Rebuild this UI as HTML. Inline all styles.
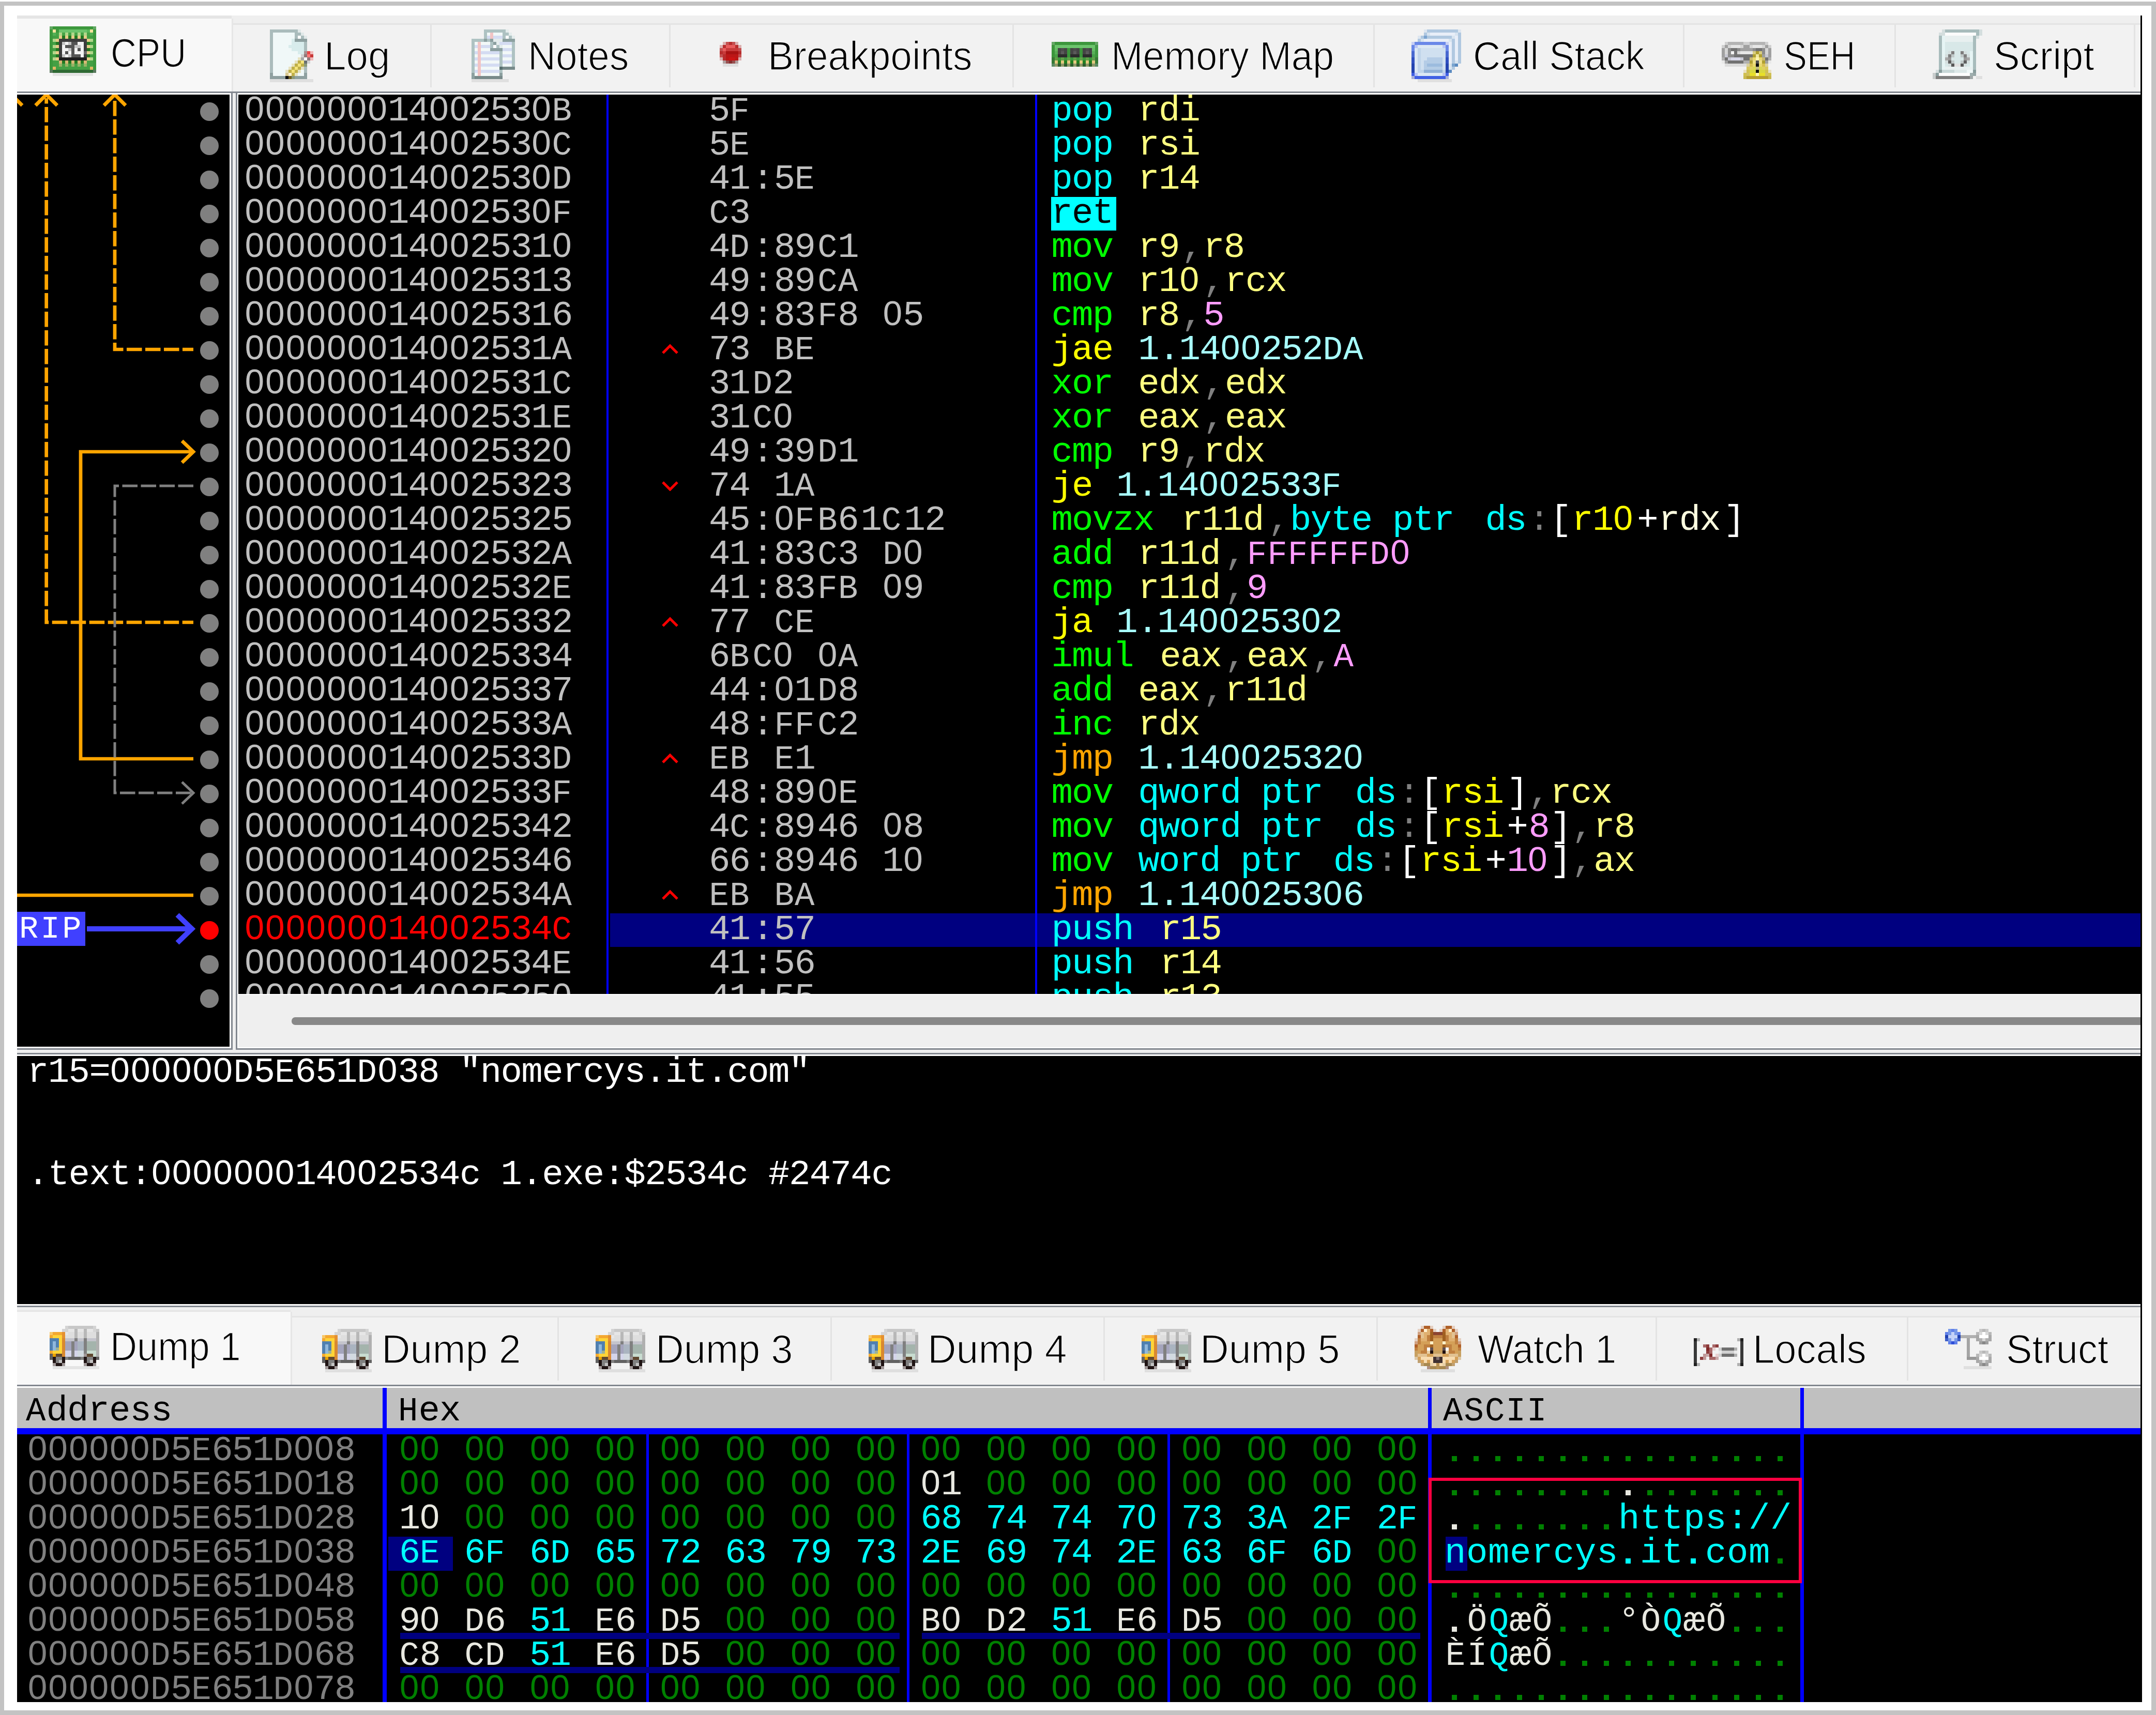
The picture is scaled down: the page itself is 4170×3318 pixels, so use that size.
<!DOCTYPE html><html><head><meta charset="utf-8"><style>
*{margin:0;padding:0;box-sizing:border-box}
html,body{width:4170px;height:3318px;overflow:hidden;background:#fff}
body{position:relative;font-family:"Liberation Sans",sans-serif}
.a{position:absolute}
.m{font-family:"Liberation Mono",monospace;white-space:pre;position:absolute;font-size:69px;line-height:66px;height:66px;-webkit-text-stroke:0px #000}
.t{position:absolute;font-family:"Liberation Sans",sans-serif;font-size:78px;line-height:78px;white-space:pre;color:#000;transform-origin:0 0;-webkit-text-stroke:1.6px #f4f4f4}
.z,.u{font-style:normal;display:inline-block;width:var(--w);text-align:center;letter-spacing:0;line-height:0}
.z{font-family:"Liberation Sans",sans-serif;font-size:67px}
.u{font-size:64px}
</style></head><body>

<div class="a" style="left:0;top:3px;width:4170px;height:8px;background:#c3c3c3"></div>
<div class="a" style="left:0;top:3px;width:8px;height:3315px;background:#c3c3c3"></div>
<div class="a" style="left:4161px;top:3px;width:9px;height:3315px;background:#c3c3c3"></div>
<div class="a" style="left:0;top:3309px;width:4170px;height:9px;background:#c3c3c3"></div>
<div class="a" style="left:4140px;top:30px;width:3px;height:3263px;background:#000"></div>
<div class="a" style="left:33px;top:30px;width:4107px;height:147px;background:#efefef"></div>
<div class="a" style="left:33px;top:45px;width:4107px;height:3px;background:#e4e4e4"></div>
<div class="a" style="left:33px;top:48px;width:4107px;height:129px;background:#f2f2f2"></div>
<div class="a" style="left:33px;top:30px;width:415px;height:6px;background:#e5e5e5"></div>
<div class="a" style="left:33px;top:36px;width:415px;height:141px;background:#f8f8f8"></div>
<div class="a" style="left:448px;top:36px;width:3px;height:141px;background:#e6e6e6"></div>
<div class="a" style="left:832px;top:48px;width:3px;height:121px;background:#e3e3e3"></div>
<div class="a" style="left:1294px;top:48px;width:3px;height:121px;background:#e3e3e3"></div>
<div class="a" style="left:1958px;top:48px;width:3px;height:121px;background:#e3e3e3"></div>
<div class="a" style="left:2656px;top:48px;width:3px;height:121px;background:#e3e3e3"></div>
<div class="a" style="left:3255px;top:48px;width:3px;height:121px;background:#e3e3e3"></div>
<div class="a" style="left:3664px;top:48px;width:3px;height:121px;background:#e3e3e3"></div>
<div class="a" style="left:4127px;top:48px;width:3px;height:121px;background:#e3e3e3"></div>
<div class="a" style="left:33px;top:177px;width:4107px;height:3px;background:#82878f"></div>
<div class="a" style="left:33px;top:180px;width:4107px;height:3px;background:#fff"></div>
<div class="t" style="left:214.35965572275418px;top:63px;transform:scaleX(0.8879542863657099)">CPU</div>
<div class="t" style="left:626.9925302077654px;top:68.5px;transform:scaleX(0.9794772870851173)">Log</div>
<div class="t" style="left:1020.6945507405288px;top:69px;transform:scaleX(0.9584282874396253)">Notes</div>
<div class="t" style="left:1484.8650752645844px;top:69px;transform:scaleX(0.9601157210925156)">Breakpoints</div>
<div class="t" style="left:2148.865728126276px;top:69px;transform:scaleX(0.9471024609299021)">Memory Map</div>
<div class="t" style="left:2848.5310433775085px;top:69px;transform:scaleX(0.9444462781635823)">Call Stack</div>
<div class="t" style="left:3449.9977764741743px;top:69px;transform:scaleX(0.8630100339483612)">SEH</div>
<div class="t" style="left:3855.891891891892px;top:69px;transform:scaleX(0.9756756756756757)">Script</div>
<svg class="a" style="left:96px;top:51px" width="90" height="96" viewBox="0 0 90 96" shape-rendering="crispEdges"><rect x="6" y="90" width="78" height="6" fill="#000" opacity="0.08"/><rect x="0" y="0" width="6" height="6" fill="#62a862"/><rect x="6" y="0" width="78" height="6" fill="#3c983c"/><rect x="84" y="0" width="6" height="6" fill="#62a862"/><rect x="0" y="6" width="6" height="6" fill="#3c983c"/><rect x="6" y="6" width="6" height="6" fill="#fae49c"/><rect x="12" y="6" width="6" height="6" fill="#3c983c"/><rect x="18" y="6" width="54" height="6" fill="#6cc46c"/><rect x="72" y="6" width="6" height="6" fill="#58b858"/><rect x="78" y="6" width="6" height="6" fill="#fae49c"/><rect x="84" y="6" width="6" height="6" fill="#3c983c"/><rect x="0" y="12" width="6" height="6" fill="#3c983c"/><rect x="6" y="12" width="6" height="6" fill="#55b055"/><rect x="12" y="12" width="6" height="6" fill="#46a446"/><rect x="18" y="12" width="6" height="6" fill="#b2d68a"/><rect x="24" y="12" width="6" height="6" fill="#46a446"/><rect x="30" y="12" width="6" height="6" fill="#b2d68a"/><rect x="36" y="12" width="6" height="6" fill="#46a446"/><rect x="42" y="12" width="6" height="6" fill="#b2d68a"/><rect x="48" y="12" width="6" height="6" fill="#46a446"/><rect x="54" y="12" width="6" height="6" fill="#b2d68a"/><rect x="60" y="12" width="6" height="6" fill="#46a446"/><rect x="66" y="12" width="6" height="6" fill="#b2d68a"/><rect x="72" y="12" width="6" height="6" fill="#46a446"/><rect x="78" y="12" width="6" height="6" fill="#55b055"/><rect x="84" y="12" width="6" height="6" fill="#3c983c"/><rect x="0" y="18" width="6" height="6" fill="#3c983c"/><rect x="6" y="18" width="12" height="6" fill="#44a044"/><rect x="18" y="18" width="6" height="6" fill="#e6cc88"/><rect x="24" y="18" width="6" height="6" fill="#227822"/><rect x="30" y="18" width="6" height="6" fill="#e6cc88"/><rect x="36" y="18" width="6" height="6" fill="#227822"/><rect x="42" y="18" width="6" height="6" fill="#e6cc88"/><rect x="48" y="18" width="6" height="6" fill="#227822"/><rect x="54" y="18" width="6" height="6" fill="#e6cc88"/><rect x="60" y="18" width="6" height="6" fill="#227822"/><rect x="66" y="18" width="6" height="6" fill="#e6cc88"/><rect x="72" y="18" width="12" height="6" fill="#44a044"/><rect x="84" y="18" width="6" height="6" fill="#3c983c"/><rect x="0" y="24" width="6" height="6" fill="#3c983c"/><rect x="6" y="24" width="6" height="6" fill="#b2d68a"/><rect x="12" y="24" width="6" height="6" fill="#e6cc88"/><rect x="18" y="24" width="54" height="6" fill="#3c3c3c"/><rect x="72" y="24" width="6" height="6" fill="#e6cc88"/><rect x="78" y="24" width="6" height="6" fill="#b2d68a"/><rect x="84" y="24" width="6" height="6" fill="#3c983c"/><rect x="0" y="30" width="6" height="6" fill="#3c983c"/><rect x="6" y="30" width="6" height="6" fill="#44a044"/><rect x="12" y="30" width="6" height="6" fill="#227822"/><rect x="18" y="30" width="6" height="6" fill="#3c3c3c"/><rect x="24" y="30" width="6" height="6" fill="#c4c4c4"/><rect x="30" y="30" width="6" height="6" fill="#f2f2f2"/><rect x="36" y="30" width="6" height="6" fill="#c4c4c4"/><rect x="42" y="30" width="12" height="6" fill="#545454"/><rect x="54" y="30" width="12" height="6" fill="#f2f2f2"/><rect x="66" y="30" width="6" height="6" fill="#3c3c3c"/><rect x="72" y="30" width="6" height="6" fill="#227822"/><rect x="78" y="30" width="6" height="6" fill="#44a044"/><rect x="84" y="30" width="6" height="6" fill="#3c983c"/><rect x="0" y="36" width="6" height="6" fill="#3c983c"/><rect x="6" y="36" width="6" height="6" fill="#b2d68a"/><rect x="12" y="36" width="6" height="6" fill="#e6cc88"/><rect x="18" y="36" width="6" height="6" fill="#3c3c3c"/><rect x="24" y="36" width="6" height="6" fill="#f2f2f2"/><rect x="30" y="36" width="18" height="6" fill="#545454"/><rect x="48" y="36" width="12" height="6" fill="#c4c4c4"/><rect x="60" y="36" width="6" height="6" fill="#f2f2f2"/><rect x="66" y="36" width="6" height="6" fill="#3c3c3c"/><rect x="72" y="36" width="6" height="6" fill="#e6cc88"/><rect x="78" y="36" width="6" height="6" fill="#b2d68a"/><rect x="84" y="36" width="6" height="6" fill="#3c983c"/><rect x="0" y="42" width="6" height="6" fill="#3c983c"/><rect x="6" y="42" width="6" height="6" fill="#44a044"/><rect x="12" y="42" width="6" height="6" fill="#227822"/><rect x="18" y="42" width="6" height="6" fill="#3c3c3c"/><rect x="24" y="42" width="12" height="6" fill="#f2f2f2"/><rect x="36" y="42" width="6" height="6" fill="#c4c4c4"/><rect x="42" y="42" width="6" height="6" fill="#545454"/><rect x="48" y="42" width="6" height="6" fill="#f2f2f2"/><rect x="54" y="42" width="6" height="6" fill="#545454"/><rect x="60" y="42" width="6" height="6" fill="#f2f2f2"/><rect x="66" y="42" width="6" height="6" fill="#3c3c3c"/><rect x="72" y="42" width="6" height="6" fill="#227822"/><rect x="78" y="42" width="6" height="6" fill="#44a044"/><rect x="84" y="42" width="6" height="6" fill="#3c983c"/><rect x="0" y="48" width="6" height="6" fill="#3c983c"/><rect x="6" y="48" width="6" height="6" fill="#b2d68a"/><rect x="12" y="48" width="6" height="6" fill="#e6cc88"/><rect x="18" y="48" width="6" height="6" fill="#3c3c3c"/><rect x="24" y="48" width="6" height="6" fill="#f2f2f2"/><rect x="30" y="48" width="6" height="6" fill="#545454"/><rect x="36" y="48" width="6" height="6" fill="#f2f2f2"/><rect x="42" y="48" width="6" height="6" fill="#545454"/><rect x="48" y="48" width="18" height="6" fill="#f2f2f2"/><rect x="66" y="48" width="6" height="6" fill="#6a6a6a"/><rect x="72" y="48" width="6" height="6" fill="#e6cc88"/><rect x="78" y="48" width="6" height="6" fill="#b2d68a"/><rect x="84" y="48" width="6" height="6" fill="#3c983c"/><rect x="0" y="54" width="6" height="6" fill="#3c983c"/><rect x="6" y="54" width="6" height="6" fill="#44a044"/><rect x="12" y="54" width="6" height="6" fill="#227822"/><rect x="18" y="54" width="6" height="6" fill="#3c3c3c"/><rect x="24" y="54" width="6" height="6" fill="#c4c4c4"/><rect x="30" y="54" width="6" height="6" fill="#f2f2f2"/><rect x="36" y="54" width="6" height="6" fill="#c4c4c4"/><rect x="42" y="54" width="18" height="6" fill="#545454"/><rect x="60" y="54" width="6" height="6" fill="#f2f2f2"/><rect x="66" y="54" width="6" height="6" fill="#3c3c3c"/><rect x="72" y="54" width="6" height="6" fill="#227822"/><rect x="78" y="54" width="6" height="6" fill="#44a044"/><rect x="84" y="54" width="6" height="6" fill="#3c983c"/><rect x="0" y="60" width="6" height="6" fill="#3c983c"/><rect x="6" y="60" width="6" height="6" fill="#b2d68a"/><rect x="12" y="60" width="6" height="6" fill="#e6cc88"/><rect x="18" y="60" width="54" height="6" fill="#1e1e1e"/><rect x="72" y="60" width="6" height="6" fill="#e6cc88"/><rect x="78" y="60" width="6" height="6" fill="#b2d68a"/><rect x="84" y="60" width="6" height="6" fill="#3c983c"/><rect x="0" y="66" width="6" height="6" fill="#3c983c"/><rect x="6" y="66" width="12" height="6" fill="#44a044"/><rect x="18" y="66" width="6" height="6" fill="#d6b874"/><rect x="24" y="66" width="6" height="6" fill="#227822"/><rect x="30" y="66" width="6" height="6" fill="#d6b874"/><rect x="36" y="66" width="6" height="6" fill="#227822"/><rect x="42" y="66" width="6" height="6" fill="#d6b874"/><rect x="48" y="66" width="6" height="6" fill="#227822"/><rect x="54" y="66" width="6" height="6" fill="#d6b874"/><rect x="60" y="66" width="6" height="6" fill="#227822"/><rect x="66" y="66" width="6" height="6" fill="#d6b874"/><rect x="72" y="66" width="12" height="6" fill="#44a044"/><rect x="84" y="66" width="6" height="6" fill="#3c983c"/><rect x="0" y="72" width="6" height="6" fill="#3c983c"/><rect x="6" y="72" width="12" height="6" fill="#44a044"/><rect x="18" y="72" width="6" height="6" fill="#98b266"/><rect x="24" y="72" width="6" height="6" fill="#44a044"/><rect x="30" y="72" width="6" height="6" fill="#98b266"/><rect x="36" y="72" width="6" height="6" fill="#44a044"/><rect x="42" y="72" width="6" height="6" fill="#98b266"/><rect x="48" y="72" width="6" height="6" fill="#44a044"/><rect x="54" y="72" width="6" height="6" fill="#98b266"/><rect x="60" y="72" width="6" height="6" fill="#44a044"/><rect x="66" y="72" width="6" height="6" fill="#98b266"/><rect x="72" y="72" width="12" height="6" fill="#44a044"/><rect x="84" y="72" width="6" height="6" fill="#3c983c"/><rect x="0" y="78" width="6" height="6" fill="#3c983c"/><rect x="6" y="78" width="6" height="6" fill="#e0b864"/><rect x="12" y="78" width="66" height="6" fill="#44a044"/><rect x="78" y="78" width="6" height="6" fill="#e0b864"/><rect x="84" y="78" width="6" height="6" fill="#3c983c"/><rect x="0" y="84" width="6" height="6" fill="#5a7a5e"/><rect x="6" y="84" width="78" height="6" fill="#2f6a34"/><rect x="84" y="84" width="6" height="6" fill="#5a7a5e"/></svg>
<svg class="a" style="left:522px;top:57px" width="84" height="102" viewBox="0 0 84 102" shape-rendering="crispEdges"><rect x="-12" y="96" width="108" height="6" fill="#000" opacity="0.08"/><rect x="0" y="0" width="54" height="6" fill="#aabcbc"/><rect x="54" y="0" width="6" height="6" fill="#e0e8e8"/><rect x="0" y="6" width="6" height="6" fill="#aabcbc"/><rect x="6" y="6" width="42" height="6" fill="#f0f8f8"/><rect x="48" y="6" width="12" height="6" fill="#aabcbc"/><rect x="60" y="6" width="6" height="6" fill="#e0e8e8"/><rect x="0" y="12" width="6" height="6" fill="#aabcbc"/><rect x="6" y="12" width="42" height="6" fill="#f0f8f8"/><rect x="48" y="12" width="6" height="6" fill="#aabcbc"/><rect x="54" y="12" width="6" height="6" fill="#ffffff"/><rect x="60" y="12" width="6" height="6" fill="#aabcbc"/><rect x="66" y="12" width="6" height="6" fill="#e0e8e8"/><rect x="0" y="18" width="6" height="6" fill="#aabcbc"/><rect x="6" y="18" width="36" height="6" fill="#f0f8f8"/><rect x="42" y="18" width="6" height="6" fill="#d8ecec"/><rect x="48" y="18" width="24" height="6" fill="#8ea0a0"/><rect x="0" y="24" width="6" height="6" fill="#aabcbc"/><rect x="6" y="24" width="36" height="6" fill="#f0f8f8"/><rect x="42" y="24" width="24" height="6" fill="#d8ecec"/><rect x="66" y="24" width="6" height="6" fill="#aabcbc"/><rect x="0" y="30" width="6" height="6" fill="#aabcbc"/><rect x="6" y="30" width="30" height="6" fill="#f0f8f8"/><rect x="36" y="30" width="30" height="6" fill="#d8ecec"/><rect x="66" y="30" width="6" height="6" fill="#aabcbc"/><rect x="0" y="36" width="6" height="6" fill="#aabcbc"/><rect x="6" y="36" width="36" height="6" fill="#f0f8f8"/><rect x="42" y="36" width="24" height="6" fill="#d8ecec"/><rect x="66" y="36" width="6" height="6" fill="#aabcbc"/><rect x="0" y="42" width="6" height="6" fill="#aabcbc"/><rect x="6" y="42" width="48" height="6" fill="#f0f8f8"/><rect x="54" y="42" width="12" height="6" fill="#d8ecec"/><rect x="66" y="42" width="6" height="6" fill="#a89090"/><rect x="72" y="42" width="6" height="6" fill="#e84848"/><rect x="78" y="42" width="6" height="6" fill="#f0b8b8"/><rect x="0" y="48" width="6" height="6" fill="#aabcbc"/><rect x="6" y="48" width="54" height="6" fill="#f0f8f8"/><rect x="60" y="48" width="6" height="6" fill="#d0d0d0"/><rect x="66" y="48" width="6" height="6" fill="#907878"/><rect x="72" y="48" width="6" height="6" fill="#ff7878"/><rect x="78" y="48" width="6" height="6" fill="#c83838"/><rect x="0" y="54" width="6" height="6" fill="#aabcbc"/><rect x="6" y="54" width="48" height="6" fill="#f0f8f8"/><rect x="54" y="54" width="6" height="6" fill="#e6e2c0"/><rect x="60" y="54" width="6" height="6" fill="#a8a8a8"/><rect x="66" y="54" width="6" height="6" fill="#ffffff"/><rect x="72" y="54" width="6" height="6" fill="#907878"/><rect x="78" y="54" width="6" height="6" fill="#f0b8b8"/><rect x="0" y="60" width="6" height="6" fill="#aabcbc"/><rect x="6" y="60" width="42" height="6" fill="#f0f8f8"/><rect x="48" y="60" width="6" height="6" fill="#e6e2c0"/><rect x="54" y="60" width="6" height="6" fill="#c0b048"/><rect x="60" y="60" width="6" height="6" fill="#f4e47a"/><rect x="66" y="60" width="6" height="6" fill="#687070"/><rect x="72" y="60" width="6" height="6" fill="#d0d0d0"/><rect x="0" y="66" width="6" height="6" fill="#aabcbc"/><rect x="6" y="66" width="36" height="6" fill="#f0f8f8"/><rect x="42" y="66" width="6" height="6" fill="#e6e2c0"/><rect x="48" y="66" width="6" height="6" fill="#c0b048"/><rect x="54" y="66" width="6" height="6" fill="#f4e47a"/><rect x="60" y="66" width="6" height="6" fill="#c0b048"/><rect x="66" y="66" width="6" height="6" fill="#8a9878"/><rect x="0" y="72" width="6" height="6" fill="#aabcbc"/><rect x="6" y="72" width="30" height="6" fill="#f0f8f8"/><rect x="36" y="72" width="6" height="6" fill="#e6e2c0"/><rect x="42" y="72" width="6" height="6" fill="#c0b048"/><rect x="48" y="72" width="6" height="6" fill="#f4e47a"/><rect x="54" y="72" width="6" height="6" fill="#c0b048"/><rect x="60" y="72" width="6" height="6" fill="#e6e2c0"/><rect x="66" y="72" width="6" height="6" fill="#aabcbc"/><rect x="0" y="78" width="6" height="6" fill="#aabcbc"/><rect x="6" y="78" width="24" height="6" fill="#f0f8f8"/><rect x="30" y="78" width="6" height="6" fill="#e6e2c0"/><rect x="36" y="78" width="6" height="6" fill="#c0b048"/><rect x="42" y="78" width="6" height="6" fill="#f4e47a"/><rect x="48" y="78" width="6" height="6" fill="#c0b048"/><rect x="54" y="78" width="6" height="6" fill="#e6e2c0"/><rect x="60" y="78" width="6" height="6" fill="#f0f8f8"/><rect x="66" y="78" width="6" height="6" fill="#aabcbc"/><rect x="0" y="84" width="6" height="6" fill="#8ea0a0"/><rect x="6" y="84" width="24" height="6" fill="#f0f8f8"/><rect x="30" y="84" width="6" height="6" fill="#d8c890"/><rect x="36" y="84" width="6" height="6" fill="#fff2d0"/><rect x="42" y="84" width="6" height="6" fill="#c0b048"/><rect x="48" y="84" width="6" height="6" fill="#e6e2c0"/><rect x="54" y="84" width="12" height="6" fill="#f0f8f8"/><rect x="66" y="84" width="6" height="6" fill="#8ea0a0"/><rect x="0" y="90" width="30" height="6" fill="#8ea0a0"/><rect x="30" y="90" width="6" height="6" fill="#101010"/><rect x="36" y="90" width="6" height="6" fill="#706020"/><rect x="42" y="90" width="6" height="6" fill="#8a9878"/><rect x="48" y="90" width="24" height="6" fill="#8ea0a0"/></svg>
<svg class="a" style="left:912px;top:57px" width="84" height="102" viewBox="0 0 84 102" shape-rendering="crispEdges"><rect x="-6" y="96" width="78" height="6" fill="#000" opacity="0.08"/><rect x="24" y="0" width="42" height="6" fill="#aec2c2"/><rect x="66" y="0" width="6" height="6" fill="#e4ecec"/><rect x="24" y="6" width="6" height="6" fill="#aec2c2"/><rect x="30" y="6" width="6" height="6" fill="#f2f8f8"/><rect x="36" y="6" width="6" height="6" fill="#f2c4c4"/><rect x="42" y="6" width="18" height="6" fill="#f2f8f8"/><rect x="60" y="6" width="12" height="6" fill="#aec2c2"/><rect x="72" y="6" width="6" height="6" fill="#e4ecec"/><rect x="24" y="12" width="6" height="6" fill="#aec2c2"/><rect x="30" y="12" width="6" height="6" fill="#d4dcf2"/><rect x="36" y="12" width="6" height="6" fill="#f2c4c4"/><rect x="42" y="12" width="18" height="6" fill="#d4dcf2"/><rect x="60" y="12" width="6" height="6" fill="#aec2c2"/><rect x="66" y="12" width="6" height="6" fill="#ffffff"/><rect x="72" y="12" width="6" height="6" fill="#aec2c2"/><rect x="78" y="12" width="6" height="6" fill="#e4ecec"/><rect x="0" y="18" width="24" height="6" fill="#aec2c2"/><rect x="24" y="18" width="6" height="6" fill="#8ca0a0"/><rect x="30" y="18" width="6" height="6" fill="#aec2c2"/><rect x="36" y="18" width="6" height="6" fill="#8ca0a0"/><rect x="42" y="18" width="18" height="6" fill="#e4ecec"/><rect x="60" y="18" width="24" height="6" fill="#8ca0a0"/><rect x="0" y="24" width="6" height="6" fill="#aec2c2"/><rect x="6" y="24" width="6" height="6" fill="#f2f8f8"/><rect x="12" y="24" width="6" height="6" fill="#f2c4c4"/><rect x="18" y="24" width="18" height="6" fill="#f2f8f8"/><rect x="36" y="24" width="6" height="6" fill="#aec2c2"/><rect x="42" y="24" width="6" height="6" fill="#8ca0a0"/><rect x="48" y="24" width="6" height="6" fill="#e4ecec"/><rect x="54" y="24" width="24" height="6" fill="#d4dcf2"/><rect x="78" y="24" width="6" height="6" fill="#aec2c2"/><rect x="0" y="30" width="6" height="6" fill="#aec2c2"/><rect x="6" y="30" width="6" height="6" fill="#d4dcf2"/><rect x="12" y="30" width="6" height="6" fill="#f2c4c4"/><rect x="18" y="30" width="18" height="6" fill="#d4dcf2"/><rect x="36" y="30" width="6" height="6" fill="#aec2c2"/><rect x="42" y="30" width="6" height="6" fill="#ffffff"/><rect x="48" y="30" width="6" height="6" fill="#aec2c2"/><rect x="54" y="30" width="6" height="6" fill="#e4ecec"/><rect x="60" y="30" width="18" height="6" fill="#f2f8f8"/><rect x="78" y="30" width="6" height="6" fill="#aec2c2"/><rect x="0" y="36" width="6" height="6" fill="#aec2c2"/><rect x="6" y="36" width="6" height="6" fill="#f2f8f8"/><rect x="12" y="36" width="6" height="6" fill="#f2c4c4"/><rect x="18" y="36" width="18" height="6" fill="#f2f8f8"/><rect x="36" y="36" width="24" height="6" fill="#8ca0a0"/><rect x="60" y="36" width="18" height="6" fill="#d4dcf2"/><rect x="78" y="36" width="6" height="6" fill="#aec2c2"/><rect x="0" y="42" width="6" height="6" fill="#aec2c2"/><rect x="6" y="42" width="6" height="6" fill="#d4dcf2"/><rect x="12" y="42" width="6" height="6" fill="#f2c4c4"/><rect x="18" y="42" width="36" height="6" fill="#d4dcf2"/><rect x="54" y="42" width="6" height="6" fill="#aec2c2"/><rect x="60" y="42" width="18" height="6" fill="#f2f8f8"/><rect x="78" y="42" width="6" height="6" fill="#aec2c2"/><rect x="0" y="48" width="6" height="6" fill="#aec2c2"/><rect x="6" y="48" width="6" height="6" fill="#f2f8f8"/><rect x="12" y="48" width="6" height="6" fill="#f2c4c4"/><rect x="18" y="48" width="36" height="6" fill="#f2f8f8"/><rect x="54" y="48" width="6" height="6" fill="#aec2c2"/><rect x="60" y="48" width="18" height="6" fill="#d4dcf2"/><rect x="78" y="48" width="6" height="6" fill="#aec2c2"/><rect x="0" y="54" width="6" height="6" fill="#aec2c2"/><rect x="6" y="54" width="6" height="6" fill="#d4dcf2"/><rect x="12" y="54" width="6" height="6" fill="#f2c4c4"/><rect x="18" y="54" width="36" height="6" fill="#d4dcf2"/><rect x="54" y="54" width="6" height="6" fill="#aec2c2"/><rect x="60" y="54" width="18" height="6" fill="#f2f8f8"/><rect x="78" y="54" width="6" height="6" fill="#aec2c2"/><rect x="0" y="60" width="6" height="6" fill="#aec2c2"/><rect x="6" y="60" width="6" height="6" fill="#f2f8f8"/><rect x="12" y="60" width="6" height="6" fill="#f2c4c4"/><rect x="18" y="60" width="36" height="6" fill="#f2f8f8"/><rect x="54" y="60" width="6" height="6" fill="#aec2c2"/><rect x="60" y="60" width="18" height="6" fill="#d4dcf2"/><rect x="78" y="60" width="6" height="6" fill="#aec2c2"/><rect x="0" y="66" width="6" height="6" fill="#aec2c2"/><rect x="6" y="66" width="6" height="6" fill="#d4dcf2"/><rect x="12" y="66" width="6" height="6" fill="#f2c4c4"/><rect x="18" y="66" width="36" height="6" fill="#d4dcf2"/><rect x="54" y="66" width="6" height="6" fill="#aec2c2"/><rect x="60" y="66" width="18" height="6" fill="#f2f8f8"/><rect x="78" y="66" width="6" height="6" fill="#aec2c2"/><rect x="0" y="72" width="6" height="6" fill="#aec2c2"/><rect x="6" y="72" width="6" height="6" fill="#f2f8f8"/><rect x="12" y="72" width="6" height="6" fill="#f2c4c4"/><rect x="18" y="72" width="36" height="6" fill="#f2f8f8"/><rect x="54" y="72" width="6" height="6" fill="#587070"/><rect x="60" y="72" width="24" height="6" fill="#788a8a"/><rect x="0" y="78" width="6" height="6" fill="#aec2c2"/><rect x="6" y="78" width="6" height="6" fill="#d4dcf2"/><rect x="12" y="78" width="6" height="6" fill="#f2c4c4"/><rect x="18" y="78" width="36" height="6" fill="#d4dcf2"/><rect x="54" y="78" width="6" height="6" fill="#aec2c2"/><rect x="0" y="84" width="6" height="6" fill="#8ca0a0"/><rect x="6" y="84" width="6" height="6" fill="#f2f8f8"/><rect x="12" y="84" width="6" height="6" fill="#f2c4c4"/><rect x="18" y="84" width="36" height="6" fill="#f2f8f8"/><rect x="54" y="84" width="6" height="6" fill="#8ca0a0"/><rect x="0" y="90" width="6" height="6" fill="#8ca0a0"/><rect x="6" y="90" width="54" height="6" fill="#788a8a"/></svg>
<svg class="a" style="left:1392px;top:81px" width="42" height="48" viewBox="0 0 42 48" shape-rendering="crispEdges"><rect x="6" y="42" width="30" height="6" fill="#000" opacity="0.08"/><rect x="6" y="0" width="6" height="6" fill="#dcb0b0"/><rect x="12" y="0" width="6" height="6" fill="#c45050"/><rect x="18" y="0" width="6" height="6" fill="#b82c2c"/><rect x="24" y="0" width="6" height="6" fill="#c45050"/><rect x="30" y="0" width="6" height="6" fill="#dcb0b0"/><rect x="0" y="6" width="6" height="6" fill="#dcb0b0"/><rect x="6" y="6" width="6" height="6" fill="#b82c2c"/><rect x="12" y="6" width="18" height="6" fill="#e85c5c"/><rect x="30" y="6" width="6" height="6" fill="#b82c2c"/><rect x="36" y="6" width="6" height="6" fill="#dcb0b0"/><rect x="0" y="12" width="6" height="6" fill="#c45050"/><rect x="6" y="12" width="6" height="6" fill="#e85c5c"/><rect x="12" y="12" width="24" height="6" fill="#c83a3a"/><rect x="36" y="12" width="6" height="6" fill="#c45050"/><rect x="0" y="18" width="6" height="6" fill="#b82c2c"/><rect x="6" y="18" width="6" height="6" fill="#c83a3a"/><rect x="12" y="18" width="24" height="6" fill="#a81212"/><rect x="36" y="18" width="6" height="6" fill="#b82c2c"/><rect x="0" y="24" width="6" height="6" fill="#c45050"/><rect x="6" y="24" width="6" height="6" fill="#b82c2c"/><rect x="12" y="24" width="24" height="6" fill="#bc1616"/><rect x="36" y="24" width="6" height="6" fill="#c45050"/><rect x="0" y="30" width="6" height="6" fill="#dcb0b0"/><rect x="6" y="30" width="6" height="6" fill="#b82c2c"/><rect x="12" y="30" width="6" height="6" fill="#bc1616"/><rect x="18" y="30" width="12" height="6" fill="#cc1414"/><rect x="30" y="30" width="6" height="6" fill="#bc1616"/><rect x="36" y="30" width="6" height="6" fill="#dcb0b0"/><rect x="6" y="36" width="6" height="6" fill="#b0a0a0"/><rect x="12" y="36" width="6" height="6" fill="#985050"/><rect x="18" y="36" width="6" height="6" fill="#883030"/><rect x="24" y="36" width="6" height="6" fill="#985050"/><rect x="30" y="36" width="6" height="6" fill="#b0a0a0"/></svg>
<svg class="a" style="left:2034px;top:81px" width="90" height="54" viewBox="0 0 90 54" shape-rendering="crispEdges"><rect x="0" y="0" width="6" height="6" fill="#66a866"/><rect x="6" y="0" width="78" height="6" fill="#3c963c"/><rect x="84" y="0" width="6" height="6" fill="#66a866"/><rect x="0" y="6" width="6" height="6" fill="#3c963c"/><rect x="6" y="6" width="78" height="6" fill="#6cc46c"/><rect x="84" y="6" width="6" height="6" fill="#3c963c"/><rect x="0" y="12" width="6" height="6" fill="#3c963c"/><rect x="6" y="12" width="6" height="6" fill="#64bc64"/><rect x="12" y="12" width="6" height="6" fill="#444444"/><rect x="18" y="12" width="6" height="6" fill="#4c4c4c"/><rect x="24" y="12" width="6" height="6" fill="#444444"/><rect x="30" y="12" width="6" height="6" fill="#3a963a"/><rect x="36" y="12" width="6" height="6" fill="#444444"/><rect x="42" y="12" width="6" height="6" fill="#4c4c4c"/><rect x="48" y="12" width="6" height="6" fill="#444444"/><rect x="54" y="12" width="6" height="6" fill="#3a963a"/><rect x="60" y="12" width="6" height="6" fill="#444444"/><rect x="66" y="12" width="6" height="6" fill="#4c4c4c"/><rect x="72" y="12" width="6" height="6" fill="#444444"/><rect x="78" y="12" width="6" height="6" fill="#64bc64"/><rect x="84" y="12" width="6" height="6" fill="#3c963c"/><rect x="0" y="18" width="6" height="6" fill="#3c963c"/><rect x="6" y="18" width="6" height="6" fill="#58b058"/><rect x="12" y="18" width="6" height="6" fill="#444444"/><rect x="18" y="18" width="6" height="6" fill="#5a5a5a"/><rect x="24" y="18" width="6" height="6" fill="#444444"/><rect x="30" y="18" width="6" height="6" fill="#3a963a"/><rect x="36" y="18" width="6" height="6" fill="#444444"/><rect x="42" y="18" width="6" height="6" fill="#5a5a5a"/><rect x="48" y="18" width="6" height="6" fill="#444444"/><rect x="54" y="18" width="6" height="6" fill="#3a963a"/><rect x="60" y="18" width="6" height="6" fill="#444444"/><rect x="66" y="18" width="6" height="6" fill="#5a5a5a"/><rect x="72" y="18" width="6" height="6" fill="#444444"/><rect x="78" y="18" width="6" height="6" fill="#58b058"/><rect x="84" y="18" width="6" height="6" fill="#3c963c"/><rect x="0" y="24" width="6" height="6" fill="#3c963c"/><rect x="6" y="24" width="6" height="6" fill="#48a248"/><rect x="12" y="24" width="18" height="6" fill="#2c2c2c"/><rect x="30" y="24" width="6" height="6" fill="#3a963a"/><rect x="36" y="24" width="18" height="6" fill="#2c2c2c"/><rect x="54" y="24" width="6" height="6" fill="#3a963a"/><rect x="60" y="24" width="18" height="6" fill="#2c2c2c"/><rect x="78" y="24" width="6" height="6" fill="#48a248"/><rect x="84" y="24" width="6" height="6" fill="#3c963c"/><rect x="0" y="30" width="6" height="6" fill="#367a36"/><rect x="6" y="30" width="6" height="6" fill="#62a04a"/><rect x="12" y="30" width="6" height="6" fill="#3c963c"/><rect x="18" y="30" width="6" height="6" fill="#62a04a"/><rect x="24" y="30" width="6" height="6" fill="#3c963c"/><rect x="30" y="30" width="6" height="6" fill="#62a04a"/><rect x="36" y="30" width="6" height="6" fill="#3c963c"/><rect x="42" y="30" width="6" height="6" fill="#62a04a"/><rect x="48" y="30" width="6" height="6" fill="#3c963c"/><rect x="54" y="30" width="6" height="6" fill="#62a04a"/><rect x="60" y="30" width="6" height="6" fill="#3c963c"/><rect x="66" y="30" width="6" height="6" fill="#62a04a"/><rect x="72" y="30" width="6" height="6" fill="#3c963c"/><rect x="78" y="30" width="6" height="6" fill="#62a04a"/><rect x="84" y="30" width="6" height="6" fill="#367a36"/><rect x="0" y="36" width="6" height="6" fill="#367a36"/><rect x="6" y="36" width="6" height="6" fill="#e4c880"/><rect x="12" y="36" width="6" height="6" fill="#228022"/><rect x="18" y="36" width="6" height="6" fill="#e4c880"/><rect x="24" y="36" width="6" height="6" fill="#228022"/><rect x="30" y="36" width="6" height="6" fill="#e4c880"/><rect x="36" y="36" width="6" height="6" fill="#228022"/><rect x="42" y="36" width="6" height="6" fill="#e4c880"/><rect x="48" y="36" width="6" height="6" fill="#228022"/><rect x="54" y="36" width="6" height="6" fill="#e4c880"/><rect x="60" y="36" width="6" height="6" fill="#228022"/><rect x="66" y="36" width="6" height="6" fill="#e4c880"/><rect x="72" y="36" width="6" height="6" fill="#228022"/><rect x="78" y="36" width="6" height="6" fill="#e4c880"/><rect x="84" y="36" width="6" height="6" fill="#367a36"/><rect x="0" y="42" width="6" height="6" fill="#5a8a62"/><rect x="6" y="42" width="6" height="6" fill="#909868"/><rect x="12" y="42" width="6" height="6" fill="#2e5e2e"/><rect x="18" y="42" width="6" height="6" fill="#909868"/><rect x="24" y="42" width="6" height="6" fill="#2e5e2e"/><rect x="30" y="42" width="6" height="6" fill="#909868"/><rect x="36" y="42" width="6" height="6" fill="#2e5e2e"/><rect x="42" y="42" width="6" height="6" fill="#909868"/><rect x="48" y="42" width="6" height="6" fill="#2e5e2e"/><rect x="54" y="42" width="6" height="6" fill="#909868"/><rect x="60" y="42" width="6" height="6" fill="#2e5e2e"/><rect x="66" y="42" width="6" height="6" fill="#909868"/><rect x="72" y="42" width="6" height="6" fill="#2e5e2e"/><rect x="78" y="42" width="6" height="6" fill="#909868"/><rect x="84" y="42" width="6" height="6" fill="#5a8a62"/></svg>
<svg class="a" style="left:2730px;top:57px" width="96" height="102" viewBox="0 0 96 102" shape-rendering="crispEdges"><rect x="12" y="96" width="66" height="6" fill="#000" opacity="0.08"/><rect x="24" y="0" width="6" height="6" fill="#dde6f0"/><rect x="30" y="0" width="60" height="6" fill="#b0c8e0"/><rect x="90" y="0" width="6" height="6" fill="#dde6f0"/><rect x="24" y="6" width="6" height="6" fill="#b0c8e0"/><rect x="30" y="6" width="6" height="6" fill="#d8e4f0"/><rect x="36" y="6" width="48" height="6" fill="#e8eef8"/><rect x="84" y="6" width="6" height="6" fill="#d8e4f0"/><rect x="90" y="6" width="6" height="6" fill="#b0c8e0"/><rect x="12" y="12" width="6" height="6" fill="#dde6f0"/><rect x="18" y="12" width="6" height="6" fill="#b0c8e0"/><rect x="24" y="12" width="6" height="6" fill="#7aa4d0"/><rect x="30" y="12" width="48" height="6" fill="#b0c8e0"/><rect x="78" y="12" width="6" height="6" fill="#d8e4f0"/><rect x="84" y="12" width="6" height="6" fill="#e8eef8"/><rect x="90" y="12" width="6" height="6" fill="#b0c8e0"/><rect x="12" y="18" width="6" height="6" fill="#b0c8e0"/><rect x="18" y="18" width="6" height="6" fill="#d8e4f0"/><rect x="24" y="18" width="48" height="6" fill="#e8eef8"/><rect x="72" y="18" width="6" height="6" fill="#d8e4f0"/><rect x="78" y="18" width="6" height="6" fill="#b0c8e0"/><rect x="84" y="18" width="6" height="6" fill="#e8eef8"/><rect x="90" y="18" width="6" height="6" fill="#b0c8e0"/><rect x="0" y="24" width="6" height="6" fill="#c8d0f4"/><rect x="6" y="24" width="60" height="6" fill="#6a88e8"/><rect x="66" y="24" width="6" height="6" fill="#c8d0f4"/><rect x="72" y="24" width="6" height="6" fill="#e8eef8"/><rect x="78" y="24" width="6" height="6" fill="#b0c8e0"/><rect x="84" y="24" width="6" height="6" fill="#e8eef8"/><rect x="90" y="24" width="6" height="6" fill="#b0c8e0"/><rect x="0" y="30" width="6" height="6" fill="#6a88e8"/><rect x="6" y="30" width="6" height="6" fill="#b8c4f4"/><rect x="12" y="30" width="48" height="6" fill="#dce8f4"/><rect x="60" y="30" width="6" height="6" fill="#b8c4f4"/><rect x="66" y="30" width="6" height="6" fill="#6a88e8"/><rect x="72" y="30" width="6" height="6" fill="#e8eef8"/><rect x="78" y="30" width="6" height="6" fill="#b0c8e0"/><rect x="84" y="30" width="6" height="6" fill="#e8eef8"/><rect x="90" y="30" width="6" height="6" fill="#b0c8e0"/><rect x="0" y="36" width="6" height="6" fill="#6a88e8"/><rect x="6" y="36" width="6" height="6" fill="#dce8f4"/><rect x="12" y="36" width="6" height="6" fill="#c0d4ea"/><rect x="18" y="36" width="48" height="6" fill="#d0e0f0"/><rect x="66" y="36" width="6" height="6" fill="#6a88e8"/><rect x="72" y="36" width="6" height="6" fill="#e8eef8"/><rect x="78" y="36" width="6" height="6" fill="#b0c8e0"/><rect x="84" y="36" width="6" height="6" fill="#e8eef8"/><rect x="90" y="36" width="6" height="6" fill="#b0c8e0"/><rect x="0" y="42" width="6" height="6" fill="#4868d0"/><rect x="6" y="42" width="6" height="6" fill="#dce8f4"/><rect x="12" y="42" width="6" height="6" fill="#c0d4ea"/><rect x="18" y="42" width="48" height="6" fill="#d0e0f0"/><rect x="66" y="42" width="6" height="6" fill="#4868d0"/><rect x="72" y="42" width="6" height="6" fill="#e8eef8"/><rect x="78" y="42" width="6" height="6" fill="#b0c8e0"/><rect x="84" y="42" width="6" height="6" fill="#e8eef8"/><rect x="90" y="42" width="6" height="6" fill="#b0c8e0"/><rect x="0" y="48" width="6" height="6" fill="#4868d0"/><rect x="6" y="48" width="6" height="6" fill="#dce8f4"/><rect x="12" y="48" width="6" height="6" fill="#c0d4ea"/><rect x="18" y="48" width="48" height="6" fill="#d0e0f0"/><rect x="66" y="48" width="6" height="6" fill="#4868d0"/><rect x="72" y="48" width="6" height="6" fill="#e8eef8"/><rect x="78" y="48" width="6" height="6" fill="#b0c8e0"/><rect x="84" y="48" width="6" height="6" fill="#e8eef8"/><rect x="90" y="48" width="6" height="6" fill="#b0c8e0"/><rect x="0" y="54" width="6" height="6" fill="#3050c0"/><rect x="6" y="54" width="6" height="6" fill="#dce8f4"/><rect x="12" y="54" width="6" height="6" fill="#c0d4ea"/><rect x="18" y="54" width="12" height="6" fill="#d0e0f0"/><rect x="30" y="54" width="30" height="6" fill="#b4cce6"/><rect x="60" y="54" width="6" height="6" fill="#d0e0f0"/><rect x="66" y="54" width="6" height="6" fill="#3050c0"/><rect x="72" y="54" width="6" height="6" fill="#e8eef8"/><rect x="78" y="54" width="6" height="6" fill="#b0c8e0"/><rect x="84" y="54" width="6" height="6" fill="#e8eef8"/><rect x="90" y="54" width="6" height="6" fill="#b0c8e0"/><rect x="0" y="60" width="6" height="6" fill="#3050c0"/><rect x="6" y="60" width="6" height="6" fill="#dce8f4"/><rect x="12" y="60" width="6" height="6" fill="#c0d4ea"/><rect x="18" y="60" width="6" height="6" fill="#d0e0f0"/><rect x="24" y="60" width="36" height="6" fill="#b4cce6"/><rect x="60" y="60" width="6" height="6" fill="#d0e0f0"/><rect x="66" y="60" width="6" height="6" fill="#3050c0"/><rect x="72" y="60" width="6" height="6" fill="#e8eef8"/><rect x="78" y="60" width="6" height="6" fill="#b0c8e0"/><rect x="84" y="60" width="6" height="6" fill="#d8e4f0"/><rect x="90" y="60" width="6" height="6" fill="#b0c8e0"/><rect x="0" y="66" width="6" height="6" fill="#2444b0"/><rect x="6" y="66" width="6" height="6" fill="#dce8f4"/><rect x="12" y="66" width="6" height="6" fill="#c0d4ea"/><rect x="18" y="66" width="6" height="6" fill="#d0e0f0"/><rect x="24" y="66" width="6" height="6" fill="#b4cce6"/><rect x="30" y="66" width="30" height="6" fill="#9cbcde"/><rect x="60" y="66" width="6" height="6" fill="#d0e0f0"/><rect x="66" y="66" width="6" height="6" fill="#2444b0"/><rect x="72" y="66" width="6" height="6" fill="#d8e4f0"/><rect x="78" y="66" width="6" height="6" fill="#7aa4d0"/><rect x="84" y="66" width="6" height="6" fill="#5a8ac0"/><rect x="0" y="72" width="6" height="6" fill="#2444b0"/><rect x="6" y="72" width="6" height="6" fill="#dce8f4"/><rect x="12" y="72" width="6" height="6" fill="#c0d4ea"/><rect x="18" y="72" width="6" height="6" fill="#d0e0f0"/><rect x="24" y="72" width="36" height="6" fill="#b4cce6"/><rect x="60" y="72" width="6" height="6" fill="#d0e0f0"/><rect x="66" y="72" width="6" height="6" fill="#2444b0"/><rect x="72" y="72" width="6" height="6" fill="#d8e4f0"/><rect x="78" y="72" width="6" height="6" fill="#b0c8e0"/><rect x="0" y="78" width="6" height="6" fill="#2444b0"/><rect x="6" y="78" width="6" height="6" fill="#dce8f4"/><rect x="12" y="78" width="12" height="6" fill="#c0d4ea"/><rect x="24" y="78" width="36" height="6" fill="#90b0d6"/><rect x="60" y="78" width="6" height="6" fill="#c0d4ea"/><rect x="66" y="78" width="6" height="6" fill="#2444b0"/><rect x="72" y="78" width="6" height="6" fill="#5a8ac0"/><rect x="0" y="84" width="6" height="6" fill="#4060e4"/><rect x="6" y="84" width="6" height="6" fill="#b8c4f4"/><rect x="12" y="84" width="48" height="6" fill="#dce8f4"/><rect x="60" y="84" width="6" height="6" fill="#b8c4f4"/><rect x="66" y="84" width="6" height="6" fill="#4060e4"/><rect x="0" y="90" width="6" height="6" fill="#a8b0d8"/><rect x="6" y="90" width="60" height="6" fill="#4060e4"/><rect x="66" y="90" width="6" height="6" fill="#a8b0d8"/></svg>
<svg class="a" style="left:3330px;top:81px" width="96" height="78" viewBox="0 0 96 78" shape-rendering="crispEdges"><rect x="6" y="0" width="6" height="6" fill="#d0d0d0"/><rect x="12" y="0" width="30" height="6" fill="#b4b4b4"/><rect x="42" y="0" width="12" height="6" fill="#d0d0d0"/><rect x="54" y="0" width="30" height="6" fill="#b4b4b4"/><rect x="84" y="0" width="6" height="6" fill="#d0d0d0"/><rect x="0" y="6" width="6" height="6" fill="#d0d0d0"/><rect x="6" y="6" width="6" height="6" fill="#a0a0a0"/><rect x="12" y="6" width="6" height="6" fill="#d6d6d6"/><rect x="18" y="6" width="18" height="6" fill="#e6e6e6"/><rect x="36" y="6" width="6" height="6" fill="#d6d6d6"/><rect x="42" y="6" width="12" height="6" fill="#a0a0a0"/><rect x="54" y="6" width="6" height="6" fill="#d6d6d6"/><rect x="60" y="6" width="18" height="6" fill="#e6e6e6"/><rect x="78" y="6" width="6" height="6" fill="#d6d6d6"/><rect x="84" y="6" width="6" height="6" fill="#a0a0a0"/><rect x="90" y="6" width="6" height="6" fill="#d0d0d0"/><rect x="0" y="12" width="6" height="6" fill="#a0a0a0"/><rect x="6" y="12" width="6" height="6" fill="#d6d6d6"/><rect x="12" y="12" width="6" height="6" fill="#8c8c8c"/><rect x="18" y="12" width="12" height="6" fill="#727272"/><rect x="30" y="12" width="6" height="6" fill="#8c8c8c"/><rect x="36" y="12" width="24" height="6" fill="#a0a0a0"/><rect x="60" y="12" width="6" height="6" fill="#8c8c8c"/><rect x="66" y="12" width="12" height="6" fill="#727272"/><rect x="78" y="12" width="6" height="6" fill="#8c8c8c"/><rect x="84" y="12" width="6" height="6" fill="#d6d6d6"/><rect x="90" y="12" width="6" height="6" fill="#a0a0a0"/><rect x="0" y="18" width="6" height="6" fill="#a0a0a0"/><rect x="6" y="18" width="6" height="6" fill="#d6d6d6"/><rect x="12" y="18" width="6" height="6" fill="#8c8c8c"/><rect x="18" y="18" width="6" height="6" fill="#f4f4f4"/><rect x="24" y="18" width="6" height="6" fill="#727272"/><rect x="30" y="18" width="6" height="6" fill="#d6d6d6"/><rect x="36" y="18" width="24" height="6" fill="#e6e6e6"/><rect x="60" y="18" width="6" height="6" fill="#d8cc80"/><rect x="66" y="18" width="6" height="6" fill="#b0a030"/><rect x="72" y="18" width="6" height="6" fill="#d8cc80"/><rect x="78" y="18" width="6" height="6" fill="#8c8c8c"/><rect x="84" y="18" width="6" height="6" fill="#d6d6d6"/><rect x="90" y="18" width="6" height="6" fill="#a0a0a0"/><rect x="0" y="24" width="6" height="6" fill="#a0a0a0"/><rect x="6" y="24" width="6" height="6" fill="#c8c8d2"/><rect x="12" y="24" width="12" height="6" fill="#8c8c8c"/><rect x="24" y="24" width="36" height="6" fill="#727272"/><rect x="60" y="24" width="6" height="6" fill="#b0a030"/><rect x="66" y="24" width="6" height="6" fill="#f0e8a0"/><rect x="72" y="24" width="6" height="6" fill="#b0a030"/><rect x="78" y="24" width="6" height="6" fill="#a0a0a0"/><rect x="84" y="24" width="6" height="6" fill="#c8c8d2"/><rect x="90" y="24" width="6" height="6" fill="#a0a0a0"/><rect x="0" y="30" width="6" height="6" fill="#b0b0b0"/><rect x="6" y="30" width="6" height="6" fill="#727272"/><rect x="12" y="30" width="6" height="6" fill="#c8c8d2"/><rect x="18" y="30" width="18" height="6" fill="#d8d8e8"/><rect x="36" y="30" width="6" height="6" fill="#c8c8d2"/><rect x="42" y="30" width="12" height="6" fill="#727272"/><rect x="54" y="30" width="6" height="6" fill="#c8b870"/><rect x="60" y="30" width="6" height="6" fill="#e8d870"/><rect x="66" y="30" width="6" height="6" fill="#fff4b0"/><rect x="72" y="30" width="6" height="6" fill="#e8d870"/><rect x="78" y="30" width="6" height="6" fill="#c8b870"/><rect x="84" y="30" width="6" height="6" fill="#727272"/><rect x="90" y="30" width="6" height="6" fill="#b0b0b0"/><rect x="0" y="36" width="6" height="6" fill="#e8e8e8"/><rect x="6" y="36" width="6" height="6" fill="#a0a0a0"/><rect x="12" y="36" width="30" height="6" fill="#727272"/><rect x="42" y="36" width="12" height="6" fill="#b0b0b0"/><rect x="54" y="36" width="6" height="6" fill="#b0a030"/><rect x="60" y="36" width="6" height="6" fill="#f0e088"/><rect x="66" y="36" width="6" height="6" fill="#505050"/><rect x="72" y="36" width="6" height="6" fill="#f0e088"/><rect x="78" y="36" width="6" height="6" fill="#b0a030"/><rect x="84" y="36" width="6" height="6" fill="#a0a0a0"/><rect x="90" y="36" width="6" height="6" fill="#e8e8e8"/><rect x="6" y="42" width="42" height="6" fill="#dcdcdc"/><rect x="48" y="42" width="6" height="6" fill="#d8d0a0"/><rect x="54" y="42" width="6" height="6" fill="#d8c050"/><rect x="60" y="42" width="6" height="6" fill="#e8d870"/><rect x="66" y="42" width="6" height="6" fill="#101010"/><rect x="72" y="42" width="6" height="6" fill="#e8d870"/><rect x="78" y="42" width="6" height="6" fill="#d8c050"/><rect x="84" y="42" width="6" height="6" fill="#d8d0a0"/><rect x="48" y="48" width="6" height="6" fill="#d8c860"/><rect x="54" y="48" width="6" height="6" fill="#e0d060"/><rect x="60" y="48" width="6" height="6" fill="#d8d850"/><rect x="66" y="48" width="6" height="6" fill="#c0b880"/><rect x="72" y="48" width="6" height="6" fill="#d8d850"/><rect x="78" y="48" width="6" height="6" fill="#e0d060"/><rect x="84" y="48" width="6" height="6" fill="#d8c860"/><rect x="42" y="54" width="6" height="6" fill="#e8e0c0"/><rect x="48" y="54" width="6" height="6" fill="#d0c050"/><rect x="54" y="54" width="12" height="6" fill="#d8d840"/><rect x="66" y="54" width="6" height="6" fill="#101010"/><rect x="72" y="54" width="12" height="6" fill="#d8d840"/><rect x="84" y="54" width="6" height="6" fill="#d0c050"/><rect x="90" y="54" width="6" height="6" fill="#e8e0c0"/><rect x="42" y="60" width="6" height="6" fill="#d0c050"/><rect x="48" y="60" width="6" height="6" fill="#d0c060"/><rect x="54" y="60" width="12" height="6" fill="#e8e028"/><rect x="66" y="60" width="6" height="6" fill="#fff4b0"/><rect x="72" y="60" width="12" height="6" fill="#e8e028"/><rect x="84" y="60" width="6" height="6" fill="#d0c060"/><rect x="90" y="60" width="6" height="6" fill="#d0c050"/><rect x="42" y="66" width="6" height="6" fill="#c8b850"/><rect x="48" y="66" width="42" height="6" fill="#b8a030"/><rect x="90" y="66" width="6" height="6" fill="#c8b850"/></svg>
<svg class="a" style="left:3738px;top:57px" width="96" height="102" viewBox="0 0 96 102" shape-rendering="crispEdges"><rect x="84" y="90" width="18" height="6" fill="#000" opacity="0.08"/><rect x="18" y="0" width="6" height="6" fill="#d4dede"/><rect x="24" y="0" width="66" height="6" fill="#a8bcbc"/><rect x="90" y="0" width="6" height="6" fill="#d4dede"/><rect x="12" y="6" width="12" height="6" fill="#d4dede"/><rect x="24" y="6" width="60" height="6" fill="#fcfcfc"/><rect x="84" y="6" width="6" height="6" fill="#a8bcbc"/><rect x="90" y="6" width="6" height="6" fill="#d4dede"/><rect x="12" y="12" width="6" height="6" fill="#a8bcbc"/><rect x="18" y="12" width="6" height="6" fill="#e6f4f4"/><rect x="24" y="12" width="54" height="6" fill="#e8f0f0"/><rect x="78" y="12" width="6" height="6" fill="#a8bcbc"/><rect x="84" y="12" width="6" height="6" fill="#d4dede"/><rect x="12" y="18" width="6" height="6" fill="#a8bcbc"/><rect x="18" y="18" width="6" height="6" fill="#e6f4f4"/><rect x="24" y="18" width="54" height="6" fill="#e8f0f0"/><rect x="78" y="18" width="6" height="6" fill="#a8bcbc"/><rect x="12" y="24" width="6" height="6" fill="#a8bcbc"/><rect x="18" y="24" width="6" height="6" fill="#e6f4f4"/><rect x="24" y="24" width="54" height="6" fill="#d8e8e8"/><rect x="78" y="24" width="6" height="6" fill="#a8bcbc"/><rect x="12" y="30" width="6" height="6" fill="#a8bcbc"/><rect x="18" y="30" width="6" height="6" fill="#e6f4f4"/><rect x="24" y="30" width="54" height="6" fill="#d8e8e8"/><rect x="78" y="30" width="6" height="6" fill="#a8bcbc"/><rect x="12" y="36" width="6" height="6" fill="#a8bcbc"/><rect x="18" y="36" width="6" height="6" fill="#e6f4f4"/><rect x="24" y="36" width="54" height="6" fill="#d8e8e8"/><rect x="78" y="36" width="6" height="6" fill="#a8bcbc"/><rect x="12" y="42" width="6" height="6" fill="#a8bcbc"/><rect x="18" y="42" width="6" height="6" fill="#e6f4f4"/><rect x="24" y="42" width="6" height="6" fill="#d8e8e8"/><rect x="30" y="42" width="6" height="6" fill="#d4dede"/><rect x="36" y="42" width="6" height="6" fill="#7e7e7e"/><rect x="42" y="42" width="12" height="6" fill="#d8e8e8"/><rect x="54" y="42" width="6" height="6" fill="#7e7e7e"/><rect x="60" y="42" width="6" height="6" fill="#d4dede"/><rect x="66" y="42" width="6" height="6" fill="#d8e8e8"/><rect x="72" y="42" width="6" height="6" fill="#e6f4f4"/><rect x="78" y="42" width="6" height="6" fill="#a8bcbc"/><rect x="12" y="48" width="6" height="6" fill="#a8bcbc"/><rect x="18" y="48" width="6" height="6" fill="#e6f4f4"/><rect x="24" y="48" width="6" height="6" fill="#d4dede"/><rect x="30" y="48" width="6" height="6" fill="#7e7e7e"/><rect x="36" y="48" width="6" height="6" fill="#c0c8c8"/><rect x="42" y="48" width="12" height="6" fill="#d8e8e8"/><rect x="54" y="48" width="6" height="6" fill="#c0c8c8"/><rect x="60" y="48" width="6" height="6" fill="#7e7e7e"/><rect x="66" y="48" width="6" height="6" fill="#d4dede"/><rect x="72" y="48" width="6" height="6" fill="#e6f4f4"/><rect x="78" y="48" width="6" height="6" fill="#a8bcbc"/><rect x="12" y="54" width="6" height="6" fill="#a8bcbc"/><rect x="18" y="54" width="6" height="6" fill="#e6f4f4"/><rect x="24" y="54" width="6" height="6" fill="#a8a8a8"/><rect x="30" y="54" width="6" height="6" fill="#989898"/><rect x="36" y="54" width="24" height="6" fill="#d8e8e8"/><rect x="60" y="54" width="6" height="6" fill="#989898"/><rect x="66" y="54" width="6" height="6" fill="#a8a8a8"/><rect x="72" y="54" width="6" height="6" fill="#e6f4f4"/><rect x="78" y="54" width="6" height="6" fill="#a8bcbc"/><rect x="12" y="60" width="6" height="6" fill="#a8bcbc"/><rect x="18" y="60" width="6" height="6" fill="#e6f4f4"/><rect x="24" y="60" width="6" height="6" fill="#d4dede"/><rect x="30" y="60" width="6" height="6" fill="#606060"/><rect x="36" y="60" width="6" height="6" fill="#c0c8c8"/><rect x="42" y="60" width="12" height="6" fill="#d8e8e8"/><rect x="54" y="60" width="6" height="6" fill="#c0c8c8"/><rect x="60" y="60" width="6" height="6" fill="#606060"/><rect x="66" y="60" width="6" height="6" fill="#d4dede"/><rect x="72" y="60" width="6" height="6" fill="#e6f4f4"/><rect x="78" y="60" width="6" height="6" fill="#a8bcbc"/><rect x="12" y="66" width="6" height="6" fill="#a8bcbc"/><rect x="18" y="66" width="6" height="6" fill="#e6f4f4"/><rect x="24" y="66" width="6" height="6" fill="#d8e8e8"/><rect x="30" y="66" width="6" height="6" fill="#d4dede"/><rect x="36" y="66" width="6" height="6" fill="#585858"/><rect x="42" y="66" width="12" height="6" fill="#e0e0e0"/><rect x="54" y="66" width="6" height="6" fill="#585858"/><rect x="60" y="66" width="6" height="6" fill="#d4dede"/><rect x="66" y="66" width="6" height="6" fill="#d8e8e8"/><rect x="72" y="66" width="6" height="6" fill="#e6f4f4"/><rect x="78" y="66" width="6" height="6" fill="#a8bcbc"/><rect x="12" y="72" width="6" height="6" fill="#a8bcbc"/><rect x="18" y="72" width="6" height="6" fill="#e6f4f4"/><rect x="24" y="72" width="54" height="6" fill="#e8f0f0"/><rect x="78" y="72" width="6" height="6" fill="#a8bcbc"/><rect x="6" y="78" width="6" height="6" fill="#d4dede"/><rect x="12" y="78" width="6" height="6" fill="#889c9c"/><rect x="18" y="78" width="24" height="6" fill="#c8d8d8"/><rect x="42" y="78" width="24" height="6" fill="#dde8e8"/><rect x="66" y="78" width="12" height="6" fill="#f0f8f8"/><rect x="78" y="78" width="6" height="6" fill="#889c9c"/><rect x="0" y="84" width="6" height="6" fill="#c8cccc"/><rect x="6" y="84" width="6" height="6" fill="#889c9c"/><rect x="12" y="84" width="60" height="6" fill="#fcfcfc"/><rect x="72" y="84" width="6" height="6" fill="#a0b0b0"/><rect x="78" y="84" width="6" height="6" fill="#98a8a8"/><rect x="0" y="90" width="6" height="6" fill="#c8cccc"/><rect x="6" y="90" width="66" height="6" fill="#7e7e7e"/><rect x="72" y="90" width="6" height="6" fill="#a0a8a8"/></svg>
<div class="a" style="left:33px;top:177px;width:417px;height:1854px;background:#82878f"></div>
<div class="a" style="left:33px;top:180px;width:414px;height:1848px;background:#fff"></div>
<div class="a" style="left:33px;top:183px;width:411px;height:1842px;background:#000"></div>
<div class="a" style="left:450px;top:180px;width:6px;height:1851px;background:#efefef"></div>
<div class="a" style="left:456px;top:177px;width:3684px;height:1854px;background:#82878f"></div>
<div class="a" style="left:459px;top:180px;width:3681px;height:1848px;background:#fff"></div>
<div class="a" style="left:461px;top:183px;width:3679px;height:1740px;background:#000"></div>
<div class="a" style="left:461px;top:1925px;width:3679px;height:101px;background:#efefef"></div>
<div class="a" style="left:564px;top:1968px;width:3576px;height:15px;background:#888;border-radius:7px 0 0 7px"></div>
<div class="a" style="left:33px;top:2031px;width:4107px;height:6px;background:#efefef"></div>
<div class="a" style="left:461px;top:183px;width:3679px;height:1740px;overflow:hidden">
<div class="a" style="left:719px;top:1584px;width:2960px;height:65px;background:#000080"></div>
<div class="a" style="left:712px;top:0;width:4px;height:1740px;background:#0000ff"></div>
<div class="a" style="left:1541px;top:0;width:4px;height:1740px;background:#0000ff"></div>
<div class="m" style="left:11.5px;top:-1px;letter-spacing:-1.766px;--w:39.63px;color:#c0c0c0"><i class="z">0</i><i class="z">0</i><i class="z">0</i><i class="z">0</i><i class="z">0</i><i class="z">0</i><i class="z">0</i>14<i class="z">0</i><i class="z">0</i>253<i class="z">0</i><i class="u">B</i></div>
<div class="m" style="left:910.0px;top:-1px;letter-spacing:-1.796px;--w:39.6px;color:#c0c0c0">5<i class="u">F</i></div>
<div class="m" style="left:1572.5px;top:-1px;letter-spacing:-1.796px;--w:39.6px;color:#00ffff">pop</div><div class="m" style="left:1740.3px;top:-1px;letter-spacing:-1.796px;--w:39.6px;color:#ffff80">rdi</div>
<div class="m" style="left:11.5px;top:65px;letter-spacing:-1.766px;--w:39.63px;color:#c0c0c0"><i class="z">0</i><i class="z">0</i><i class="z">0</i><i class="z">0</i><i class="z">0</i><i class="z">0</i><i class="z">0</i>14<i class="z">0</i><i class="z">0</i>253<i class="z">0</i><i class="u">C</i></div>
<div class="m" style="left:910.0px;top:65px;letter-spacing:-1.796px;--w:39.6px;color:#c0c0c0">5<i class="u">E</i></div>
<div class="m" style="left:1572.5px;top:65px;letter-spacing:-1.796px;--w:39.6px;color:#00ffff">pop</div><div class="m" style="left:1740.3px;top:65px;letter-spacing:-1.796px;--w:39.6px;color:#ffff80">rsi</div>
<div class="m" style="left:11.5px;top:131px;letter-spacing:-1.766px;--w:39.63px;color:#c0c0c0"><i class="z">0</i><i class="z">0</i><i class="z">0</i><i class="z">0</i><i class="z">0</i><i class="z">0</i><i class="z">0</i>14<i class="z">0</i><i class="z">0</i>253<i class="z">0</i><i class="u">D</i></div>
<div class="m" style="left:910.0px;top:131px;letter-spacing:-1.796px;--w:39.6px;color:#c0c0c0">41</div><div class="m" style="left:993.9px;top:131px;letter-spacing:-1.796px;--w:39.6px;color:#c0c0c0">:</div><div class="m" style="left:1035.85px;top:131px;letter-spacing:-1.796px;--w:39.6px;color:#c0c0c0">5<i class="u">E</i></div>
<div class="m" style="left:1572.5px;top:131px;letter-spacing:-1.796px;--w:39.6px;color:#00ffff">pop</div><div class="m" style="left:1740.3px;top:131px;letter-spacing:-1.796px;--w:39.6px;color:#ffff80">r14</div>
<div class="m" style="left:11.5px;top:197px;letter-spacing:-1.766px;--w:39.63px;color:#c0c0c0"><i class="z">0</i><i class="z">0</i><i class="z">0</i><i class="z">0</i><i class="z">0</i><i class="z">0</i><i class="z">0</i>14<i class="z">0</i><i class="z">0</i>253<i class="z">0</i><i class="u">F</i></div>
<div class="m" style="left:910.0px;top:197px;letter-spacing:-1.796px;--w:39.6px;color:#c0c0c0"><i class="u">C</i>3</div>
<div class="a" style="left:1572.0px;top:198px;width:126px;height:65px;background:#00ffff"></div>
<div class="m" style="left:1572.5px;top:197px;letter-spacing:-1.796px;--w:39.6px;color:#000;-webkit-text-stroke-color:#00ffff">ret</div>
<div class="m" style="left:11.5px;top:263px;letter-spacing:-1.766px;--w:39.63px;color:#c0c0c0"><i class="z">0</i><i class="z">0</i><i class="z">0</i><i class="z">0</i><i class="z">0</i><i class="z">0</i><i class="z">0</i>14<i class="z">0</i><i class="z">0</i>2531<i class="z">0</i></div>
<div class="m" style="left:910.0px;top:263px;letter-spacing:-1.796px;--w:39.6px;color:#c0c0c0">4<i class="u">D</i></div><div class="m" style="left:993.9px;top:263px;letter-spacing:-1.796px;--w:39.6px;color:#c0c0c0">:</div><div class="m" style="left:1035.85px;top:263px;letter-spacing:-1.796px;--w:39.6px;color:#c0c0c0">89</div><div class="m" style="left:1119.75px;top:263px;letter-spacing:-1.796px;--w:39.6px;color:#c0c0c0"><i class="u">C</i>1</div>
<div class="m" style="left:1572.5px;top:263px;letter-spacing:-1.796px;--w:39.6px;color:#00ff00">mov</div><div class="m" style="left:1740.3px;top:263px;letter-spacing:-1.796px;--w:39.6px;color:#ffff80">r9</div><div class="m" style="left:1824.2px;top:263px;letter-spacing:-1.796px;--w:39.6px;color:#808080">,</div><div class="m" style="left:1866.15px;top:263px;letter-spacing:-1.796px;--w:39.6px;color:#ffff80">r8</div>
<div class="m" style="left:11.5px;top:329px;letter-spacing:-1.766px;--w:39.63px;color:#c0c0c0"><i class="z">0</i><i class="z">0</i><i class="z">0</i><i class="z">0</i><i class="z">0</i><i class="z">0</i><i class="z">0</i>14<i class="z">0</i><i class="z">0</i>25313</div>
<div class="m" style="left:910.0px;top:329px;letter-spacing:-1.796px;--w:39.6px;color:#c0c0c0">49</div><div class="m" style="left:993.9px;top:329px;letter-spacing:-1.796px;--w:39.6px;color:#c0c0c0">:</div><div class="m" style="left:1035.85px;top:329px;letter-spacing:-1.796px;--w:39.6px;color:#c0c0c0">89</div><div class="m" style="left:1119.75px;top:329px;letter-spacing:-1.796px;--w:39.6px;color:#c0c0c0"><i class="u">C</i><i class="u">A</i></div>
<div class="m" style="left:1572.5px;top:329px;letter-spacing:-1.796px;--w:39.6px;color:#00ff00">mov</div><div class="m" style="left:1740.3px;top:329px;letter-spacing:-1.796px;--w:39.6px;color:#ffff80">r1<i class="z">0</i></div><div class="m" style="left:1866.15px;top:329px;letter-spacing:-1.796px;--w:39.6px;color:#808080">,</div><div class="m" style="left:1908.1px;top:329px;letter-spacing:-1.796px;--w:39.6px;color:#ffff80">rcx</div>
<div class="m" style="left:11.5px;top:395px;letter-spacing:-1.766px;--w:39.63px;color:#c0c0c0"><i class="z">0</i><i class="z">0</i><i class="z">0</i><i class="z">0</i><i class="z">0</i><i class="z">0</i><i class="z">0</i>14<i class="z">0</i><i class="z">0</i>25316</div>
<div class="m" style="left:910.0px;top:395px;letter-spacing:-1.796px;--w:39.6px;color:#c0c0c0">49</div><div class="m" style="left:993.9px;top:395px;letter-spacing:-1.796px;--w:39.6px;color:#c0c0c0">:</div><div class="m" style="left:1035.85px;top:395px;letter-spacing:-1.796px;--w:39.6px;color:#c0c0c0">83</div><div class="m" style="left:1119.75px;top:395px;letter-spacing:-1.796px;--w:39.6px;color:#c0c0c0"><i class="u">F</i>8</div><div class="m" style="left:1245.6px;top:395px;letter-spacing:-1.796px;--w:39.6px;color:#c0c0c0"><i class="z">0</i>5</div>
<div class="m" style="left:1572.5px;top:395px;letter-spacing:-1.796px;--w:39.6px;color:#00ff00">cmp</div><div class="m" style="left:1740.3px;top:395px;letter-spacing:-1.796px;--w:39.6px;color:#ffff80">r8</div><div class="m" style="left:1824.2px;top:395px;letter-spacing:-1.796px;--w:39.6px;color:#808080">,</div><div class="m" style="left:1866.15px;top:395px;letter-spacing:-1.796px;--w:39.6px;color:#ff9cff">5</div>
<div class="m" style="left:11.5px;top:461px;letter-spacing:-1.766px;--w:39.63px;color:#c0c0c0"><i class="z">0</i><i class="z">0</i><i class="z">0</i><i class="z">0</i><i class="z">0</i><i class="z">0</i><i class="z">0</i>14<i class="z">0</i><i class="z">0</i>2531<i class="u">A</i></div>
<div class="m" style="left:910.0px;top:461px;letter-spacing:-1.796px;--w:39.6px;color:#c0c0c0">73</div><div class="m" style="left:1035.85px;top:461px;letter-spacing:-1.796px;--w:39.6px;color:#c0c0c0"><i class="u">B</i><i class="u">E</i></div>
<div class="m" style="left:1572.5px;top:461px;letter-spacing:-1.796px;--w:39.6px;color:#ffff00">jae</div><div class="m" style="left:1740.3px;top:461px;letter-spacing:-1.796px;--w:39.6px;color:#a8ffff">1.14<i class="z">0</i><i class="z">0</i>252<i class="u">D</i><i class="u">A</i></div>
<svg class="a" style="left:819px;top:481px" width="32" height="22" viewBox="0 0 32 22"><path d="M2 19 L16 5 L30 19" stroke="#ff0000" stroke-width="5" fill="none"/></svg>
<div class="m" style="left:11.5px;top:527px;letter-spacing:-1.766px;--w:39.63px;color:#c0c0c0"><i class="z">0</i><i class="z">0</i><i class="z">0</i><i class="z">0</i><i class="z">0</i><i class="z">0</i><i class="z">0</i>14<i class="z">0</i><i class="z">0</i>2531<i class="u">C</i></div>
<div class="m" style="left:910.0px;top:527px;letter-spacing:-1.796px;--w:39.6px;color:#c0c0c0">31</div><div class="m" style="left:993.9px;top:527px;letter-spacing:-1.796px;--w:39.6px;color:#c0c0c0"><i class="u">D</i>2</div>
<div class="m" style="left:1572.5px;top:527px;letter-spacing:-1.796px;--w:39.6px;color:#00ff00">xor</div><div class="m" style="left:1740.3px;top:527px;letter-spacing:-1.796px;--w:39.6px;color:#ffff80">edx</div><div class="m" style="left:1866.15px;top:527px;letter-spacing:-1.796px;--w:39.6px;color:#808080">,</div><div class="m" style="left:1908.1px;top:527px;letter-spacing:-1.796px;--w:39.6px;color:#ffff80">edx</div>
<div class="m" style="left:11.5px;top:593px;letter-spacing:-1.766px;--w:39.63px;color:#c0c0c0"><i class="z">0</i><i class="z">0</i><i class="z">0</i><i class="z">0</i><i class="z">0</i><i class="z">0</i><i class="z">0</i>14<i class="z">0</i><i class="z">0</i>2531<i class="u">E</i></div>
<div class="m" style="left:910.0px;top:593px;letter-spacing:-1.796px;--w:39.6px;color:#c0c0c0">31</div><div class="m" style="left:993.9px;top:593px;letter-spacing:-1.796px;--w:39.6px;color:#c0c0c0"><i class="u">C</i><i class="z">0</i></div>
<div class="m" style="left:1572.5px;top:593px;letter-spacing:-1.796px;--w:39.6px;color:#00ff00">xor</div><div class="m" style="left:1740.3px;top:593px;letter-spacing:-1.796px;--w:39.6px;color:#ffff80">eax</div><div class="m" style="left:1866.15px;top:593px;letter-spacing:-1.796px;--w:39.6px;color:#808080">,</div><div class="m" style="left:1908.1px;top:593px;letter-spacing:-1.796px;--w:39.6px;color:#ffff80">eax</div>
<div class="m" style="left:11.5px;top:659px;letter-spacing:-1.766px;--w:39.63px;color:#c0c0c0"><i class="z">0</i><i class="z">0</i><i class="z">0</i><i class="z">0</i><i class="z">0</i><i class="z">0</i><i class="z">0</i>14<i class="z">0</i><i class="z">0</i>2532<i class="z">0</i></div>
<div class="m" style="left:910.0px;top:659px;letter-spacing:-1.796px;--w:39.6px;color:#c0c0c0">49</div><div class="m" style="left:993.9px;top:659px;letter-spacing:-1.796px;--w:39.6px;color:#c0c0c0">:</div><div class="m" style="left:1035.85px;top:659px;letter-spacing:-1.796px;--w:39.6px;color:#c0c0c0">39</div><div class="m" style="left:1119.75px;top:659px;letter-spacing:-1.796px;--w:39.6px;color:#c0c0c0"><i class="u">D</i>1</div>
<div class="m" style="left:1572.5px;top:659px;letter-spacing:-1.796px;--w:39.6px;color:#00ff00">cmp</div><div class="m" style="left:1740.3px;top:659px;letter-spacing:-1.796px;--w:39.6px;color:#ffff80">r9</div><div class="m" style="left:1824.2px;top:659px;letter-spacing:-1.796px;--w:39.6px;color:#808080">,</div><div class="m" style="left:1866.15px;top:659px;letter-spacing:-1.796px;--w:39.6px;color:#ffff80">rdx</div>
<div class="m" style="left:11.5px;top:725px;letter-spacing:-1.766px;--w:39.63px;color:#c0c0c0"><i class="z">0</i><i class="z">0</i><i class="z">0</i><i class="z">0</i><i class="z">0</i><i class="z">0</i><i class="z">0</i>14<i class="z">0</i><i class="z">0</i>25323</div>
<div class="m" style="left:910.0px;top:725px;letter-spacing:-1.796px;--w:39.6px;color:#c0c0c0">74</div><div class="m" style="left:1035.85px;top:725px;letter-spacing:-1.796px;--w:39.6px;color:#c0c0c0">1<i class="u">A</i></div>
<div class="m" style="left:1572.5px;top:725px;letter-spacing:-1.796px;--w:39.6px;color:#ffff00">je</div><div class="m" style="left:1698.35px;top:725px;letter-spacing:-1.796px;--w:39.6px;color:#a8ffff">1.14<i class="z">0</i><i class="z">0</i>2533<i class="u">F</i></div>
<svg class="a" style="left:819px;top:745px" width="32" height="22" viewBox="0 0 32 22"><path d="M2 5 L16 19 L30 5" stroke="#ff0000" stroke-width="5" fill="none"/></svg>
<div class="m" style="left:11.5px;top:791px;letter-spacing:-1.766px;--w:39.63px;color:#c0c0c0"><i class="z">0</i><i class="z">0</i><i class="z">0</i><i class="z">0</i><i class="z">0</i><i class="z">0</i><i class="z">0</i>14<i class="z">0</i><i class="z">0</i>25325</div>
<div class="m" style="left:910.0px;top:791px;letter-spacing:-1.796px;--w:39.6px;color:#c0c0c0">45</div><div class="m" style="left:993.9px;top:791px;letter-spacing:-1.796px;--w:39.6px;color:#c0c0c0">:</div><div class="m" style="left:1035.85px;top:791px;letter-spacing:-1.796px;--w:39.6px;color:#c0c0c0"><i class="z">0</i><i class="u">F</i></div><div class="m" style="left:1119.75px;top:791px;letter-spacing:-1.796px;--w:39.6px;color:#c0c0c0"><i class="u">B</i>6</div><div class="m" style="left:1203.65px;top:791px;letter-spacing:-1.796px;--w:39.6px;color:#c0c0c0">1<i class="u">C</i></div><div class="m" style="left:1287.55px;top:791px;letter-spacing:-1.796px;--w:39.6px;color:#c0c0c0">12</div>
<div class="m" style="left:1572.5px;top:791px;letter-spacing:-1.796px;--w:39.6px;color:#00ff00">movzx</div><div class="m" style="left:1824.2px;top:791px;letter-spacing:-1.796px;--w:39.6px;color:#ffff80">r11d</div><div class="m" style="left:1992.0px;top:791px;letter-spacing:-1.796px;--w:39.6px;color:#808080">,</div><div class="m" style="left:2033.95px;top:791px;letter-spacing:-1.796px;--w:39.6px;color:#00ffff">byte ptr</div><div class="m" style="left:2411.5px;top:791px;letter-spacing:-1.796px;--w:39.6px;color:#00ffff">ds</div><div class="m" style="left:2495.4px;top:791px;letter-spacing:-1.796px;--w:39.6px;color:#808080">:</div><div class="m" style="left:2537.35px;top:791px;letter-spacing:-1.796px;--w:39.6px;color:#ffffff">[</div><div class="m" style="left:2579.3px;top:791px;letter-spacing:-1.796px;--w:39.6px;color:#ffff00">r1<i class="z">0</i></div><div class="m" style="left:2705.15px;top:791px;letter-spacing:-1.796px;--w:39.6px;color:#ffffff">+</div><div class="m" style="left:2747.1px;top:791px;letter-spacing:-1.796px;--w:39.6px;color:#ffffe0">rdx</div><div class="m" style="left:2872.95px;top:791px;letter-spacing:-1.796px;--w:39.6px;color:#ffffff">]</div>
<div class="m" style="left:11.5px;top:857px;letter-spacing:-1.766px;--w:39.63px;color:#c0c0c0"><i class="z">0</i><i class="z">0</i><i class="z">0</i><i class="z">0</i><i class="z">0</i><i class="z">0</i><i class="z">0</i>14<i class="z">0</i><i class="z">0</i>2532<i class="u">A</i></div>
<div class="m" style="left:910.0px;top:857px;letter-spacing:-1.796px;--w:39.6px;color:#c0c0c0">41</div><div class="m" style="left:993.9px;top:857px;letter-spacing:-1.796px;--w:39.6px;color:#c0c0c0">:</div><div class="m" style="left:1035.85px;top:857px;letter-spacing:-1.796px;--w:39.6px;color:#c0c0c0">83</div><div class="m" style="left:1119.75px;top:857px;letter-spacing:-1.796px;--w:39.6px;color:#c0c0c0"><i class="u">C</i>3</div><div class="m" style="left:1245.6px;top:857px;letter-spacing:-1.796px;--w:39.6px;color:#c0c0c0"><i class="u">D</i><i class="z">0</i></div>
<div class="m" style="left:1572.5px;top:857px;letter-spacing:-1.796px;--w:39.6px;color:#00ff00">add</div><div class="m" style="left:1740.3px;top:857px;letter-spacing:-1.796px;--w:39.6px;color:#ffff80">r11d</div><div class="m" style="left:1908.1px;top:857px;letter-spacing:-1.796px;--w:39.6px;color:#808080">,</div><div class="m" style="left:1950.05px;top:857px;letter-spacing:-1.796px;--w:39.6px;color:#ff9cff"><i class="u">F</i><i class="u">F</i><i class="u">F</i><i class="u">F</i><i class="u">F</i><i class="u">F</i><i class="u">D</i><i class="z">0</i></div>
<div class="m" style="left:11.5px;top:923px;letter-spacing:-1.766px;--w:39.63px;color:#c0c0c0"><i class="z">0</i><i class="z">0</i><i class="z">0</i><i class="z">0</i><i class="z">0</i><i class="z">0</i><i class="z">0</i>14<i class="z">0</i><i class="z">0</i>2532<i class="u">E</i></div>
<div class="m" style="left:910.0px;top:923px;letter-spacing:-1.796px;--w:39.6px;color:#c0c0c0">41</div><div class="m" style="left:993.9px;top:923px;letter-spacing:-1.796px;--w:39.6px;color:#c0c0c0">:</div><div class="m" style="left:1035.85px;top:923px;letter-spacing:-1.796px;--w:39.6px;color:#c0c0c0">83</div><div class="m" style="left:1119.75px;top:923px;letter-spacing:-1.796px;--w:39.6px;color:#c0c0c0"><i class="u">F</i><i class="u">B</i></div><div class="m" style="left:1245.6px;top:923px;letter-spacing:-1.796px;--w:39.6px;color:#c0c0c0"><i class="z">0</i>9</div>
<div class="m" style="left:1572.5px;top:923px;letter-spacing:-1.796px;--w:39.6px;color:#00ff00">cmp</div><div class="m" style="left:1740.3px;top:923px;letter-spacing:-1.796px;--w:39.6px;color:#ffff80">r11d</div><div class="m" style="left:1908.1px;top:923px;letter-spacing:-1.796px;--w:39.6px;color:#808080">,</div><div class="m" style="left:1950.05px;top:923px;letter-spacing:-1.796px;--w:39.6px;color:#ff9cff">9</div>
<div class="m" style="left:11.5px;top:989px;letter-spacing:-1.766px;--w:39.63px;color:#c0c0c0"><i class="z">0</i><i class="z">0</i><i class="z">0</i><i class="z">0</i><i class="z">0</i><i class="z">0</i><i class="z">0</i>14<i class="z">0</i><i class="z">0</i>25332</div>
<div class="m" style="left:910.0px;top:989px;letter-spacing:-1.796px;--w:39.6px;color:#c0c0c0">77</div><div class="m" style="left:1035.85px;top:989px;letter-spacing:-1.796px;--w:39.6px;color:#c0c0c0"><i class="u">C</i><i class="u">E</i></div>
<div class="m" style="left:1572.5px;top:989px;letter-spacing:-1.796px;--w:39.6px;color:#ffff00">ja</div><div class="m" style="left:1698.35px;top:989px;letter-spacing:-1.796px;--w:39.6px;color:#a8ffff">1.14<i class="z">0</i><i class="z">0</i>253<i class="z">0</i>2</div>
<svg class="a" style="left:819px;top:1009px" width="32" height="22" viewBox="0 0 32 22"><path d="M2 19 L16 5 L30 19" stroke="#ff0000" stroke-width="5" fill="none"/></svg>
<div class="m" style="left:11.5px;top:1055px;letter-spacing:-1.766px;--w:39.63px;color:#c0c0c0"><i class="z">0</i><i class="z">0</i><i class="z">0</i><i class="z">0</i><i class="z">0</i><i class="z">0</i><i class="z">0</i>14<i class="z">0</i><i class="z">0</i>25334</div>
<div class="m" style="left:910.0px;top:1055px;letter-spacing:-1.796px;--w:39.6px;color:#c0c0c0">6<i class="u">B</i></div><div class="m" style="left:993.9px;top:1055px;letter-spacing:-1.796px;--w:39.6px;color:#c0c0c0"><i class="u">C</i><i class="z">0</i></div><div class="m" style="left:1119.75px;top:1055px;letter-spacing:-1.796px;--w:39.6px;color:#c0c0c0"><i class="z">0</i><i class="u">A</i></div>
<div class="m" style="left:1572.5px;top:1055px;letter-spacing:-1.796px;--w:39.6px;color:#00ff00">imul</div><div class="m" style="left:1782.25px;top:1055px;letter-spacing:-1.796px;--w:39.6px;color:#ffff80">eax</div><div class="m" style="left:1908.1px;top:1055px;letter-spacing:-1.796px;--w:39.6px;color:#808080">,</div><div class="m" style="left:1950.05px;top:1055px;letter-spacing:-1.796px;--w:39.6px;color:#ffff80">eax</div><div class="m" style="left:2075.9px;top:1055px;letter-spacing:-1.796px;--w:39.6px;color:#808080">,</div><div class="m" style="left:2117.85px;top:1055px;letter-spacing:-1.796px;--w:39.6px;color:#ff9cff"><i class="u">A</i></div>
<div class="m" style="left:11.5px;top:1121px;letter-spacing:-1.766px;--w:39.63px;color:#c0c0c0"><i class="z">0</i><i class="z">0</i><i class="z">0</i><i class="z">0</i><i class="z">0</i><i class="z">0</i><i class="z">0</i>14<i class="z">0</i><i class="z">0</i>25337</div>
<div class="m" style="left:910.0px;top:1121px;letter-spacing:-1.796px;--w:39.6px;color:#c0c0c0">44</div><div class="m" style="left:993.9px;top:1121px;letter-spacing:-1.796px;--w:39.6px;color:#c0c0c0">:</div><div class="m" style="left:1035.85px;top:1121px;letter-spacing:-1.796px;--w:39.6px;color:#c0c0c0"><i class="z">0</i>1</div><div class="m" style="left:1119.75px;top:1121px;letter-spacing:-1.796px;--w:39.6px;color:#c0c0c0"><i class="u">D</i>8</div>
<div class="m" style="left:1572.5px;top:1121px;letter-spacing:-1.796px;--w:39.6px;color:#00ff00">add</div><div class="m" style="left:1740.3px;top:1121px;letter-spacing:-1.796px;--w:39.6px;color:#ffff80">eax</div><div class="m" style="left:1866.15px;top:1121px;letter-spacing:-1.796px;--w:39.6px;color:#808080">,</div><div class="m" style="left:1908.1px;top:1121px;letter-spacing:-1.796px;--w:39.6px;color:#ffff80">r11d</div>
<div class="m" style="left:11.5px;top:1187px;letter-spacing:-1.766px;--w:39.63px;color:#c0c0c0"><i class="z">0</i><i class="z">0</i><i class="z">0</i><i class="z">0</i><i class="z">0</i><i class="z">0</i><i class="z">0</i>14<i class="z">0</i><i class="z">0</i>2533<i class="u">A</i></div>
<div class="m" style="left:910.0px;top:1187px;letter-spacing:-1.796px;--w:39.6px;color:#c0c0c0">48</div><div class="m" style="left:993.9px;top:1187px;letter-spacing:-1.796px;--w:39.6px;color:#c0c0c0">:</div><div class="m" style="left:1035.85px;top:1187px;letter-spacing:-1.796px;--w:39.6px;color:#c0c0c0"><i class="u">F</i><i class="u">F</i></div><div class="m" style="left:1119.75px;top:1187px;letter-spacing:-1.796px;--w:39.6px;color:#c0c0c0"><i class="u">C</i>2</div>
<div class="m" style="left:1572.5px;top:1187px;letter-spacing:-1.796px;--w:39.6px;color:#00ff00">inc</div><div class="m" style="left:1740.3px;top:1187px;letter-spacing:-1.796px;--w:39.6px;color:#ffff80">rdx</div>
<div class="m" style="left:11.5px;top:1253px;letter-spacing:-1.766px;--w:39.63px;color:#c0c0c0"><i class="z">0</i><i class="z">0</i><i class="z">0</i><i class="z">0</i><i class="z">0</i><i class="z">0</i><i class="z">0</i>14<i class="z">0</i><i class="z">0</i>2533<i class="u">D</i></div>
<div class="m" style="left:910.0px;top:1253px;letter-spacing:-1.796px;--w:39.6px;color:#c0c0c0"><i class="u">E</i><i class="u">B</i></div><div class="m" style="left:1035.85px;top:1253px;letter-spacing:-1.796px;--w:39.6px;color:#c0c0c0"><i class="u">E</i>1</div>
<div class="m" style="left:1572.5px;top:1253px;letter-spacing:-1.796px;--w:39.6px;color:#ffa500">jmp</div><div class="m" style="left:1740.3px;top:1253px;letter-spacing:-1.796px;--w:39.6px;color:#a8ffff">1.14<i class="z">0</i><i class="z">0</i>2532<i class="z">0</i></div>
<svg class="a" style="left:819px;top:1273px" width="32" height="22" viewBox="0 0 32 22"><path d="M2 19 L16 5 L30 19" stroke="#ff0000" stroke-width="5" fill="none"/></svg>
<div class="m" style="left:11.5px;top:1319px;letter-spacing:-1.766px;--w:39.63px;color:#c0c0c0"><i class="z">0</i><i class="z">0</i><i class="z">0</i><i class="z">0</i><i class="z">0</i><i class="z">0</i><i class="z">0</i>14<i class="z">0</i><i class="z">0</i>2533<i class="u">F</i></div>
<div class="m" style="left:910.0px;top:1319px;letter-spacing:-1.796px;--w:39.6px;color:#c0c0c0">48</div><div class="m" style="left:993.9px;top:1319px;letter-spacing:-1.796px;--w:39.6px;color:#c0c0c0">:</div><div class="m" style="left:1035.85px;top:1319px;letter-spacing:-1.796px;--w:39.6px;color:#c0c0c0">89</div><div class="m" style="left:1119.75px;top:1319px;letter-spacing:-1.796px;--w:39.6px;color:#c0c0c0"><i class="z">0</i><i class="u">E</i></div>
<div class="m" style="left:1572.5px;top:1319px;letter-spacing:-1.796px;--w:39.6px;color:#00ff00">mov</div><div class="m" style="left:1740.3px;top:1319px;letter-spacing:-1.796px;--w:39.6px;color:#00ffff">qword ptr</div><div class="m" style="left:2159.8px;top:1319px;letter-spacing:-1.796px;--w:39.6px;color:#00ffff">ds</div><div class="m" style="left:2243.7px;top:1319px;letter-spacing:-1.796px;--w:39.6px;color:#808080">:</div><div class="m" style="left:2285.65px;top:1319px;letter-spacing:-1.796px;--w:39.6px;color:#ffffff">[</div><div class="m" style="left:2327.6px;top:1319px;letter-spacing:-1.796px;--w:39.6px;color:#ffff00">rsi</div><div class="m" style="left:2453.45px;top:1319px;letter-spacing:-1.796px;--w:39.6px;color:#ffffff">]</div><div class="m" style="left:2495.4px;top:1319px;letter-spacing:-1.796px;--w:39.6px;color:#808080">,</div><div class="m" style="left:2537.35px;top:1319px;letter-spacing:-1.796px;--w:39.6px;color:#ffff80">rcx</div>
<div class="m" style="left:11.5px;top:1385px;letter-spacing:-1.766px;--w:39.63px;color:#c0c0c0"><i class="z">0</i><i class="z">0</i><i class="z">0</i><i class="z">0</i><i class="z">0</i><i class="z">0</i><i class="z">0</i>14<i class="z">0</i><i class="z">0</i>25342</div>
<div class="m" style="left:910.0px;top:1385px;letter-spacing:-1.796px;--w:39.6px;color:#c0c0c0">4<i class="u">C</i></div><div class="m" style="left:993.9px;top:1385px;letter-spacing:-1.796px;--w:39.6px;color:#c0c0c0">:</div><div class="m" style="left:1035.85px;top:1385px;letter-spacing:-1.796px;--w:39.6px;color:#c0c0c0">89</div><div class="m" style="left:1119.75px;top:1385px;letter-spacing:-1.796px;--w:39.6px;color:#c0c0c0">46</div><div class="m" style="left:1245.6px;top:1385px;letter-spacing:-1.796px;--w:39.6px;color:#c0c0c0"><i class="z">0</i>8</div>
<div class="m" style="left:1572.5px;top:1385px;letter-spacing:-1.796px;--w:39.6px;color:#00ff00">mov</div><div class="m" style="left:1740.3px;top:1385px;letter-spacing:-1.796px;--w:39.6px;color:#00ffff">qword ptr</div><div class="m" style="left:2159.8px;top:1385px;letter-spacing:-1.796px;--w:39.6px;color:#00ffff">ds</div><div class="m" style="left:2243.7px;top:1385px;letter-spacing:-1.796px;--w:39.6px;color:#808080">:</div><div class="m" style="left:2285.65px;top:1385px;letter-spacing:-1.796px;--w:39.6px;color:#ffffff">[</div><div class="m" style="left:2327.6px;top:1385px;letter-spacing:-1.796px;--w:39.6px;color:#ffff00">rsi</div><div class="m" style="left:2453.45px;top:1385px;letter-spacing:-1.796px;--w:39.6px;color:#ffffff">+</div><div class="m" style="left:2495.4px;top:1385px;letter-spacing:-1.796px;--w:39.6px;color:#ff9cff">8</div><div class="m" style="left:2537.35px;top:1385px;letter-spacing:-1.796px;--w:39.6px;color:#ffffff">]</div><div class="m" style="left:2579.3px;top:1385px;letter-spacing:-1.796px;--w:39.6px;color:#808080">,</div><div class="m" style="left:2621.25px;top:1385px;letter-spacing:-1.796px;--w:39.6px;color:#ffff80">r8</div>
<div class="m" style="left:11.5px;top:1451px;letter-spacing:-1.766px;--w:39.63px;color:#c0c0c0"><i class="z">0</i><i class="z">0</i><i class="z">0</i><i class="z">0</i><i class="z">0</i><i class="z">0</i><i class="z">0</i>14<i class="z">0</i><i class="z">0</i>25346</div>
<div class="m" style="left:910.0px;top:1451px;letter-spacing:-1.796px;--w:39.6px;color:#c0c0c0">66</div><div class="m" style="left:993.9px;top:1451px;letter-spacing:-1.796px;--w:39.6px;color:#c0c0c0">:</div><div class="m" style="left:1035.85px;top:1451px;letter-spacing:-1.796px;--w:39.6px;color:#c0c0c0">89</div><div class="m" style="left:1119.75px;top:1451px;letter-spacing:-1.796px;--w:39.6px;color:#c0c0c0">46</div><div class="m" style="left:1245.6px;top:1451px;letter-spacing:-1.796px;--w:39.6px;color:#c0c0c0">1<i class="z">0</i></div>
<div class="m" style="left:1572.5px;top:1451px;letter-spacing:-1.796px;--w:39.6px;color:#00ff00">mov</div><div class="m" style="left:1740.3px;top:1451px;letter-spacing:-1.796px;--w:39.6px;color:#00ffff">word ptr</div><div class="m" style="left:2117.85px;top:1451px;letter-spacing:-1.796px;--w:39.6px;color:#00ffff">ds</div><div class="m" style="left:2201.75px;top:1451px;letter-spacing:-1.796px;--w:39.6px;color:#808080">:</div><div class="m" style="left:2243.7px;top:1451px;letter-spacing:-1.796px;--w:39.6px;color:#ffffff">[</div><div class="m" style="left:2285.65px;top:1451px;letter-spacing:-1.796px;--w:39.6px;color:#ffff00">rsi</div><div class="m" style="left:2411.5px;top:1451px;letter-spacing:-1.796px;--w:39.6px;color:#ffffff">+</div><div class="m" style="left:2453.45px;top:1451px;letter-spacing:-1.796px;--w:39.6px;color:#ff9cff">1<i class="z">0</i></div><div class="m" style="left:2537.35px;top:1451px;letter-spacing:-1.796px;--w:39.6px;color:#ffffff">]</div><div class="m" style="left:2579.3px;top:1451px;letter-spacing:-1.796px;--w:39.6px;color:#808080">,</div><div class="m" style="left:2621.25px;top:1451px;letter-spacing:-1.796px;--w:39.6px;color:#ffff80">ax</div>
<div class="m" style="left:11.5px;top:1517px;letter-spacing:-1.766px;--w:39.63px;color:#c0c0c0"><i class="z">0</i><i class="z">0</i><i class="z">0</i><i class="z">0</i><i class="z">0</i><i class="z">0</i><i class="z">0</i>14<i class="z">0</i><i class="z">0</i>2534<i class="u">A</i></div>
<div class="m" style="left:910.0px;top:1517px;letter-spacing:-1.796px;--w:39.6px;color:#c0c0c0"><i class="u">E</i><i class="u">B</i></div><div class="m" style="left:1035.85px;top:1517px;letter-spacing:-1.796px;--w:39.6px;color:#c0c0c0"><i class="u">B</i><i class="u">A</i></div>
<div class="m" style="left:1572.5px;top:1517px;letter-spacing:-1.796px;--w:39.6px;color:#ffa500">jmp</div><div class="m" style="left:1740.3px;top:1517px;letter-spacing:-1.796px;--w:39.6px;color:#a8ffff">1.14<i class="z">0</i><i class="z">0</i>253<i class="z">0</i>6</div>
<svg class="a" style="left:819px;top:1537px" width="32" height="22" viewBox="0 0 32 22"><path d="M2 19 L16 5 L30 19" stroke="#ff0000" stroke-width="5" fill="none"/></svg>
<div class="m" style="left:11.5px;top:1583px;letter-spacing:-1.766px;--w:39.63px;color:#ff0000"><i class="z">0</i><i class="z">0</i><i class="z">0</i><i class="z">0</i><i class="z">0</i><i class="z">0</i><i class="z">0</i>14<i class="z">0</i><i class="z">0</i>2534<i class="u">C</i></div>
<div class="m" style="left:910.0px;top:1583px;letter-spacing:-1.796px;--w:39.6px;color:#c0c0c0;-webkit-text-stroke-color:#000080">41</div><div class="m" style="left:993.9px;top:1583px;letter-spacing:-1.796px;--w:39.6px;color:#c0c0c0;-webkit-text-stroke-color:#000080">:</div><div class="m" style="left:1035.85px;top:1583px;letter-spacing:-1.796px;--w:39.6px;color:#c0c0c0;-webkit-text-stroke-color:#000080">57</div>
<div class="m" style="left:1572.5px;top:1583px;letter-spacing:-1.796px;--w:39.6px;color:#00ffff;-webkit-text-stroke-color:#000080">push</div><div class="m" style="left:1782.25px;top:1583px;letter-spacing:-1.796px;--w:39.6px;color:#ffff80;-webkit-text-stroke-color:#000080">r15</div>
<div class="m" style="left:11.5px;top:1649px;letter-spacing:-1.766px;--w:39.63px;color:#c0c0c0"><i class="z">0</i><i class="z">0</i><i class="z">0</i><i class="z">0</i><i class="z">0</i><i class="z">0</i><i class="z">0</i>14<i class="z">0</i><i class="z">0</i>2534<i class="u">E</i></div>
<div class="m" style="left:910.0px;top:1649px;letter-spacing:-1.796px;--w:39.6px;color:#c0c0c0">41</div><div class="m" style="left:993.9px;top:1649px;letter-spacing:-1.796px;--w:39.6px;color:#c0c0c0">:</div><div class="m" style="left:1035.85px;top:1649px;letter-spacing:-1.796px;--w:39.6px;color:#c0c0c0">56</div>
<div class="m" style="left:1572.5px;top:1649px;letter-spacing:-1.796px;--w:39.6px;color:#00ffff">push</div><div class="m" style="left:1782.25px;top:1649px;letter-spacing:-1.796px;--w:39.6px;color:#ffff80">r14</div>
<div class="m" style="left:11.5px;top:1715px;letter-spacing:-1.766px;--w:39.63px;color:#c0c0c0"><i class="z">0</i><i class="z">0</i><i class="z">0</i><i class="z">0</i><i class="z">0</i><i class="z">0</i><i class="z">0</i>14<i class="z">0</i><i class="z">0</i>2535<i class="z">0</i></div>
<div class="m" style="left:910.0px;top:1715px;letter-spacing:-1.796px;--w:39.6px;color:#c0c0c0">41</div><div class="m" style="left:993.9px;top:1715px;letter-spacing:-1.796px;--w:39.6px;color:#c0c0c0">:</div><div class="m" style="left:1035.85px;top:1715px;letter-spacing:-1.796px;--w:39.6px;color:#c0c0c0">55</div>
<div class="m" style="left:1572.5px;top:1715px;letter-spacing:-1.796px;--w:39.6px;color:#00ffff">push</div><div class="m" style="left:1782.25px;top:1715px;letter-spacing:-1.796px;--w:39.6px;color:#ffff80">r13</div>
</div>
<div class="a" style="left:33px;top:183px;width:411px;height:1842px;overflow:hidden">
<svg class="a" style="left:-33px;top:-183px" width="444" height="2025" viewBox="0 0 444 2025"><path d="M1 204 L22 183 L43 204" stroke="#ffa500" stroke-width="7" fill="none"/><path d="M68.7 204 L89.7 183 L110.7 204" stroke="#ffa500" stroke-width="7" fill="none"/><path d="M89.7 190 V1204 H374" stroke="#ffa500" stroke-width="6.7" fill="none" stroke-dasharray="29.5 6.5" stroke-dashoffset="-17"/><path d="M201 204 L222 183 L243 204" stroke="#ffa500" stroke-width="7" fill="none"/><path d="M222 190 V676 H374" stroke="#ffa500" stroke-width="6.7" fill="none" stroke-dasharray="29.5 6.5" stroke-dashoffset="-5"/><path d="M374 874 H156 V1468 H374" stroke="#ffa500" stroke-width="6.7" fill="none"/><path d="M352 853 L374 874 L352 895" stroke="#ffa500" stroke-width="6.7" fill="none"/><path d="M374 940 H222 V1534 H374" stroke="#808080" stroke-width="5" fill="none" stroke-dasharray="29.5 6.5"/><path d="M352 1513 L374 1534 L352 1555" stroke="#808080" stroke-width="5" fill="none"/><path d="M0 1732 H374" stroke="#ffa500" stroke-width="6.7" fill="none"/><circle cx="405" cy="216" r="18" fill="#808080"/><circle cx="405" cy="282" r="18" fill="#808080"/><circle cx="405" cy="348" r="18" fill="#808080"/><circle cx="405" cy="414" r="18" fill="#808080"/><circle cx="405" cy="480" r="18" fill="#808080"/><circle cx="405" cy="546" r="18" fill="#808080"/><circle cx="405" cy="612" r="18" fill="#808080"/><circle cx="405" cy="678" r="18" fill="#808080"/><circle cx="405" cy="744" r="18" fill="#808080"/><circle cx="405" cy="810" r="18" fill="#808080"/><circle cx="405" cy="876" r="18" fill="#808080"/><circle cx="405" cy="942" r="18" fill="#808080"/><circle cx="405" cy="1008" r="18" fill="#808080"/><circle cx="405" cy="1074" r="18" fill="#808080"/><circle cx="405" cy="1140" r="18" fill="#808080"/><circle cx="405" cy="1206" r="18" fill="#808080"/><circle cx="405" cy="1272" r="18" fill="#808080"/><circle cx="405" cy="1338" r="18" fill="#808080"/><circle cx="405" cy="1404" r="18" fill="#808080"/><circle cx="405" cy="1470" r="18" fill="#808080"/><circle cx="405" cy="1536" r="18" fill="#808080"/><circle cx="405" cy="1602" r="18" fill="#808080"/><circle cx="405" cy="1668" r="18" fill="#808080"/><circle cx="405" cy="1734" r="18" fill="#808080"/><circle cx="405" cy="1800" r="18" fill="#ff0000"/><circle cx="405" cy="1866" r="18" fill="#808080"/><circle cx="405" cy="1932" r="18" fill="#808080"/><rect x="33" y="1764" width="132" height="66" fill="#4040ff"/><path d="M168 1797 H370" stroke="#4040ff" stroke-width="10"/><path d="M343 1770 L371 1797 L343 1824" stroke="#4040ff" stroke-width="10" fill="none"/></svg>
<div class="m" style="left:4px;top:1582px;color:#fff;font-size:62px;letter-spacing:4.4px;-webkit-text-stroke-color:#4040ff">RIP</div>
</div>
<div class="a" style="left:33px;top:2037px;width:4107px;height:3px;background:#82878f"></div>
<div class="a" style="left:33px;top:2040px;width:4107px;height:3px;background:#fff"></div>
<div class="a" style="left:33px;top:2043px;width:4107px;height:480px;background:#000"></div>
<div class="a" style="left:33px;top:2523px;width:4107px;height:3px;background:#fff"></div>
<div class="a" style="left:33px;top:2526px;width:4107px;height:3px;background:#82878f"></div>
<div class="m" style="left:53px;top:2042px;letter-spacing:-1.596px;--w:39.8px;color:#fff">r15=<i class="z">0</i><i class="z">0</i><i class="z">0</i><i class="z">0</i><i class="z">0</i><i class="z">0</i><i class="u">D</i>5<i class="u">E</i>651<i class="u">D</i><i class="z">0</i>38 "nomercys.it.com"</div>
<div class="m" style="left:53px;top:2240px;letter-spacing:-1.596px;--w:39.8px;color:#fff">.text:<i class="z">0</i><i class="z">0</i><i class="z">0</i><i class="z">0</i><i class="z">0</i><i class="z">0</i><i class="z">0</i>14<i class="z">0</i><i class="z">0</i>2534c 1.exe:$2534c #2474c</div>
<div class="a" style="left:33px;top:2529px;width:4107px;height:150px;background:#efefef"></div>
<div class="a" style="left:33px;top:2546px;width:4107px;height:3px;background:#e4e4e4"></div>
<div class="a" style="left:33px;top:2549px;width:4107px;height:130px;background:#f2f2f2"></div>
<div class="a" style="left:33px;top:2535px;width:529px;height:3px;background:#e5e5e5"></div>
<div class="a" style="left:33px;top:2538px;width:529px;height:141px;background:#f8f8f8"></div>
<div class="a" style="left:562px;top:2538px;width:3px;height:141px;background:#e6e6e6"></div>
<div class="a" style="left:1078px;top:2549px;width:3px;height:122px;background:#e3e3e3"></div>
<div class="a" style="left:1606px;top:2549px;width:3px;height:122px;background:#e3e3e3"></div>
<div class="a" style="left:2134px;top:2549px;width:3px;height:122px;background:#e3e3e3"></div>
<div class="a" style="left:2662px;top:2549px;width:3px;height:122px;background:#e3e3e3"></div>
<div class="a" style="left:3202px;top:2549px;width:3px;height:122px;background:#e3e3e3"></div>
<div class="a" style="left:3688px;top:2549px;width:3px;height:122px;background:#e3e3e3"></div>
<div class="a" style="left:33px;top:2679px;width:4107px;height:3px;background:#82878f"></div>
<div class="a" style="left:33px;top:2682px;width:4107px;height:3px;background:#fff"></div>
<div class="t" style="left:212.76918870015197px;top:2565.5px;transform:scaleX(0.9252754780274283)">Dump 1</div>
<div class="t" style="left:737.7548841214066px;top:2571px;transform:scaleX(0.9871453295205849)">Dump 2</div>
<div class="t" style="left:1268.1959154941885px;top:2571px;transform:scaleX(0.9721840528874005)">Dump 3</div>
<div class="t" style="left:1793.822798536514px;top:2571px;transform:scaleX(0.98732270058049)">Dump 4</div>
<div class="t" style="left:2320.776842457659px;top:2571px;transform:scaleX(0.9903279881066248)">Dump 5</div>
<div class="t" style="left:2857.578461538461px;top:2571px;transform:scaleX(0.9473538461538462)">Watch 1</div>
<div class="t" style="left:3389.7504823799914px;top:2571px;transform:scaleX(0.9749247487213161)">Locals</div>
<div class="t" style="left:3879.890224967748px;top:2571px;transform:scaleX(0.9716082128092192)">Struct</div>
<svg class="a" style="left:96px;top:2565px" width="96" height="84" viewBox="0 0 96 84" shape-rendering="crispEdges"><rect x="6" y="78" width="90" height="6" fill="#000" opacity="0.08"/><rect x="30" y="0" width="6" height="6" fill="#d4d4d4"/><rect x="36" y="0" width="48" height="6" fill="#c8c8c8"/><rect x="84" y="0" width="6" height="6" fill="#d4d4d4"/><rect x="24" y="6" width="12" height="6" fill="#d4d4d4"/><rect x="36" y="6" width="12" height="6" fill="#e6e6e6"/><rect x="48" y="6" width="6" height="6" fill="#b8b8b8"/><rect x="54" y="6" width="12" height="6" fill="#e6e6e6"/><rect x="66" y="6" width="6" height="6" fill="#b8b8b8"/><rect x="72" y="6" width="12" height="6" fill="#e6e6e6"/><rect x="84" y="6" width="6" height="6" fill="#d4d4d4"/><rect x="90" y="6" width="6" height="6" fill="#c8c8c8"/><rect x="0" y="12" width="6" height="6" fill="#f8c868"/><rect x="6" y="12" width="18" height="6" fill="#f4a830"/><rect x="24" y="12" width="6" height="6" fill="#e49030"/><rect x="30" y="12" width="6" height="6" fill="#e6e6e6"/><rect x="36" y="12" width="12" height="6" fill="#dedede"/><rect x="48" y="12" width="6" height="6" fill="#b8b8b8"/><rect x="54" y="12" width="12" height="6" fill="#dedede"/><rect x="66" y="12" width="6" height="6" fill="#b8b8b8"/><rect x="72" y="12" width="18" height="6" fill="#dedede"/><rect x="90" y="12" width="6" height="6" fill="#b0b0b0"/><rect x="0" y="18" width="6" height="6" fill="#f4a830"/><rect x="6" y="18" width="18" height="6" fill="#ffd438"/><rect x="24" y="18" width="6" height="6" fill="#e49030"/><rect x="30" y="18" width="18" height="6" fill="#dedede"/><rect x="48" y="18" width="6" height="6" fill="#b8b8b8"/><rect x="54" y="18" width="12" height="6" fill="#dedede"/><rect x="66" y="18" width="6" height="6" fill="#b8b8b8"/><rect x="72" y="18" width="18" height="6" fill="#dedede"/><rect x="90" y="18" width="6" height="6" fill="#b0b0b0"/><rect x="0" y="24" width="18" height="6" fill="#5080b0"/><rect x="18" y="24" width="6" height="6" fill="#ffd438"/><rect x="24" y="24" width="6" height="6" fill="#d88830"/><rect x="30" y="24" width="18" height="6" fill="#c4c4cc"/><rect x="48" y="24" width="6" height="6" fill="#808080"/><rect x="54" y="24" width="12" height="6" fill="#c4c4cc"/><rect x="66" y="24" width="6" height="6" fill="#808080"/><rect x="72" y="24" width="18" height="6" fill="#c4c4cc"/><rect x="90" y="24" width="6" height="6" fill="#b0b0b0"/><rect x="0" y="30" width="6" height="6" fill="#5080b0"/><rect x="6" y="30" width="6" height="6" fill="#90b8dc"/><rect x="12" y="30" width="6" height="6" fill="#5080b0"/><rect x="18" y="30" width="6" height="6" fill="#ffd438"/><rect x="24" y="30" width="6" height="6" fill="#d88830"/><rect x="30" y="30" width="12" height="6" fill="#a4a4bc"/><rect x="42" y="30" width="6" height="6" fill="#808080"/><rect x="48" y="30" width="6" height="6" fill="#a4a4bc"/><rect x="54" y="30" width="12" height="6" fill="#aab4c0"/><rect x="66" y="30" width="6" height="6" fill="#808080"/><rect x="72" y="30" width="18" height="6" fill="#a4b4ac"/><rect x="90" y="30" width="6" height="6" fill="#b0b0b0"/><rect x="0" y="36" width="6" height="6" fill="#5080b0"/><rect x="6" y="36" width="6" height="6" fill="#90b8dc"/><rect x="12" y="36" width="6" height="6" fill="#5080b0"/><rect x="18" y="36" width="6" height="6" fill="#ffd438"/><rect x="24" y="36" width="6" height="6" fill="#d88830"/><rect x="30" y="36" width="12" height="6" fill="#a4a4bc"/><rect x="42" y="36" width="6" height="6" fill="#808080"/><rect x="48" y="36" width="6" height="6" fill="#a4a4bc"/><rect x="54" y="36" width="12" height="6" fill="#aab4c0"/><rect x="66" y="36" width="6" height="6" fill="#808080"/><rect x="72" y="36" width="18" height="6" fill="#a4b4ac"/><rect x="90" y="36" width="6" height="6" fill="#b0b0b0"/><rect x="0" y="42" width="6" height="6" fill="#5080b0"/><rect x="6" y="42" width="6" height="6" fill="#90b8dc"/><rect x="12" y="42" width="6" height="6" fill="#a0b090"/><rect x="18" y="42" width="6" height="6" fill="#ffd438"/><rect x="24" y="42" width="6" height="6" fill="#d88830"/><rect x="30" y="42" width="12" height="6" fill="#a4a4bc"/><rect x="42" y="42" width="6" height="6" fill="#808080"/><rect x="48" y="42" width="6" height="6" fill="#a4a4bc"/><rect x="54" y="42" width="12" height="6" fill="#aab4c0"/><rect x="66" y="42" width="6" height="6" fill="#808080"/><rect x="72" y="42" width="18" height="6" fill="#a4b4ac"/><rect x="90" y="42" width="6" height="6" fill="#b0b0b0"/><rect x="0" y="48" width="6" height="6" fill="#f4a830"/><rect x="6" y="48" width="18" height="6" fill="#ffd438"/><rect x="24" y="48" width="6" height="6" fill="#d88830"/><rect x="30" y="48" width="12" height="6" fill="#d4d4ea"/><rect x="42" y="48" width="6" height="6" fill="#808080"/><rect x="48" y="48" width="6" height="6" fill="#d4d4ea"/><rect x="54" y="48" width="12" height="6" fill="#d2dae0"/><rect x="66" y="48" width="6" height="6" fill="#808080"/><rect x="72" y="48" width="18" height="6" fill="#c8dcd0"/><rect x="90" y="48" width="6" height="6" fill="#b0b0b0"/><rect x="0" y="54" width="6" height="6" fill="#606060"/><rect x="6" y="54" width="6" height="6" fill="#e8a000"/><rect x="12" y="54" width="12" height="6" fill="#604830"/><rect x="24" y="54" width="6" height="6" fill="#d88830"/><rect x="30" y="54" width="12" height="6" fill="#d4d4ea"/><rect x="42" y="54" width="6" height="6" fill="#808080"/><rect x="48" y="54" width="6" height="6" fill="#d4d4ea"/><rect x="54" y="54" width="12" height="6" fill="#d2dae0"/><rect x="66" y="54" width="6" height="6" fill="#a09898"/><rect x="72" y="54" width="12" height="6" fill="#604830"/><rect x="84" y="54" width="6" height="6" fill="#c8dcd0"/><rect x="90" y="54" width="6" height="6" fill="#b0b0b0"/><rect x="0" y="60" width="6" height="6" fill="#606060"/><rect x="6" y="60" width="6" height="6" fill="#201414"/><rect x="12" y="60" width="12" height="6" fill="#808080"/><rect x="24" y="60" width="6" height="6" fill="#201414"/><rect x="30" y="60" width="6" height="6" fill="#808080"/><rect x="36" y="60" width="24" height="6" fill="#626262"/><rect x="60" y="60" width="6" height="6" fill="#808080"/><rect x="66" y="60" width="6" height="6" fill="#201414"/><rect x="72" y="60" width="12" height="6" fill="#808080"/><rect x="84" y="60" width="6" height="6" fill="#201414"/><rect x="90" y="60" width="6" height="6" fill="#626262"/><rect x="6" y="66" width="6" height="6" fill="#201414"/><rect x="12" y="66" width="6" height="6" fill="#808080"/><rect x="18" y="66" width="6" height="6" fill="#c4c4c4"/><rect x="24" y="66" width="6" height="6" fill="#201414"/><rect x="66" y="66" width="6" height="6" fill="#201414"/><rect x="72" y="66" width="6" height="6" fill="#808080"/><rect x="78" y="66" width="6" height="6" fill="#c4c4c4"/><rect x="84" y="66" width="6" height="6" fill="#201414"/><rect x="6" y="72" width="6" height="6" fill="#a09898"/><rect x="12" y="72" width="12" height="6" fill="#201414"/><rect x="24" y="72" width="6" height="6" fill="#a09898"/><rect x="66" y="72" width="6" height="6" fill="#a09898"/><rect x="72" y="72" width="12" height="6" fill="#201414"/><rect x="84" y="72" width="6" height="6" fill="#a09898"/></svg>
<svg class="a" style="left:623px;top:2571px" width="96" height="84" viewBox="0 0 96 84" shape-rendering="crispEdges"><rect x="6" y="78" width="90" height="6" fill="#000" opacity="0.08"/><rect x="30" y="0" width="6" height="6" fill="#d4d4d4"/><rect x="36" y="0" width="48" height="6" fill="#c8c8c8"/><rect x="84" y="0" width="6" height="6" fill="#d4d4d4"/><rect x="24" y="6" width="12" height="6" fill="#d4d4d4"/><rect x="36" y="6" width="12" height="6" fill="#e6e6e6"/><rect x="48" y="6" width="6" height="6" fill="#b8b8b8"/><rect x="54" y="6" width="12" height="6" fill="#e6e6e6"/><rect x="66" y="6" width="6" height="6" fill="#b8b8b8"/><rect x="72" y="6" width="12" height="6" fill="#e6e6e6"/><rect x="84" y="6" width="6" height="6" fill="#d4d4d4"/><rect x="90" y="6" width="6" height="6" fill="#c8c8c8"/><rect x="0" y="12" width="6" height="6" fill="#f8c868"/><rect x="6" y="12" width="18" height="6" fill="#f4a830"/><rect x="24" y="12" width="6" height="6" fill="#e49030"/><rect x="30" y="12" width="6" height="6" fill="#e6e6e6"/><rect x="36" y="12" width="12" height="6" fill="#dedede"/><rect x="48" y="12" width="6" height="6" fill="#b8b8b8"/><rect x="54" y="12" width="12" height="6" fill="#dedede"/><rect x="66" y="12" width="6" height="6" fill="#b8b8b8"/><rect x="72" y="12" width="18" height="6" fill="#dedede"/><rect x="90" y="12" width="6" height="6" fill="#b0b0b0"/><rect x="0" y="18" width="6" height="6" fill="#f4a830"/><rect x="6" y="18" width="18" height="6" fill="#ffd438"/><rect x="24" y="18" width="6" height="6" fill="#e49030"/><rect x="30" y="18" width="18" height="6" fill="#dedede"/><rect x="48" y="18" width="6" height="6" fill="#b8b8b8"/><rect x="54" y="18" width="12" height="6" fill="#dedede"/><rect x="66" y="18" width="6" height="6" fill="#b8b8b8"/><rect x="72" y="18" width="18" height="6" fill="#dedede"/><rect x="90" y="18" width="6" height="6" fill="#b0b0b0"/><rect x="0" y="24" width="18" height="6" fill="#5080b0"/><rect x="18" y="24" width="6" height="6" fill="#ffd438"/><rect x="24" y="24" width="6" height="6" fill="#d88830"/><rect x="30" y="24" width="18" height="6" fill="#c4c4cc"/><rect x="48" y="24" width="6" height="6" fill="#808080"/><rect x="54" y="24" width="12" height="6" fill="#c4c4cc"/><rect x="66" y="24" width="6" height="6" fill="#808080"/><rect x="72" y="24" width="18" height="6" fill="#c4c4cc"/><rect x="90" y="24" width="6" height="6" fill="#b0b0b0"/><rect x="0" y="30" width="6" height="6" fill="#5080b0"/><rect x="6" y="30" width="6" height="6" fill="#90b8dc"/><rect x="12" y="30" width="6" height="6" fill="#5080b0"/><rect x="18" y="30" width="6" height="6" fill="#ffd438"/><rect x="24" y="30" width="6" height="6" fill="#d88830"/><rect x="30" y="30" width="12" height="6" fill="#a4a4bc"/><rect x="42" y="30" width="6" height="6" fill="#808080"/><rect x="48" y="30" width="6" height="6" fill="#a4a4bc"/><rect x="54" y="30" width="12" height="6" fill="#aab4c0"/><rect x="66" y="30" width="6" height="6" fill="#808080"/><rect x="72" y="30" width="18" height="6" fill="#a4b4ac"/><rect x="90" y="30" width="6" height="6" fill="#b0b0b0"/><rect x="0" y="36" width="6" height="6" fill="#5080b0"/><rect x="6" y="36" width="6" height="6" fill="#90b8dc"/><rect x="12" y="36" width="6" height="6" fill="#5080b0"/><rect x="18" y="36" width="6" height="6" fill="#ffd438"/><rect x="24" y="36" width="6" height="6" fill="#d88830"/><rect x="30" y="36" width="12" height="6" fill="#a4a4bc"/><rect x="42" y="36" width="6" height="6" fill="#808080"/><rect x="48" y="36" width="6" height="6" fill="#a4a4bc"/><rect x="54" y="36" width="12" height="6" fill="#aab4c0"/><rect x="66" y="36" width="6" height="6" fill="#808080"/><rect x="72" y="36" width="18" height="6" fill="#a4b4ac"/><rect x="90" y="36" width="6" height="6" fill="#b0b0b0"/><rect x="0" y="42" width="6" height="6" fill="#5080b0"/><rect x="6" y="42" width="6" height="6" fill="#90b8dc"/><rect x="12" y="42" width="6" height="6" fill="#a0b090"/><rect x="18" y="42" width="6" height="6" fill="#ffd438"/><rect x="24" y="42" width="6" height="6" fill="#d88830"/><rect x="30" y="42" width="12" height="6" fill="#a4a4bc"/><rect x="42" y="42" width="6" height="6" fill="#808080"/><rect x="48" y="42" width="6" height="6" fill="#a4a4bc"/><rect x="54" y="42" width="12" height="6" fill="#aab4c0"/><rect x="66" y="42" width="6" height="6" fill="#808080"/><rect x="72" y="42" width="18" height="6" fill="#a4b4ac"/><rect x="90" y="42" width="6" height="6" fill="#b0b0b0"/><rect x="0" y="48" width="6" height="6" fill="#f4a830"/><rect x="6" y="48" width="18" height="6" fill="#ffd438"/><rect x="24" y="48" width="6" height="6" fill="#d88830"/><rect x="30" y="48" width="12" height="6" fill="#d4d4ea"/><rect x="42" y="48" width="6" height="6" fill="#808080"/><rect x="48" y="48" width="6" height="6" fill="#d4d4ea"/><rect x="54" y="48" width="12" height="6" fill="#d2dae0"/><rect x="66" y="48" width="6" height="6" fill="#808080"/><rect x="72" y="48" width="18" height="6" fill="#c8dcd0"/><rect x="90" y="48" width="6" height="6" fill="#b0b0b0"/><rect x="0" y="54" width="6" height="6" fill="#606060"/><rect x="6" y="54" width="6" height="6" fill="#e8a000"/><rect x="12" y="54" width="12" height="6" fill="#604830"/><rect x="24" y="54" width="6" height="6" fill="#d88830"/><rect x="30" y="54" width="12" height="6" fill="#d4d4ea"/><rect x="42" y="54" width="6" height="6" fill="#808080"/><rect x="48" y="54" width="6" height="6" fill="#d4d4ea"/><rect x="54" y="54" width="12" height="6" fill="#d2dae0"/><rect x="66" y="54" width="6" height="6" fill="#a09898"/><rect x="72" y="54" width="12" height="6" fill="#604830"/><rect x="84" y="54" width="6" height="6" fill="#c8dcd0"/><rect x="90" y="54" width="6" height="6" fill="#b0b0b0"/><rect x="0" y="60" width="6" height="6" fill="#606060"/><rect x="6" y="60" width="6" height="6" fill="#201414"/><rect x="12" y="60" width="12" height="6" fill="#808080"/><rect x="24" y="60" width="6" height="6" fill="#201414"/><rect x="30" y="60" width="6" height="6" fill="#808080"/><rect x="36" y="60" width="24" height="6" fill="#626262"/><rect x="60" y="60" width="6" height="6" fill="#808080"/><rect x="66" y="60" width="6" height="6" fill="#201414"/><rect x="72" y="60" width="12" height="6" fill="#808080"/><rect x="84" y="60" width="6" height="6" fill="#201414"/><rect x="90" y="60" width="6" height="6" fill="#626262"/><rect x="6" y="66" width="6" height="6" fill="#201414"/><rect x="12" y="66" width="6" height="6" fill="#808080"/><rect x="18" y="66" width="6" height="6" fill="#c4c4c4"/><rect x="24" y="66" width="6" height="6" fill="#201414"/><rect x="66" y="66" width="6" height="6" fill="#201414"/><rect x="72" y="66" width="6" height="6" fill="#808080"/><rect x="78" y="66" width="6" height="6" fill="#c4c4c4"/><rect x="84" y="66" width="6" height="6" fill="#201414"/><rect x="6" y="72" width="6" height="6" fill="#a09898"/><rect x="12" y="72" width="12" height="6" fill="#201414"/><rect x="24" y="72" width="6" height="6" fill="#a09898"/><rect x="66" y="72" width="6" height="6" fill="#a09898"/><rect x="72" y="72" width="12" height="6" fill="#201414"/><rect x="84" y="72" width="6" height="6" fill="#a09898"/></svg>
<svg class="a" style="left:1152px;top:2571px" width="96" height="84" viewBox="0 0 96 84" shape-rendering="crispEdges"><rect x="6" y="78" width="90" height="6" fill="#000" opacity="0.08"/><rect x="30" y="0" width="6" height="6" fill="#d4d4d4"/><rect x="36" y="0" width="48" height="6" fill="#c8c8c8"/><rect x="84" y="0" width="6" height="6" fill="#d4d4d4"/><rect x="24" y="6" width="12" height="6" fill="#d4d4d4"/><rect x="36" y="6" width="12" height="6" fill="#e6e6e6"/><rect x="48" y="6" width="6" height="6" fill="#b8b8b8"/><rect x="54" y="6" width="12" height="6" fill="#e6e6e6"/><rect x="66" y="6" width="6" height="6" fill="#b8b8b8"/><rect x="72" y="6" width="12" height="6" fill="#e6e6e6"/><rect x="84" y="6" width="6" height="6" fill="#d4d4d4"/><rect x="90" y="6" width="6" height="6" fill="#c8c8c8"/><rect x="0" y="12" width="6" height="6" fill="#f8c868"/><rect x="6" y="12" width="18" height="6" fill="#f4a830"/><rect x="24" y="12" width="6" height="6" fill="#e49030"/><rect x="30" y="12" width="6" height="6" fill="#e6e6e6"/><rect x="36" y="12" width="12" height="6" fill="#dedede"/><rect x="48" y="12" width="6" height="6" fill="#b8b8b8"/><rect x="54" y="12" width="12" height="6" fill="#dedede"/><rect x="66" y="12" width="6" height="6" fill="#b8b8b8"/><rect x="72" y="12" width="18" height="6" fill="#dedede"/><rect x="90" y="12" width="6" height="6" fill="#b0b0b0"/><rect x="0" y="18" width="6" height="6" fill="#f4a830"/><rect x="6" y="18" width="18" height="6" fill="#ffd438"/><rect x="24" y="18" width="6" height="6" fill="#e49030"/><rect x="30" y="18" width="18" height="6" fill="#dedede"/><rect x="48" y="18" width="6" height="6" fill="#b8b8b8"/><rect x="54" y="18" width="12" height="6" fill="#dedede"/><rect x="66" y="18" width="6" height="6" fill="#b8b8b8"/><rect x="72" y="18" width="18" height="6" fill="#dedede"/><rect x="90" y="18" width="6" height="6" fill="#b0b0b0"/><rect x="0" y="24" width="18" height="6" fill="#5080b0"/><rect x="18" y="24" width="6" height="6" fill="#ffd438"/><rect x="24" y="24" width="6" height="6" fill="#d88830"/><rect x="30" y="24" width="18" height="6" fill="#c4c4cc"/><rect x="48" y="24" width="6" height="6" fill="#808080"/><rect x="54" y="24" width="12" height="6" fill="#c4c4cc"/><rect x="66" y="24" width="6" height="6" fill="#808080"/><rect x="72" y="24" width="18" height="6" fill="#c4c4cc"/><rect x="90" y="24" width="6" height="6" fill="#b0b0b0"/><rect x="0" y="30" width="6" height="6" fill="#5080b0"/><rect x="6" y="30" width="6" height="6" fill="#90b8dc"/><rect x="12" y="30" width="6" height="6" fill="#5080b0"/><rect x="18" y="30" width="6" height="6" fill="#ffd438"/><rect x="24" y="30" width="6" height="6" fill="#d88830"/><rect x="30" y="30" width="12" height="6" fill="#a4a4bc"/><rect x="42" y="30" width="6" height="6" fill="#808080"/><rect x="48" y="30" width="6" height="6" fill="#a4a4bc"/><rect x="54" y="30" width="12" height="6" fill="#aab4c0"/><rect x="66" y="30" width="6" height="6" fill="#808080"/><rect x="72" y="30" width="18" height="6" fill="#a4b4ac"/><rect x="90" y="30" width="6" height="6" fill="#b0b0b0"/><rect x="0" y="36" width="6" height="6" fill="#5080b0"/><rect x="6" y="36" width="6" height="6" fill="#90b8dc"/><rect x="12" y="36" width="6" height="6" fill="#5080b0"/><rect x="18" y="36" width="6" height="6" fill="#ffd438"/><rect x="24" y="36" width="6" height="6" fill="#d88830"/><rect x="30" y="36" width="12" height="6" fill="#a4a4bc"/><rect x="42" y="36" width="6" height="6" fill="#808080"/><rect x="48" y="36" width="6" height="6" fill="#a4a4bc"/><rect x="54" y="36" width="12" height="6" fill="#aab4c0"/><rect x="66" y="36" width="6" height="6" fill="#808080"/><rect x="72" y="36" width="18" height="6" fill="#a4b4ac"/><rect x="90" y="36" width="6" height="6" fill="#b0b0b0"/><rect x="0" y="42" width="6" height="6" fill="#5080b0"/><rect x="6" y="42" width="6" height="6" fill="#90b8dc"/><rect x="12" y="42" width="6" height="6" fill="#a0b090"/><rect x="18" y="42" width="6" height="6" fill="#ffd438"/><rect x="24" y="42" width="6" height="6" fill="#d88830"/><rect x="30" y="42" width="12" height="6" fill="#a4a4bc"/><rect x="42" y="42" width="6" height="6" fill="#808080"/><rect x="48" y="42" width="6" height="6" fill="#a4a4bc"/><rect x="54" y="42" width="12" height="6" fill="#aab4c0"/><rect x="66" y="42" width="6" height="6" fill="#808080"/><rect x="72" y="42" width="18" height="6" fill="#a4b4ac"/><rect x="90" y="42" width="6" height="6" fill="#b0b0b0"/><rect x="0" y="48" width="6" height="6" fill="#f4a830"/><rect x="6" y="48" width="18" height="6" fill="#ffd438"/><rect x="24" y="48" width="6" height="6" fill="#d88830"/><rect x="30" y="48" width="12" height="6" fill="#d4d4ea"/><rect x="42" y="48" width="6" height="6" fill="#808080"/><rect x="48" y="48" width="6" height="6" fill="#d4d4ea"/><rect x="54" y="48" width="12" height="6" fill="#d2dae0"/><rect x="66" y="48" width="6" height="6" fill="#808080"/><rect x="72" y="48" width="18" height="6" fill="#c8dcd0"/><rect x="90" y="48" width="6" height="6" fill="#b0b0b0"/><rect x="0" y="54" width="6" height="6" fill="#606060"/><rect x="6" y="54" width="6" height="6" fill="#e8a000"/><rect x="12" y="54" width="12" height="6" fill="#604830"/><rect x="24" y="54" width="6" height="6" fill="#d88830"/><rect x="30" y="54" width="12" height="6" fill="#d4d4ea"/><rect x="42" y="54" width="6" height="6" fill="#808080"/><rect x="48" y="54" width="6" height="6" fill="#d4d4ea"/><rect x="54" y="54" width="12" height="6" fill="#d2dae0"/><rect x="66" y="54" width="6" height="6" fill="#a09898"/><rect x="72" y="54" width="12" height="6" fill="#604830"/><rect x="84" y="54" width="6" height="6" fill="#c8dcd0"/><rect x="90" y="54" width="6" height="6" fill="#b0b0b0"/><rect x="0" y="60" width="6" height="6" fill="#606060"/><rect x="6" y="60" width="6" height="6" fill="#201414"/><rect x="12" y="60" width="12" height="6" fill="#808080"/><rect x="24" y="60" width="6" height="6" fill="#201414"/><rect x="30" y="60" width="6" height="6" fill="#808080"/><rect x="36" y="60" width="24" height="6" fill="#626262"/><rect x="60" y="60" width="6" height="6" fill="#808080"/><rect x="66" y="60" width="6" height="6" fill="#201414"/><rect x="72" y="60" width="12" height="6" fill="#808080"/><rect x="84" y="60" width="6" height="6" fill="#201414"/><rect x="90" y="60" width="6" height="6" fill="#626262"/><rect x="6" y="66" width="6" height="6" fill="#201414"/><rect x="12" y="66" width="6" height="6" fill="#808080"/><rect x="18" y="66" width="6" height="6" fill="#c4c4c4"/><rect x="24" y="66" width="6" height="6" fill="#201414"/><rect x="66" y="66" width="6" height="6" fill="#201414"/><rect x="72" y="66" width="6" height="6" fill="#808080"/><rect x="78" y="66" width="6" height="6" fill="#c4c4c4"/><rect x="84" y="66" width="6" height="6" fill="#201414"/><rect x="6" y="72" width="6" height="6" fill="#a09898"/><rect x="12" y="72" width="12" height="6" fill="#201414"/><rect x="24" y="72" width="6" height="6" fill="#a09898"/><rect x="66" y="72" width="6" height="6" fill="#a09898"/><rect x="72" y="72" width="12" height="6" fill="#201414"/><rect x="84" y="72" width="6" height="6" fill="#a09898"/></svg>
<svg class="a" style="left:1680px;top:2571px" width="96" height="84" viewBox="0 0 96 84" shape-rendering="crispEdges"><rect x="6" y="78" width="90" height="6" fill="#000" opacity="0.08"/><rect x="30" y="0" width="6" height="6" fill="#d4d4d4"/><rect x="36" y="0" width="48" height="6" fill="#c8c8c8"/><rect x="84" y="0" width="6" height="6" fill="#d4d4d4"/><rect x="24" y="6" width="12" height="6" fill="#d4d4d4"/><rect x="36" y="6" width="12" height="6" fill="#e6e6e6"/><rect x="48" y="6" width="6" height="6" fill="#b8b8b8"/><rect x="54" y="6" width="12" height="6" fill="#e6e6e6"/><rect x="66" y="6" width="6" height="6" fill="#b8b8b8"/><rect x="72" y="6" width="12" height="6" fill="#e6e6e6"/><rect x="84" y="6" width="6" height="6" fill="#d4d4d4"/><rect x="90" y="6" width="6" height="6" fill="#c8c8c8"/><rect x="0" y="12" width="6" height="6" fill="#f8c868"/><rect x="6" y="12" width="18" height="6" fill="#f4a830"/><rect x="24" y="12" width="6" height="6" fill="#e49030"/><rect x="30" y="12" width="6" height="6" fill="#e6e6e6"/><rect x="36" y="12" width="12" height="6" fill="#dedede"/><rect x="48" y="12" width="6" height="6" fill="#b8b8b8"/><rect x="54" y="12" width="12" height="6" fill="#dedede"/><rect x="66" y="12" width="6" height="6" fill="#b8b8b8"/><rect x="72" y="12" width="18" height="6" fill="#dedede"/><rect x="90" y="12" width="6" height="6" fill="#b0b0b0"/><rect x="0" y="18" width="6" height="6" fill="#f4a830"/><rect x="6" y="18" width="18" height="6" fill="#ffd438"/><rect x="24" y="18" width="6" height="6" fill="#e49030"/><rect x="30" y="18" width="18" height="6" fill="#dedede"/><rect x="48" y="18" width="6" height="6" fill="#b8b8b8"/><rect x="54" y="18" width="12" height="6" fill="#dedede"/><rect x="66" y="18" width="6" height="6" fill="#b8b8b8"/><rect x="72" y="18" width="18" height="6" fill="#dedede"/><rect x="90" y="18" width="6" height="6" fill="#b0b0b0"/><rect x="0" y="24" width="18" height="6" fill="#5080b0"/><rect x="18" y="24" width="6" height="6" fill="#ffd438"/><rect x="24" y="24" width="6" height="6" fill="#d88830"/><rect x="30" y="24" width="18" height="6" fill="#c4c4cc"/><rect x="48" y="24" width="6" height="6" fill="#808080"/><rect x="54" y="24" width="12" height="6" fill="#c4c4cc"/><rect x="66" y="24" width="6" height="6" fill="#808080"/><rect x="72" y="24" width="18" height="6" fill="#c4c4cc"/><rect x="90" y="24" width="6" height="6" fill="#b0b0b0"/><rect x="0" y="30" width="6" height="6" fill="#5080b0"/><rect x="6" y="30" width="6" height="6" fill="#90b8dc"/><rect x="12" y="30" width="6" height="6" fill="#5080b0"/><rect x="18" y="30" width="6" height="6" fill="#ffd438"/><rect x="24" y="30" width="6" height="6" fill="#d88830"/><rect x="30" y="30" width="12" height="6" fill="#a4a4bc"/><rect x="42" y="30" width="6" height="6" fill="#808080"/><rect x="48" y="30" width="6" height="6" fill="#a4a4bc"/><rect x="54" y="30" width="12" height="6" fill="#aab4c0"/><rect x="66" y="30" width="6" height="6" fill="#808080"/><rect x="72" y="30" width="18" height="6" fill="#a4b4ac"/><rect x="90" y="30" width="6" height="6" fill="#b0b0b0"/><rect x="0" y="36" width="6" height="6" fill="#5080b0"/><rect x="6" y="36" width="6" height="6" fill="#90b8dc"/><rect x="12" y="36" width="6" height="6" fill="#5080b0"/><rect x="18" y="36" width="6" height="6" fill="#ffd438"/><rect x="24" y="36" width="6" height="6" fill="#d88830"/><rect x="30" y="36" width="12" height="6" fill="#a4a4bc"/><rect x="42" y="36" width="6" height="6" fill="#808080"/><rect x="48" y="36" width="6" height="6" fill="#a4a4bc"/><rect x="54" y="36" width="12" height="6" fill="#aab4c0"/><rect x="66" y="36" width="6" height="6" fill="#808080"/><rect x="72" y="36" width="18" height="6" fill="#a4b4ac"/><rect x="90" y="36" width="6" height="6" fill="#b0b0b0"/><rect x="0" y="42" width="6" height="6" fill="#5080b0"/><rect x="6" y="42" width="6" height="6" fill="#90b8dc"/><rect x="12" y="42" width="6" height="6" fill="#a0b090"/><rect x="18" y="42" width="6" height="6" fill="#ffd438"/><rect x="24" y="42" width="6" height="6" fill="#d88830"/><rect x="30" y="42" width="12" height="6" fill="#a4a4bc"/><rect x="42" y="42" width="6" height="6" fill="#808080"/><rect x="48" y="42" width="6" height="6" fill="#a4a4bc"/><rect x="54" y="42" width="12" height="6" fill="#aab4c0"/><rect x="66" y="42" width="6" height="6" fill="#808080"/><rect x="72" y="42" width="18" height="6" fill="#a4b4ac"/><rect x="90" y="42" width="6" height="6" fill="#b0b0b0"/><rect x="0" y="48" width="6" height="6" fill="#f4a830"/><rect x="6" y="48" width="18" height="6" fill="#ffd438"/><rect x="24" y="48" width="6" height="6" fill="#d88830"/><rect x="30" y="48" width="12" height="6" fill="#d4d4ea"/><rect x="42" y="48" width="6" height="6" fill="#808080"/><rect x="48" y="48" width="6" height="6" fill="#d4d4ea"/><rect x="54" y="48" width="12" height="6" fill="#d2dae0"/><rect x="66" y="48" width="6" height="6" fill="#808080"/><rect x="72" y="48" width="18" height="6" fill="#c8dcd0"/><rect x="90" y="48" width="6" height="6" fill="#b0b0b0"/><rect x="0" y="54" width="6" height="6" fill="#606060"/><rect x="6" y="54" width="6" height="6" fill="#e8a000"/><rect x="12" y="54" width="12" height="6" fill="#604830"/><rect x="24" y="54" width="6" height="6" fill="#d88830"/><rect x="30" y="54" width="12" height="6" fill="#d4d4ea"/><rect x="42" y="54" width="6" height="6" fill="#808080"/><rect x="48" y="54" width="6" height="6" fill="#d4d4ea"/><rect x="54" y="54" width="12" height="6" fill="#d2dae0"/><rect x="66" y="54" width="6" height="6" fill="#a09898"/><rect x="72" y="54" width="12" height="6" fill="#604830"/><rect x="84" y="54" width="6" height="6" fill="#c8dcd0"/><rect x="90" y="54" width="6" height="6" fill="#b0b0b0"/><rect x="0" y="60" width="6" height="6" fill="#606060"/><rect x="6" y="60" width="6" height="6" fill="#201414"/><rect x="12" y="60" width="12" height="6" fill="#808080"/><rect x="24" y="60" width="6" height="6" fill="#201414"/><rect x="30" y="60" width="6" height="6" fill="#808080"/><rect x="36" y="60" width="24" height="6" fill="#626262"/><rect x="60" y="60" width="6" height="6" fill="#808080"/><rect x="66" y="60" width="6" height="6" fill="#201414"/><rect x="72" y="60" width="12" height="6" fill="#808080"/><rect x="84" y="60" width="6" height="6" fill="#201414"/><rect x="90" y="60" width="6" height="6" fill="#626262"/><rect x="6" y="66" width="6" height="6" fill="#201414"/><rect x="12" y="66" width="6" height="6" fill="#808080"/><rect x="18" y="66" width="6" height="6" fill="#c4c4c4"/><rect x="24" y="66" width="6" height="6" fill="#201414"/><rect x="66" y="66" width="6" height="6" fill="#201414"/><rect x="72" y="66" width="6" height="6" fill="#808080"/><rect x="78" y="66" width="6" height="6" fill="#c4c4c4"/><rect x="84" y="66" width="6" height="6" fill="#201414"/><rect x="6" y="72" width="6" height="6" fill="#a09898"/><rect x="12" y="72" width="12" height="6" fill="#201414"/><rect x="24" y="72" width="6" height="6" fill="#a09898"/><rect x="66" y="72" width="6" height="6" fill="#a09898"/><rect x="72" y="72" width="12" height="6" fill="#201414"/><rect x="84" y="72" width="6" height="6" fill="#a09898"/></svg>
<svg class="a" style="left:2208px;top:2571px" width="96" height="84" viewBox="0 0 96 84" shape-rendering="crispEdges"><rect x="6" y="78" width="90" height="6" fill="#000" opacity="0.08"/><rect x="30" y="0" width="6" height="6" fill="#d4d4d4"/><rect x="36" y="0" width="48" height="6" fill="#c8c8c8"/><rect x="84" y="0" width="6" height="6" fill="#d4d4d4"/><rect x="24" y="6" width="12" height="6" fill="#d4d4d4"/><rect x="36" y="6" width="12" height="6" fill="#e6e6e6"/><rect x="48" y="6" width="6" height="6" fill="#b8b8b8"/><rect x="54" y="6" width="12" height="6" fill="#e6e6e6"/><rect x="66" y="6" width="6" height="6" fill="#b8b8b8"/><rect x="72" y="6" width="12" height="6" fill="#e6e6e6"/><rect x="84" y="6" width="6" height="6" fill="#d4d4d4"/><rect x="90" y="6" width="6" height="6" fill="#c8c8c8"/><rect x="0" y="12" width="6" height="6" fill="#f8c868"/><rect x="6" y="12" width="18" height="6" fill="#f4a830"/><rect x="24" y="12" width="6" height="6" fill="#e49030"/><rect x="30" y="12" width="6" height="6" fill="#e6e6e6"/><rect x="36" y="12" width="12" height="6" fill="#dedede"/><rect x="48" y="12" width="6" height="6" fill="#b8b8b8"/><rect x="54" y="12" width="12" height="6" fill="#dedede"/><rect x="66" y="12" width="6" height="6" fill="#b8b8b8"/><rect x="72" y="12" width="18" height="6" fill="#dedede"/><rect x="90" y="12" width="6" height="6" fill="#b0b0b0"/><rect x="0" y="18" width="6" height="6" fill="#f4a830"/><rect x="6" y="18" width="18" height="6" fill="#ffd438"/><rect x="24" y="18" width="6" height="6" fill="#e49030"/><rect x="30" y="18" width="18" height="6" fill="#dedede"/><rect x="48" y="18" width="6" height="6" fill="#b8b8b8"/><rect x="54" y="18" width="12" height="6" fill="#dedede"/><rect x="66" y="18" width="6" height="6" fill="#b8b8b8"/><rect x="72" y="18" width="18" height="6" fill="#dedede"/><rect x="90" y="18" width="6" height="6" fill="#b0b0b0"/><rect x="0" y="24" width="18" height="6" fill="#5080b0"/><rect x="18" y="24" width="6" height="6" fill="#ffd438"/><rect x="24" y="24" width="6" height="6" fill="#d88830"/><rect x="30" y="24" width="18" height="6" fill="#c4c4cc"/><rect x="48" y="24" width="6" height="6" fill="#808080"/><rect x="54" y="24" width="12" height="6" fill="#c4c4cc"/><rect x="66" y="24" width="6" height="6" fill="#808080"/><rect x="72" y="24" width="18" height="6" fill="#c4c4cc"/><rect x="90" y="24" width="6" height="6" fill="#b0b0b0"/><rect x="0" y="30" width="6" height="6" fill="#5080b0"/><rect x="6" y="30" width="6" height="6" fill="#90b8dc"/><rect x="12" y="30" width="6" height="6" fill="#5080b0"/><rect x="18" y="30" width="6" height="6" fill="#ffd438"/><rect x="24" y="30" width="6" height="6" fill="#d88830"/><rect x="30" y="30" width="12" height="6" fill="#a4a4bc"/><rect x="42" y="30" width="6" height="6" fill="#808080"/><rect x="48" y="30" width="6" height="6" fill="#a4a4bc"/><rect x="54" y="30" width="12" height="6" fill="#aab4c0"/><rect x="66" y="30" width="6" height="6" fill="#808080"/><rect x="72" y="30" width="18" height="6" fill="#a4b4ac"/><rect x="90" y="30" width="6" height="6" fill="#b0b0b0"/><rect x="0" y="36" width="6" height="6" fill="#5080b0"/><rect x="6" y="36" width="6" height="6" fill="#90b8dc"/><rect x="12" y="36" width="6" height="6" fill="#5080b0"/><rect x="18" y="36" width="6" height="6" fill="#ffd438"/><rect x="24" y="36" width="6" height="6" fill="#d88830"/><rect x="30" y="36" width="12" height="6" fill="#a4a4bc"/><rect x="42" y="36" width="6" height="6" fill="#808080"/><rect x="48" y="36" width="6" height="6" fill="#a4a4bc"/><rect x="54" y="36" width="12" height="6" fill="#aab4c0"/><rect x="66" y="36" width="6" height="6" fill="#808080"/><rect x="72" y="36" width="18" height="6" fill="#a4b4ac"/><rect x="90" y="36" width="6" height="6" fill="#b0b0b0"/><rect x="0" y="42" width="6" height="6" fill="#5080b0"/><rect x="6" y="42" width="6" height="6" fill="#90b8dc"/><rect x="12" y="42" width="6" height="6" fill="#a0b090"/><rect x="18" y="42" width="6" height="6" fill="#ffd438"/><rect x="24" y="42" width="6" height="6" fill="#d88830"/><rect x="30" y="42" width="12" height="6" fill="#a4a4bc"/><rect x="42" y="42" width="6" height="6" fill="#808080"/><rect x="48" y="42" width="6" height="6" fill="#a4a4bc"/><rect x="54" y="42" width="12" height="6" fill="#aab4c0"/><rect x="66" y="42" width="6" height="6" fill="#808080"/><rect x="72" y="42" width="18" height="6" fill="#a4b4ac"/><rect x="90" y="42" width="6" height="6" fill="#b0b0b0"/><rect x="0" y="48" width="6" height="6" fill="#f4a830"/><rect x="6" y="48" width="18" height="6" fill="#ffd438"/><rect x="24" y="48" width="6" height="6" fill="#d88830"/><rect x="30" y="48" width="12" height="6" fill="#d4d4ea"/><rect x="42" y="48" width="6" height="6" fill="#808080"/><rect x="48" y="48" width="6" height="6" fill="#d4d4ea"/><rect x="54" y="48" width="12" height="6" fill="#d2dae0"/><rect x="66" y="48" width="6" height="6" fill="#808080"/><rect x="72" y="48" width="18" height="6" fill="#c8dcd0"/><rect x="90" y="48" width="6" height="6" fill="#b0b0b0"/><rect x="0" y="54" width="6" height="6" fill="#606060"/><rect x="6" y="54" width="6" height="6" fill="#e8a000"/><rect x="12" y="54" width="12" height="6" fill="#604830"/><rect x="24" y="54" width="6" height="6" fill="#d88830"/><rect x="30" y="54" width="12" height="6" fill="#d4d4ea"/><rect x="42" y="54" width="6" height="6" fill="#808080"/><rect x="48" y="54" width="6" height="6" fill="#d4d4ea"/><rect x="54" y="54" width="12" height="6" fill="#d2dae0"/><rect x="66" y="54" width="6" height="6" fill="#a09898"/><rect x="72" y="54" width="12" height="6" fill="#604830"/><rect x="84" y="54" width="6" height="6" fill="#c8dcd0"/><rect x="90" y="54" width="6" height="6" fill="#b0b0b0"/><rect x="0" y="60" width="6" height="6" fill="#606060"/><rect x="6" y="60" width="6" height="6" fill="#201414"/><rect x="12" y="60" width="12" height="6" fill="#808080"/><rect x="24" y="60" width="6" height="6" fill="#201414"/><rect x="30" y="60" width="6" height="6" fill="#808080"/><rect x="36" y="60" width="24" height="6" fill="#626262"/><rect x="60" y="60" width="6" height="6" fill="#808080"/><rect x="66" y="60" width="6" height="6" fill="#201414"/><rect x="72" y="60" width="12" height="6" fill="#808080"/><rect x="84" y="60" width="6" height="6" fill="#201414"/><rect x="90" y="60" width="6" height="6" fill="#626262"/><rect x="6" y="66" width="6" height="6" fill="#201414"/><rect x="12" y="66" width="6" height="6" fill="#808080"/><rect x="18" y="66" width="6" height="6" fill="#c4c4c4"/><rect x="24" y="66" width="6" height="6" fill="#201414"/><rect x="66" y="66" width="6" height="6" fill="#201414"/><rect x="72" y="66" width="6" height="6" fill="#808080"/><rect x="78" y="66" width="6" height="6" fill="#c4c4c4"/><rect x="84" y="66" width="6" height="6" fill="#201414"/><rect x="6" y="72" width="6" height="6" fill="#a09898"/><rect x="12" y="72" width="12" height="6" fill="#201414"/><rect x="24" y="72" width="6" height="6" fill="#a09898"/><rect x="66" y="72" width="6" height="6" fill="#a09898"/><rect x="72" y="72" width="12" height="6" fill="#201414"/><rect x="84" y="72" width="6" height="6" fill="#a09898"/></svg>
<svg class="a" style="left:2736px;top:2565px" width="90" height="90" viewBox="0 0 90 90" shape-rendering="crispEdges"><rect x="12" y="84" width="66" height="6" fill="#000" opacity="0.08"/><rect x="12" y="0" width="6" height="6" fill="#e4cfc0"/><rect x="18" y="0" width="12" height="6" fill="#b06028"/><rect x="30" y="0" width="6" height="6" fill="#e4cfc0"/><rect x="54" y="0" width="6" height="6" fill="#e4cfc0"/><rect x="60" y="0" width="12" height="6" fill="#b06028"/><rect x="72" y="0" width="6" height="6" fill="#e4cfc0"/><rect x="6" y="6" width="6" height="6" fill="#e4cfc0"/><rect x="12" y="6" width="6" height="6" fill="#b06028"/><rect x="18" y="6" width="6" height="6" fill="#fff0d0"/><rect x="24" y="6" width="6" height="6" fill="#e0b070"/><rect x="30" y="6" width="6" height="6" fill="#b06028"/><rect x="36" y="6" width="6" height="6" fill="#e4cfc0"/><rect x="48" y="6" width="6" height="6" fill="#e4cfc0"/><rect x="54" y="6" width="6" height="6" fill="#b06028"/><rect x="60" y="6" width="6" height="6" fill="#e0b070"/><rect x="66" y="6" width="6" height="6" fill="#fff0d0"/><rect x="72" y="6" width="6" height="6" fill="#b06028"/><rect x="78" y="6" width="6" height="6" fill="#e4cfc0"/><rect x="6" y="12" width="6" height="6" fill="#d0a080"/><rect x="12" y="12" width="6" height="6" fill="#e2c292"/><rect x="18" y="12" width="12" height="6" fill="#e0b070"/><rect x="30" y="12" width="6" height="6" fill="#a06020"/><rect x="36" y="12" width="18" height="6" fill="#8c4430"/><rect x="54" y="12" width="6" height="6" fill="#a06020"/><rect x="60" y="12" width="12" height="6" fill="#e0b070"/><rect x="72" y="12" width="6" height="6" fill="#e2c292"/><rect x="78" y="12" width="6" height="6" fill="#d0a080"/><rect x="6" y="18" width="6" height="6" fill="#b06028"/><rect x="12" y="18" width="6" height="6" fill="#e2c292"/><rect x="18" y="18" width="6" height="6" fill="#e0b070"/><rect x="24" y="18" width="6" height="6" fill="#c08040"/><rect x="30" y="18" width="6" height="6" fill="#a06020"/><rect x="36" y="18" width="18" height="6" fill="#c08040"/><rect x="54" y="18" width="6" height="6" fill="#a06020"/><rect x="60" y="18" width="6" height="6" fill="#c08040"/><rect x="66" y="18" width="6" height="6" fill="#e0b070"/><rect x="72" y="18" width="6" height="6" fill="#e2c292"/><rect x="78" y="18" width="6" height="6" fill="#b06028"/><rect x="0" y="24" width="6" height="6" fill="#e4cfc0"/><rect x="6" y="24" width="6" height="6" fill="#c08040"/><rect x="12" y="24" width="12" height="6" fill="#e0b070"/><rect x="24" y="24" width="6" height="6" fill="#c08040"/><rect x="30" y="24" width="6" height="6" fill="#a06020"/><rect x="36" y="24" width="18" height="6" fill="#d4a058"/><rect x="54" y="24" width="6" height="6" fill="#a06020"/><rect x="60" y="24" width="6" height="6" fill="#c08040"/><rect x="66" y="24" width="12" height="6" fill="#e0b070"/><rect x="78" y="24" width="6" height="6" fill="#c08040"/><rect x="84" y="24" width="6" height="6" fill="#e4cfc0"/><rect x="0" y="30" width="6" height="6" fill="#d0a080"/><rect x="6" y="30" width="6" height="6" fill="#c08040"/><rect x="12" y="30" width="18" height="6" fill="#d4a058"/><rect x="30" y="30" width="6" height="6" fill="#fff0c8"/><rect x="36" y="30" width="18" height="6" fill="#d4a058"/><rect x="54" y="30" width="6" height="6" fill="#fff0c8"/><rect x="60" y="30" width="18" height="6" fill="#d4a058"/><rect x="78" y="30" width="6" height="6" fill="#c08040"/><rect x="84" y="30" width="6" height="6" fill="#d0a080"/><rect x="0" y="36" width="6" height="6" fill="#b06028"/><rect x="6" y="36" width="12" height="6" fill="#d4a058"/><rect x="18" y="36" width="12" height="6" fill="#c08040"/><rect x="30" y="36" width="6" height="6" fill="#a06020"/><rect x="36" y="36" width="18" height="6" fill="#d4a058"/><rect x="54" y="36" width="6" height="6" fill="#a06020"/><rect x="60" y="36" width="12" height="6" fill="#c08040"/><rect x="72" y="36" width="12" height="6" fill="#d4a058"/><rect x="84" y="36" width="6" height="6" fill="#b06028"/><rect x="0" y="42" width="6" height="6" fill="#c08040"/><rect x="6" y="42" width="12" height="6" fill="#d4a058"/><rect x="18" y="42" width="6" height="6" fill="#c08040"/><rect x="24" y="42" width="6" height="6" fill="#ffffff"/><rect x="30" y="42" width="6" height="6" fill="#605050"/><rect x="36" y="42" width="18" height="6" fill="#d4a058"/><rect x="54" y="42" width="6" height="6" fill="#605050"/><rect x="60" y="42" width="6" height="6" fill="#ffffff"/><rect x="66" y="42" width="6" height="6" fill="#c08040"/><rect x="72" y="42" width="12" height="6" fill="#d4a058"/><rect x="84" y="42" width="6" height="6" fill="#c08040"/><rect x="0" y="48" width="6" height="6" fill="#c8a060"/><rect x="6" y="48" width="6" height="6" fill="#d4a058"/><rect x="12" y="48" width="12" height="6" fill="#c08040"/><rect x="24" y="48" width="6" height="6" fill="#e8d0a8"/><rect x="30" y="48" width="6" height="6" fill="#201010"/><rect x="36" y="48" width="18" height="6" fill="#c8a060"/><rect x="54" y="48" width="6" height="6" fill="#201010"/><rect x="60" y="48" width="6" height="6" fill="#e8d0a8"/><rect x="66" y="48" width="12" height="6" fill="#c08040"/><rect x="78" y="48" width="6" height="6" fill="#d4a058"/><rect x="84" y="48" width="6" height="6" fill="#c8a060"/><rect x="0" y="54" width="6" height="6" fill="#c8a060"/><rect x="6" y="54" width="18" height="6" fill="#e2c292"/><rect x="24" y="54" width="12" height="6" fill="#d4a058"/><rect x="36" y="54" width="18" height="6" fill="#e0c090"/><rect x="54" y="54" width="12" height="6" fill="#d4a058"/><rect x="66" y="54" width="18" height="6" fill="#e2c292"/><rect x="84" y="54" width="6" height="6" fill="#c8a060"/><rect x="0" y="60" width="6" height="6" fill="#dcc8a8"/><rect x="6" y="60" width="6" height="6" fill="#d4a058"/><rect x="12" y="60" width="24" height="6" fill="#f8dcb0"/><rect x="36" y="60" width="6" height="6" fill="#403030"/><rect x="42" y="60" width="6" height="6" fill="#807070"/><rect x="48" y="60" width="6" height="6" fill="#403030"/><rect x="54" y="60" width="24" height="6" fill="#f8dcb0"/><rect x="78" y="60" width="6" height="6" fill="#d4a058"/><rect x="84" y="60" width="6" height="6" fill="#dcc8a8"/><rect x="6" y="66" width="6" height="6" fill="#c0a070"/><rect x="12" y="66" width="6" height="6" fill="#d4a058"/><rect x="18" y="66" width="6" height="6" fill="#f8dcb0"/><rect x="24" y="66" width="6" height="6" fill="#d4a058"/><rect x="30" y="66" width="6" height="6" fill="#f8dcb0"/><rect x="36" y="66" width="18" height="6" fill="#403030"/><rect x="54" y="66" width="6" height="6" fill="#f8dcb0"/><rect x="60" y="66" width="6" height="6" fill="#d4a058"/><rect x="66" y="66" width="6" height="6" fill="#f8dcb0"/><rect x="72" y="66" width="6" height="6" fill="#d4a058"/><rect x="78" y="66" width="6" height="6" fill="#c0a070"/><rect x="12" y="72" width="6" height="6" fill="#c0a070"/><rect x="18" y="72" width="12" height="6" fill="#a88850"/><rect x="30" y="72" width="6" height="6" fill="#e8d0a8"/><rect x="36" y="72" width="6" height="6" fill="#f8dcb0"/><rect x="42" y="72" width="6" height="6" fill="#b89050"/><rect x="48" y="72" width="6" height="6" fill="#f8dcb0"/><rect x="54" y="72" width="6" height="6" fill="#e8d0a8"/><rect x="60" y="72" width="12" height="6" fill="#a88850"/><rect x="72" y="72" width="6" height="6" fill="#c0a070"/><rect x="24" y="78" width="6" height="6" fill="#b09080"/><rect x="30" y="78" width="12" height="6" fill="#a88850"/><rect x="42" y="78" width="6" height="6" fill="#b89050"/><rect x="48" y="78" width="12" height="6" fill="#a88850"/><rect x="60" y="78" width="6" height="6" fill="#b09080"/></svg>
<svg class="a" style="left:3276px;top:2589px" width="96" height="60" viewBox="0 0 96 60" shape-rendering="crispEdges"><rect x="0" y="0" width="6" height="6" fill="#202020"/><rect x="6" y="0" width="6" height="6" fill="#b0b0b0"/><rect x="84" y="0" width="6" height="6" fill="#b0b0b0"/><rect x="90" y="0" width="6" height="6" fill="#202020"/><rect x="0" y="6" width="6" height="6" fill="#383838"/><rect x="90" y="6" width="6" height="6" fill="#383838"/><rect x="0" y="12" width="6" height="6" fill="#383838"/><rect x="18" y="12" width="6" height="6" fill="#a86868"/><rect x="24" y="12" width="6" height="6" fill="#8c3c3c"/><rect x="36" y="12" width="6" height="6" fill="#a86868"/><rect x="42" y="12" width="6" height="6" fill="#8c3c3c"/><rect x="90" y="12" width="6" height="6" fill="#383838"/><rect x="0" y="18" width="6" height="6" fill="#383838"/><rect x="24" y="18" width="6" height="6" fill="#802828"/><rect x="30" y="18" width="6" height="6" fill="#a86868"/><rect x="36" y="18" width="6" height="6" fill="#e8d0d0"/><rect x="48" y="18" width="6" height="6" fill="#d0d0d0"/><rect x="54" y="18" width="24" height="6" fill="#707070"/><rect x="78" y="18" width="6" height="6" fill="#b0b0b0"/><rect x="90" y="18" width="6" height="6" fill="#383838"/><rect x="0" y="24" width="6" height="6" fill="#383838"/><rect x="24" y="24" width="6" height="6" fill="#8c3c3c"/><rect x="30" y="24" width="6" height="6" fill="#a86868"/><rect x="48" y="24" width="6" height="6" fill="#e8e8e8"/><rect x="54" y="24" width="24" height="6" fill="#d0d0d0"/><rect x="78" y="24" width="6" height="6" fill="#e8e8e8"/><rect x="90" y="24" width="6" height="6" fill="#383838"/><rect x="0" y="30" width="6" height="6" fill="#383838"/><rect x="18" y="30" width="6" height="6" fill="#c09898"/><rect x="24" y="30" width="6" height="6" fill="#c8a8a8"/><rect x="30" y="30" width="6" height="6" fill="#802828"/><rect x="42" y="30" width="6" height="6" fill="#e8d0d0"/><rect x="48" y="30" width="6" height="6" fill="#d0d0d0"/><rect x="54" y="30" width="24" height="6" fill="#707070"/><rect x="78" y="30" width="6" height="6" fill="#b0b0b0"/><rect x="90" y="30" width="6" height="6" fill="#383838"/><rect x="0" y="36" width="6" height="6" fill="#383838"/><rect x="12" y="36" width="6" height="6" fill="#8c3c3c"/><rect x="18" y="36" width="6" height="6" fill="#c09898"/><rect x="30" y="36" width="12" height="6" fill="#a86868"/><rect x="42" y="36" width="6" height="6" fill="#c8a8a8"/><rect x="90" y="36" width="6" height="6" fill="#383838"/><rect x="0" y="42" width="6" height="6" fill="#383838"/><rect x="90" y="42" width="6" height="6" fill="#383838"/><rect x="0" y="48" width="6" height="6" fill="#202020"/><rect x="6" y="48" width="6" height="6" fill="#b0b0b0"/><rect x="84" y="48" width="6" height="6" fill="#b0b0b0"/><rect x="90" y="48" width="6" height="6" fill="#202020"/></svg>
<svg class="a" style="left:3762px;top:2571px" width="90" height="78" viewBox="0 0 90 78" shape-rendering="crispEdges"><rect x="36" y="72" width="72" height="6" fill="#000" opacity="0.08"/><rect x="6" y="0" width="6" height="6" fill="#7898e8"/><rect x="12" y="0" width="6" height="6" fill="#6080e8"/><rect x="18" y="0" width="6" height="6" fill="#7898e8"/><rect x="66" y="0" width="6" height="6" fill="#c8c8c8"/><rect x="72" y="0" width="6" height="6" fill="#b8b8b8"/><rect x="78" y="0" width="6" height="6" fill="#c8c8c8"/><rect x="0" y="6" width="6" height="6" fill="#6080e8"/><rect x="6" y="6" width="6" height="6" fill="#7898e8"/><rect x="12" y="6" width="6" height="6" fill="#c4d2f8"/><rect x="18" y="6" width="6" height="6" fill="#7898e8"/><rect x="24" y="6" width="6" height="6" fill="#6080e8"/><rect x="60" y="6" width="6" height="6" fill="#b8b8b8"/><rect x="66" y="6" width="6" height="6" fill="#d8d8d8"/><rect x="72" y="6" width="6" height="6" fill="#ffffff"/><rect x="78" y="6" width="6" height="6" fill="#d8d8d8"/><rect x="84" y="6" width="6" height="6" fill="#b8b8b8"/><rect x="0" y="12" width="6" height="6" fill="#2040b0"/><rect x="6" y="12" width="18" height="6" fill="#c4d2f8"/><rect x="24" y="12" width="6" height="6" fill="#2040b0"/><rect x="30" y="12" width="30" height="6" fill="#b0b0b0"/><rect x="60" y="12" width="6" height="6" fill="#a8a8a8"/><rect x="66" y="12" width="18" height="6" fill="#ffffff"/><rect x="84" y="12" width="6" height="6" fill="#a8a8a8"/><rect x="0" y="18" width="6" height="6" fill="#4060c8"/><rect x="6" y="18" width="6" height="6" fill="#7898e8"/><rect x="12" y="18" width="6" height="6" fill="#c4d2f8"/><rect x="18" y="18" width="6" height="6" fill="#7898e8"/><rect x="24" y="18" width="6" height="6" fill="#4060c8"/><rect x="42" y="18" width="6" height="6" fill="#a4a4a4"/><rect x="60" y="18" width="6" height="6" fill="#a8a8a8"/><rect x="66" y="18" width="6" height="6" fill="#b0b0b0"/><rect x="72" y="18" width="6" height="6" fill="#d8d8d8"/><rect x="78" y="18" width="6" height="6" fill="#b0b0b0"/><rect x="84" y="18" width="6" height="6" fill="#a8a8a8"/><rect x="6" y="24" width="6" height="6" fill="#6080e8"/><rect x="12" y="24" width="6" height="6" fill="#3050d8"/><rect x="18" y="24" width="6" height="6" fill="#6080e8"/><rect x="42" y="24" width="6" height="6" fill="#a4a4a4"/><rect x="66" y="24" width="6" height="6" fill="#a0a0a0"/><rect x="72" y="24" width="6" height="6" fill="#888888"/><rect x="78" y="24" width="6" height="6" fill="#a0a0a0"/><rect x="42" y="30" width="6" height="6" fill="#a4a4a4"/><rect x="42" y="36" width="6" height="6" fill="#a4a4a4"/><rect x="42" y="42" width="6" height="6" fill="#a4a4a4"/><rect x="66" y="42" width="6" height="6" fill="#c8c8c8"/><rect x="72" y="42" width="6" height="6" fill="#b8b8b8"/><rect x="78" y="42" width="6" height="6" fill="#c8c8c8"/><rect x="42" y="48" width="6" height="6" fill="#a4a4a4"/><rect x="60" y="48" width="6" height="6" fill="#b8b8b8"/><rect x="66" y="48" width="6" height="6" fill="#d8d8d8"/><rect x="72" y="48" width="6" height="6" fill="#ffffff"/><rect x="78" y="48" width="6" height="6" fill="#d8d8d8"/><rect x="84" y="48" width="6" height="6" fill="#b8b8b8"/><rect x="42" y="54" width="18" height="6" fill="#989898"/><rect x="60" y="54" width="6" height="6" fill="#a8a8a8"/><rect x="66" y="54" width="18" height="6" fill="#ffffff"/><rect x="84" y="54" width="6" height="6" fill="#a8a8a8"/><rect x="60" y="60" width="6" height="6" fill="#a8a8a8"/><rect x="66" y="60" width="6" height="6" fill="#b0b0b0"/><rect x="72" y="60" width="6" height="6" fill="#d8d8d8"/><rect x="78" y="60" width="6" height="6" fill="#b0b0b0"/><rect x="84" y="60" width="6" height="6" fill="#a8a8a8"/><rect x="66" y="66" width="6" height="6" fill="#a0a0a0"/><rect x="72" y="66" width="6" height="6" fill="#888888"/><rect x="78" y="66" width="6" height="6" fill="#a0a0a0"/></svg>
<div class="a" style="left:33px;top:2685px;width:4107px;height:78px;background:#c0c0c0"></div>
<div class="a" style="left:33px;top:2763px;width:4107px;height:12px;background:#0000ff"></div>
<div class="a" style="left:33px;top:2775px;width:4107px;height:518px;background:#000"></div>
<div class="a" style="left:33px;top:3293px;width:4107px;height:16px;background:#fff"></div>
<div class="m" style="left:49px;top:2697px;letter-spacing:-0.896px;--w:40.5px;color:#000;-webkit-text-stroke-color:#c0c0c0"><i class="u">A</i>ddress</div>
<div class="m" style="left:769px;top:2697px;letter-spacing:-0.896px;--w:40.5px;color:#000;-webkit-text-stroke-color:#c0c0c0"><i class="u">H</i>ex</div>
<div class="m" style="left:2790px;top:2697px;letter-spacing:-0.896px;--w:40.5px;color:#000;-webkit-text-stroke-color:#c0c0c0"><i class="u">A</i><i class="u">S</i><i class="u">C</i><i class="u">I</i><i class="u">I</i></div>
<div class="a" style="left:740px;top:2685px;width:8px;height:608px;background:#0000ff"></div>
<div class="a" style="left:2762px;top:2685px;width:7px;height:608px;background:#0000ff"></div>
<div class="a" style="left:3482px;top:2685px;width:7px;height:608px;background:#0000ff"></div>
<div class="a" style="left:1250px;top:2775px;width:5px;height:518px;background:#0000ff"></div>
<div class="a" style="left:1754px;top:2775px;width:5px;height:518px;background:#0000ff"></div>
<div class="a" style="left:2258px;top:2775px;width:5px;height:518px;background:#0000ff"></div>
<div class="a" style="left:33px;top:2775px;width:4107px;height:518px;overflow:hidden">
<div class="a" style="left:741px;top:384px;width:966px;height:12px;background:#000080"></div>
<div class="a" style="left:1750px;top:384px;width:964px;height:12px;background:#000080"></div>
<div class="a" style="left:741px;top:450px;width:966px;height:12px;background:#000080"></div>
<div class="a" style="left:718px;top:198px;width:125px;height:66px;background:#000080"></div>
<div class="a" style="left:2763px;top:198px;width:42px;height:66px;background:#000080"></div>
<div class="m" style="left:19.8px;top:-1px;letter-spacing:-1.796px;--w:39.6px;color:#808080"><i class="z">0</i><i class="z">0</i><i class="z">0</i><i class="z">0</i><i class="z">0</i><i class="z">0</i><i class="u">D</i>5<i class="u">E</i>651<i class="u">D</i><i class="z">0</i><i class="z">0</i>8</div>
<div class="m" style="left:738.8px;top:-1px;letter-spacing:-1.796px;--w:39.6px;color:#008000"><i class="z">0</i><i class="z">0</i></div>
<div class="a" style="left:2775.0px;top:42px;width:10px;height:10px;background:#008000"></div>
<div class="m" style="left:864.86px;top:-1px;letter-spacing:-1.796px;--w:39.6px;color:#008000"><i class="z">0</i><i class="z">0</i></div>
<div class="a" style="left:2817.0px;top:42px;width:10px;height:10px;background:#008000"></div>
<div class="m" style="left:990.92px;top:-1px;letter-spacing:-1.796px;--w:39.6px;color:#008000"><i class="z">0</i><i class="z">0</i></div>
<div class="a" style="left:2859.0px;top:42px;width:10px;height:10px;background:#008000"></div>
<div class="m" style="left:1116.98px;top:-1px;letter-spacing:-1.796px;--w:39.6px;color:#008000"><i class="z">0</i><i class="z">0</i></div>
<div class="a" style="left:2901.0px;top:42px;width:10px;height:10px;background:#008000"></div>
<div class="m" style="left:1243.04px;top:-1px;letter-spacing:-1.796px;--w:39.6px;color:#008000"><i class="z">0</i><i class="z">0</i></div>
<div class="a" style="left:2943.0px;top:42px;width:10px;height:10px;background:#008000"></div>
<div class="m" style="left:1369.1px;top:-1px;letter-spacing:-1.796px;--w:39.6px;color:#008000"><i class="z">0</i><i class="z">0</i></div>
<div class="a" style="left:2985.0px;top:42px;width:10px;height:10px;background:#008000"></div>
<div class="m" style="left:1495.16px;top:-1px;letter-spacing:-1.796px;--w:39.6px;color:#008000"><i class="z">0</i><i class="z">0</i></div>
<div class="a" style="left:3027.0px;top:42px;width:10px;height:10px;background:#008000"></div>
<div class="m" style="left:1621.22px;top:-1px;letter-spacing:-1.796px;--w:39.6px;color:#008000"><i class="z">0</i><i class="z">0</i></div>
<div class="a" style="left:3069.0px;top:42px;width:10px;height:10px;background:#008000"></div>
<div class="m" style="left:1747.28px;top:-1px;letter-spacing:-1.796px;--w:39.6px;color:#008000"><i class="z">0</i><i class="z">0</i></div>
<div class="a" style="left:3111.0px;top:42px;width:10px;height:10px;background:#008000"></div>
<div class="m" style="left:1873.34px;top:-1px;letter-spacing:-1.796px;--w:39.6px;color:#008000"><i class="z">0</i><i class="z">0</i></div>
<div class="a" style="left:3153.0px;top:42px;width:10px;height:10px;background:#008000"></div>
<div class="m" style="left:1999.4px;top:-1px;letter-spacing:-1.796px;--w:39.6px;color:#008000"><i class="z">0</i><i class="z">0</i></div>
<div class="a" style="left:3195.0px;top:42px;width:10px;height:10px;background:#008000"></div>
<div class="m" style="left:2125.46px;top:-1px;letter-spacing:-1.796px;--w:39.6px;color:#008000"><i class="z">0</i><i class="z">0</i></div>
<div class="a" style="left:3237.0px;top:42px;width:10px;height:10px;background:#008000"></div>
<div class="m" style="left:2251.52px;top:-1px;letter-spacing:-1.796px;--w:39.6px;color:#008000"><i class="z">0</i><i class="z">0</i></div>
<div class="a" style="left:3279.0px;top:42px;width:10px;height:10px;background:#008000"></div>
<div class="m" style="left:2377.58px;top:-1px;letter-spacing:-1.796px;--w:39.6px;color:#008000"><i class="z">0</i><i class="z">0</i></div>
<div class="a" style="left:3321.0px;top:42px;width:10px;height:10px;background:#008000"></div>
<div class="m" style="left:2503.64px;top:-1px;letter-spacing:-1.796px;--w:39.6px;color:#008000"><i class="z">0</i><i class="z">0</i></div>
<div class="a" style="left:3363.0px;top:42px;width:10px;height:10px;background:#008000"></div>
<div class="m" style="left:2629.7px;top:-1px;letter-spacing:-1.796px;--w:39.6px;color:#008000"><i class="z">0</i><i class="z">0</i></div>
<div class="a" style="left:3405.0px;top:42px;width:10px;height:10px;background:#008000"></div>
<div class="m" style="left:19.8px;top:65px;letter-spacing:-1.796px;--w:39.6px;color:#808080"><i class="z">0</i><i class="z">0</i><i class="z">0</i><i class="z">0</i><i class="z">0</i><i class="z">0</i><i class="u">D</i>5<i class="u">E</i>651<i class="u">D</i><i class="z">0</i>18</div>
<div class="m" style="left:738.8px;top:65px;letter-spacing:-1.796px;--w:39.6px;color:#008000"><i class="z">0</i><i class="z">0</i></div>
<div class="a" style="left:2775.0px;top:108px;width:10px;height:10px;background:#008000"></div>
<div class="m" style="left:864.86px;top:65px;letter-spacing:-1.796px;--w:39.6px;color:#008000"><i class="z">0</i><i class="z">0</i></div>
<div class="a" style="left:2817.0px;top:108px;width:10px;height:10px;background:#008000"></div>
<div class="m" style="left:990.92px;top:65px;letter-spacing:-1.796px;--w:39.6px;color:#008000"><i class="z">0</i><i class="z">0</i></div>
<div class="a" style="left:2859.0px;top:108px;width:10px;height:10px;background:#008000"></div>
<div class="m" style="left:1116.98px;top:65px;letter-spacing:-1.796px;--w:39.6px;color:#008000"><i class="z">0</i><i class="z">0</i></div>
<div class="a" style="left:2901.0px;top:108px;width:10px;height:10px;background:#008000"></div>
<div class="m" style="left:1243.04px;top:65px;letter-spacing:-1.796px;--w:39.6px;color:#008000"><i class="z">0</i><i class="z">0</i></div>
<div class="a" style="left:2943.0px;top:108px;width:10px;height:10px;background:#008000"></div>
<div class="m" style="left:1369.1px;top:65px;letter-spacing:-1.796px;--w:39.6px;color:#008000"><i class="z">0</i><i class="z">0</i></div>
<div class="a" style="left:2985.0px;top:108px;width:10px;height:10px;background:#008000"></div>
<div class="m" style="left:1495.16px;top:65px;letter-spacing:-1.796px;--w:39.6px;color:#008000"><i class="z">0</i><i class="z">0</i></div>
<div class="a" style="left:3027.0px;top:108px;width:10px;height:10px;background:#008000"></div>
<div class="m" style="left:1621.22px;top:65px;letter-spacing:-1.796px;--w:39.6px;color:#008000"><i class="z">0</i><i class="z">0</i></div>
<div class="a" style="left:3069.0px;top:108px;width:10px;height:10px;background:#008000"></div>
<div class="m" style="left:1747.28px;top:65px;letter-spacing:-1.796px;--w:39.6px;color:#e8e8e0"><i class="z">0</i>1</div>
<div class="a" style="left:3111.0px;top:108px;width:10px;height:10px;background:#e8e8e0"></div>
<div class="m" style="left:1873.34px;top:65px;letter-spacing:-1.796px;--w:39.6px;color:#008000"><i class="z">0</i><i class="z">0</i></div>
<div class="a" style="left:3153.0px;top:108px;width:10px;height:10px;background:#008000"></div>
<div class="m" style="left:1999.4px;top:65px;letter-spacing:-1.796px;--w:39.6px;color:#008000"><i class="z">0</i><i class="z">0</i></div>
<div class="a" style="left:3195.0px;top:108px;width:10px;height:10px;background:#008000"></div>
<div class="m" style="left:2125.46px;top:65px;letter-spacing:-1.796px;--w:39.6px;color:#008000"><i class="z">0</i><i class="z">0</i></div>
<div class="a" style="left:3237.0px;top:108px;width:10px;height:10px;background:#008000"></div>
<div class="m" style="left:2251.52px;top:65px;letter-spacing:-1.796px;--w:39.6px;color:#008000"><i class="z">0</i><i class="z">0</i></div>
<div class="a" style="left:3279.0px;top:108px;width:10px;height:10px;background:#008000"></div>
<div class="m" style="left:2377.58px;top:65px;letter-spacing:-1.796px;--w:39.6px;color:#008000"><i class="z">0</i><i class="z">0</i></div>
<div class="a" style="left:3321.0px;top:108px;width:10px;height:10px;background:#008000"></div>
<div class="m" style="left:2503.64px;top:65px;letter-spacing:-1.796px;--w:39.6px;color:#008000"><i class="z">0</i><i class="z">0</i></div>
<div class="a" style="left:3363.0px;top:108px;width:10px;height:10px;background:#008000"></div>
<div class="m" style="left:2629.7px;top:65px;letter-spacing:-1.796px;--w:39.6px;color:#008000"><i class="z">0</i><i class="z">0</i></div>
<div class="a" style="left:3405.0px;top:108px;width:10px;height:10px;background:#008000"></div>
<div class="m" style="left:19.8px;top:131px;letter-spacing:-1.796px;--w:39.6px;color:#808080"><i class="z">0</i><i class="z">0</i><i class="z">0</i><i class="z">0</i><i class="z">0</i><i class="z">0</i><i class="u">D</i>5<i class="u">E</i>651<i class="u">D</i><i class="z">0</i>28</div>
<div class="m" style="left:738.8px;top:131px;letter-spacing:-1.796px;--w:39.6px;color:#e8e8e0">1<i class="z">0</i></div>
<div class="a" style="left:2775.0px;top:174px;width:10px;height:10px;background:#e8e8e0"></div>
<div class="m" style="left:864.86px;top:131px;letter-spacing:-1.796px;--w:39.6px;color:#008000"><i class="z">0</i><i class="z">0</i></div>
<div class="a" style="left:2817.0px;top:174px;width:10px;height:10px;background:#008000"></div>
<div class="m" style="left:990.92px;top:131px;letter-spacing:-1.796px;--w:39.6px;color:#008000"><i class="z">0</i><i class="z">0</i></div>
<div class="a" style="left:2859.0px;top:174px;width:10px;height:10px;background:#008000"></div>
<div class="m" style="left:1116.98px;top:131px;letter-spacing:-1.796px;--w:39.6px;color:#008000"><i class="z">0</i><i class="z">0</i></div>
<div class="a" style="left:2901.0px;top:174px;width:10px;height:10px;background:#008000"></div>
<div class="m" style="left:1243.04px;top:131px;letter-spacing:-1.796px;--w:39.6px;color:#008000"><i class="z">0</i><i class="z">0</i></div>
<div class="a" style="left:2943.0px;top:174px;width:10px;height:10px;background:#008000"></div>
<div class="m" style="left:1369.1px;top:131px;letter-spacing:-1.796px;--w:39.6px;color:#008000"><i class="z">0</i><i class="z">0</i></div>
<div class="a" style="left:2985.0px;top:174px;width:10px;height:10px;background:#008000"></div>
<div class="m" style="left:1495.16px;top:131px;letter-spacing:-1.796px;--w:39.6px;color:#008000"><i class="z">0</i><i class="z">0</i></div>
<div class="a" style="left:3027.0px;top:174px;width:10px;height:10px;background:#008000"></div>
<div class="m" style="left:1621.22px;top:131px;letter-spacing:-1.796px;--w:39.6px;color:#008000"><i class="z">0</i><i class="z">0</i></div>
<div class="a" style="left:3069.0px;top:174px;width:10px;height:10px;background:#008000"></div>
<div class="m" style="left:1747.28px;top:131px;letter-spacing:-1.796px;--w:39.6px;color:#00ffff">68</div>
<div class="m" style="left:3097.0px;top:131px;letter-spacing:0.604px;--w:42.0px;color:#00ffff">h</div>
<div class="m" style="left:1873.34px;top:131px;letter-spacing:-1.796px;--w:39.6px;color:#00ffff">74</div>
<div class="m" style="left:3139.0px;top:131px;letter-spacing:0.604px;--w:42.0px;color:#00ffff">t</div>
<div class="m" style="left:1999.4px;top:131px;letter-spacing:-1.796px;--w:39.6px;color:#00ffff">74</div>
<div class="m" style="left:3181.0px;top:131px;letter-spacing:0.604px;--w:42.0px;color:#00ffff">t</div>
<div class="m" style="left:2125.46px;top:131px;letter-spacing:-1.796px;--w:39.6px;color:#00ffff">7<i class="z">0</i></div>
<div class="m" style="left:3223.0px;top:131px;letter-spacing:0.604px;--w:42.0px;color:#00ffff">p</div>
<div class="m" style="left:2251.52px;top:131px;letter-spacing:-1.796px;--w:39.6px;color:#00ffff">73</div>
<div class="m" style="left:3265.0px;top:131px;letter-spacing:0.604px;--w:42.0px;color:#00ffff">s</div>
<div class="m" style="left:2377.58px;top:131px;letter-spacing:-1.796px;--w:39.6px;color:#00ffff">3<i class="u">A</i></div>
<div class="m" style="left:3307.0px;top:131px;letter-spacing:0.604px;--w:42.0px;color:#00ffff">:</div>
<div class="m" style="left:2503.64px;top:131px;letter-spacing:-1.796px;--w:39.6px;color:#00ffff">2<i class="u">F</i></div>
<div class="m" style="left:3349.0px;top:131px;letter-spacing:0.604px;--w:42.0px;color:#00ffff">/</div>
<div class="m" style="left:2629.7px;top:131px;letter-spacing:-1.796px;--w:39.6px;color:#00ffff">2<i class="u">F</i></div>
<div class="m" style="left:3391.0px;top:131px;letter-spacing:0.604px;--w:42.0px;color:#00ffff">/</div>
<div class="m" style="left:19.8px;top:197px;letter-spacing:-1.796px;--w:39.6px;color:#808080"><i class="z">0</i><i class="z">0</i><i class="z">0</i><i class="z">0</i><i class="z">0</i><i class="z">0</i><i class="u">D</i>5<i class="u">E</i>651<i class="u">D</i><i class="z">0</i>38</div>
<div class="m" style="left:738.8px;top:197px;letter-spacing:-1.796px;--w:39.6px;color:#00ffff;-webkit-text-stroke-color:#000080">6<i class="u">E</i></div>
<div class="m" style="left:2761.0px;top:197px;letter-spacing:0.604px;--w:42.0px;color:#00ffff;-webkit-text-stroke-color:#000080">n</div>
<div class="m" style="left:864.86px;top:197px;letter-spacing:-1.796px;--w:39.6px;color:#00ffff">6<i class="u">F</i></div>
<div class="m" style="left:2803.0px;top:197px;letter-spacing:0.604px;--w:42.0px;color:#00ffff">o</div>
<div class="m" style="left:990.92px;top:197px;letter-spacing:-1.796px;--w:39.6px;color:#00ffff">6<i class="u">D</i></div>
<div class="m" style="left:2845.0px;top:197px;letter-spacing:0.604px;--w:42.0px;color:#00ffff">m</div>
<div class="m" style="left:1116.98px;top:197px;letter-spacing:-1.796px;--w:39.6px;color:#00ffff">65</div>
<div class="m" style="left:2887.0px;top:197px;letter-spacing:0.604px;--w:42.0px;color:#00ffff">e</div>
<div class="m" style="left:1243.04px;top:197px;letter-spacing:-1.796px;--w:39.6px;color:#00ffff">72</div>
<div class="m" style="left:2929.0px;top:197px;letter-spacing:0.604px;--w:42.0px;color:#00ffff">r</div>
<div class="m" style="left:1369.1px;top:197px;letter-spacing:-1.796px;--w:39.6px;color:#00ffff">63</div>
<div class="m" style="left:2971.0px;top:197px;letter-spacing:0.604px;--w:42.0px;color:#00ffff">c</div>
<div class="m" style="left:1495.16px;top:197px;letter-spacing:-1.796px;--w:39.6px;color:#00ffff">79</div>
<div class="m" style="left:3013.0px;top:197px;letter-spacing:0.604px;--w:42.0px;color:#00ffff">y</div>
<div class="m" style="left:1621.22px;top:197px;letter-spacing:-1.796px;--w:39.6px;color:#00ffff">73</div>
<div class="m" style="left:3055.0px;top:197px;letter-spacing:0.604px;--w:42.0px;color:#00ffff">s</div>
<div class="m" style="left:1747.28px;top:197px;letter-spacing:-1.796px;--w:39.6px;color:#00ffff">2<i class="u">E</i></div>
<div class="a" style="left:3111.0px;top:240px;width:10px;height:10px;background:#00ffff"></div>
<div class="m" style="left:1873.34px;top:197px;letter-spacing:-1.796px;--w:39.6px;color:#00ffff">69</div>
<div class="m" style="left:3139.0px;top:197px;letter-spacing:0.604px;--w:42.0px;color:#00ffff">i</div>
<div class="m" style="left:1999.4px;top:197px;letter-spacing:-1.796px;--w:39.6px;color:#00ffff">74</div>
<div class="m" style="left:3181.0px;top:197px;letter-spacing:0.604px;--w:42.0px;color:#00ffff">t</div>
<div class="m" style="left:2125.46px;top:197px;letter-spacing:-1.796px;--w:39.6px;color:#00ffff">2<i class="u">E</i></div>
<div class="a" style="left:3237.0px;top:240px;width:10px;height:10px;background:#00ffff"></div>
<div class="m" style="left:2251.52px;top:197px;letter-spacing:-1.796px;--w:39.6px;color:#00ffff">63</div>
<div class="m" style="left:3265.0px;top:197px;letter-spacing:0.604px;--w:42.0px;color:#00ffff">c</div>
<div class="m" style="left:2377.58px;top:197px;letter-spacing:-1.796px;--w:39.6px;color:#00ffff">6<i class="u">F</i></div>
<div class="m" style="left:3307.0px;top:197px;letter-spacing:0.604px;--w:42.0px;color:#00ffff">o</div>
<div class="m" style="left:2503.64px;top:197px;letter-spacing:-1.796px;--w:39.6px;color:#00ffff">6<i class="u">D</i></div>
<div class="m" style="left:3349.0px;top:197px;letter-spacing:0.604px;--w:42.0px;color:#00ffff">m</div>
<div class="m" style="left:2629.7px;top:197px;letter-spacing:-1.796px;--w:39.6px;color:#008000"><i class="z">0</i><i class="z">0</i></div>
<div class="a" style="left:3405.0px;top:240px;width:10px;height:10px;background:#008000"></div>
<div class="m" style="left:19.8px;top:263px;letter-spacing:-1.796px;--w:39.6px;color:#808080"><i class="z">0</i><i class="z">0</i><i class="z">0</i><i class="z">0</i><i class="z">0</i><i class="z">0</i><i class="u">D</i>5<i class="u">E</i>651<i class="u">D</i><i class="z">0</i>48</div>
<div class="m" style="left:738.8px;top:263px;letter-spacing:-1.796px;--w:39.6px;color:#008000"><i class="z">0</i><i class="z">0</i></div>
<div class="a" style="left:2775.0px;top:306px;width:10px;height:10px;background:#008000"></div>
<div class="m" style="left:864.86px;top:263px;letter-spacing:-1.796px;--w:39.6px;color:#008000"><i class="z">0</i><i class="z">0</i></div>
<div class="a" style="left:2817.0px;top:306px;width:10px;height:10px;background:#008000"></div>
<div class="m" style="left:990.92px;top:263px;letter-spacing:-1.796px;--w:39.6px;color:#008000"><i class="z">0</i><i class="z">0</i></div>
<div class="a" style="left:2859.0px;top:306px;width:10px;height:10px;background:#008000"></div>
<div class="m" style="left:1116.98px;top:263px;letter-spacing:-1.796px;--w:39.6px;color:#008000"><i class="z">0</i><i class="z">0</i></div>
<div class="a" style="left:2901.0px;top:306px;width:10px;height:10px;background:#008000"></div>
<div class="m" style="left:1243.04px;top:263px;letter-spacing:-1.796px;--w:39.6px;color:#008000"><i class="z">0</i><i class="z">0</i></div>
<div class="a" style="left:2943.0px;top:306px;width:10px;height:10px;background:#008000"></div>
<div class="m" style="left:1369.1px;top:263px;letter-spacing:-1.796px;--w:39.6px;color:#008000"><i class="z">0</i><i class="z">0</i></div>
<div class="a" style="left:2985.0px;top:306px;width:10px;height:10px;background:#008000"></div>
<div class="m" style="left:1495.16px;top:263px;letter-spacing:-1.796px;--w:39.6px;color:#008000"><i class="z">0</i><i class="z">0</i></div>
<div class="a" style="left:3027.0px;top:306px;width:10px;height:10px;background:#008000"></div>
<div class="m" style="left:1621.22px;top:263px;letter-spacing:-1.796px;--w:39.6px;color:#008000"><i class="z">0</i><i class="z">0</i></div>
<div class="a" style="left:3069.0px;top:306px;width:10px;height:10px;background:#008000"></div>
<div class="m" style="left:1747.28px;top:263px;letter-spacing:-1.796px;--w:39.6px;color:#008000"><i class="z">0</i><i class="z">0</i></div>
<div class="a" style="left:3111.0px;top:306px;width:10px;height:10px;background:#008000"></div>
<div class="m" style="left:1873.34px;top:263px;letter-spacing:-1.796px;--w:39.6px;color:#008000"><i class="z">0</i><i class="z">0</i></div>
<div class="a" style="left:3153.0px;top:306px;width:10px;height:10px;background:#008000"></div>
<div class="m" style="left:1999.4px;top:263px;letter-spacing:-1.796px;--w:39.6px;color:#008000"><i class="z">0</i><i class="z">0</i></div>
<div class="a" style="left:3195.0px;top:306px;width:10px;height:10px;background:#008000"></div>
<div class="m" style="left:2125.46px;top:263px;letter-spacing:-1.796px;--w:39.6px;color:#008000"><i class="z">0</i><i class="z">0</i></div>
<div class="a" style="left:3237.0px;top:306px;width:10px;height:10px;background:#008000"></div>
<div class="m" style="left:2251.52px;top:263px;letter-spacing:-1.796px;--w:39.6px;color:#008000"><i class="z">0</i><i class="z">0</i></div>
<div class="a" style="left:3279.0px;top:306px;width:10px;height:10px;background:#008000"></div>
<div class="m" style="left:2377.58px;top:263px;letter-spacing:-1.796px;--w:39.6px;color:#008000"><i class="z">0</i><i class="z">0</i></div>
<div class="a" style="left:3321.0px;top:306px;width:10px;height:10px;background:#008000"></div>
<div class="m" style="left:2503.64px;top:263px;letter-spacing:-1.796px;--w:39.6px;color:#008000"><i class="z">0</i><i class="z">0</i></div>
<div class="a" style="left:3363.0px;top:306px;width:10px;height:10px;background:#008000"></div>
<div class="m" style="left:2629.7px;top:263px;letter-spacing:-1.796px;--w:39.6px;color:#008000"><i class="z">0</i><i class="z">0</i></div>
<div class="a" style="left:3405.0px;top:306px;width:10px;height:10px;background:#008000"></div>
<div class="m" style="left:19.8px;top:329px;letter-spacing:-1.796px;--w:39.6px;color:#808080"><i class="z">0</i><i class="z">0</i><i class="z">0</i><i class="z">0</i><i class="z">0</i><i class="z">0</i><i class="u">D</i>5<i class="u">E</i>651<i class="u">D</i><i class="z">0</i>58</div>
<div class="m" style="left:738.8px;top:329px;letter-spacing:-1.796px;--w:39.6px;color:#e8e8e0">9<i class="z">0</i></div>
<div class="a" style="left:2775.0px;top:372px;width:10px;height:10px;background:#e8e8e0"></div>
<div class="m" style="left:864.86px;top:329px;letter-spacing:-1.796px;--w:39.6px;color:#e8e8e0"><i class="u">D</i>6</div>
<div class="m" style="left:2803.0px;top:329px;letter-spacing:0.604px;--w:42.0px;color:#e8e8e0"><i class="u">Ö</i></div>
<div class="m" style="left:990.92px;top:329px;letter-spacing:-1.796px;--w:39.6px;color:#00ffff">51</div>
<div class="m" style="left:2845.0px;top:329px;letter-spacing:0.604px;--w:42.0px;color:#00ffff"><i class="u">Q</i></div>
<div class="m" style="left:1116.98px;top:329px;letter-spacing:-1.796px;--w:39.6px;color:#e8e8e0"><i class="u">E</i>6</div>
<div class="m" style="left:2887.0px;top:329px;letter-spacing:0.604px;--w:42.0px;color:#e8e8e0">æ</div>
<div class="m" style="left:1243.04px;top:329px;letter-spacing:-1.796px;--w:39.6px;color:#e8e8e0"><i class="u">D</i>5</div>
<div class="m" style="left:2929.0px;top:329px;letter-spacing:0.604px;--w:42.0px;color:#e8e8e0"><i class="u">Õ</i></div>
<div class="m" style="left:1369.1px;top:329px;letter-spacing:-1.796px;--w:39.6px;color:#008000"><i class="z">0</i><i class="z">0</i></div>
<div class="a" style="left:2985.0px;top:372px;width:10px;height:10px;background:#008000"></div>
<div class="m" style="left:1495.16px;top:329px;letter-spacing:-1.796px;--w:39.6px;color:#008000"><i class="z">0</i><i class="z">0</i></div>
<div class="a" style="left:3027.0px;top:372px;width:10px;height:10px;background:#008000"></div>
<div class="m" style="left:1621.22px;top:329px;letter-spacing:-1.796px;--w:39.6px;color:#008000"><i class="z">0</i><i class="z">0</i></div>
<div class="a" style="left:3069.0px;top:372px;width:10px;height:10px;background:#008000"></div>
<div class="m" style="left:1747.28px;top:329px;letter-spacing:-1.796px;--w:39.6px;color:#e8e8e0"><i class="u">B</i><i class="z">0</i></div>
<div class="m" style="left:3097.0px;top:329px;letter-spacing:0.604px;--w:42.0px;color:#e8e8e0">°</div>
<div class="m" style="left:1873.34px;top:329px;letter-spacing:-1.796px;--w:39.6px;color:#e8e8e0"><i class="u">D</i>2</div>
<div class="m" style="left:3139.0px;top:329px;letter-spacing:0.604px;--w:42.0px;color:#e8e8e0"><i class="u">Ò</i></div>
<div class="m" style="left:1999.4px;top:329px;letter-spacing:-1.796px;--w:39.6px;color:#00ffff">51</div>
<div class="m" style="left:3181.0px;top:329px;letter-spacing:0.604px;--w:42.0px;color:#00ffff"><i class="u">Q</i></div>
<div class="m" style="left:2125.46px;top:329px;letter-spacing:-1.796px;--w:39.6px;color:#e8e8e0"><i class="u">E</i>6</div>
<div class="m" style="left:3223.0px;top:329px;letter-spacing:0.604px;--w:42.0px;color:#e8e8e0">æ</div>
<div class="m" style="left:2251.52px;top:329px;letter-spacing:-1.796px;--w:39.6px;color:#e8e8e0"><i class="u">D</i>5</div>
<div class="m" style="left:3265.0px;top:329px;letter-spacing:0.604px;--w:42.0px;color:#e8e8e0"><i class="u">Õ</i></div>
<div class="m" style="left:2377.58px;top:329px;letter-spacing:-1.796px;--w:39.6px;color:#008000"><i class="z">0</i><i class="z">0</i></div>
<div class="a" style="left:3321.0px;top:372px;width:10px;height:10px;background:#008000"></div>
<div class="m" style="left:2503.64px;top:329px;letter-spacing:-1.796px;--w:39.6px;color:#008000"><i class="z">0</i><i class="z">0</i></div>
<div class="a" style="left:3363.0px;top:372px;width:10px;height:10px;background:#008000"></div>
<div class="m" style="left:2629.7px;top:329px;letter-spacing:-1.796px;--w:39.6px;color:#008000"><i class="z">0</i><i class="z">0</i></div>
<div class="a" style="left:3405.0px;top:372px;width:10px;height:10px;background:#008000"></div>
<div class="m" style="left:19.8px;top:395px;letter-spacing:-1.796px;--w:39.6px;color:#808080"><i class="z">0</i><i class="z">0</i><i class="z">0</i><i class="z">0</i><i class="z">0</i><i class="z">0</i><i class="u">D</i>5<i class="u">E</i>651<i class="u">D</i><i class="z">0</i>68</div>
<div class="m" style="left:738.8px;top:395px;letter-spacing:-1.796px;--w:39.6px;color:#e8e8e0"><i class="u">C</i>8</div>
<div class="m" style="left:2761.0px;top:395px;letter-spacing:0.604px;--w:42.0px;color:#e8e8e0"><i class="u">È</i></div>
<div class="m" style="left:864.86px;top:395px;letter-spacing:-1.796px;--w:39.6px;color:#e8e8e0"><i class="u">C</i><i class="u">D</i></div>
<div class="m" style="left:2803.0px;top:395px;letter-spacing:0.604px;--w:42.0px;color:#e8e8e0"><i class="u">Í</i></div>
<div class="m" style="left:990.92px;top:395px;letter-spacing:-1.796px;--w:39.6px;color:#00ffff">51</div>
<div class="m" style="left:2845.0px;top:395px;letter-spacing:0.604px;--w:42.0px;color:#00ffff"><i class="u">Q</i></div>
<div class="m" style="left:1116.98px;top:395px;letter-spacing:-1.796px;--w:39.6px;color:#e8e8e0"><i class="u">E</i>6</div>
<div class="m" style="left:2887.0px;top:395px;letter-spacing:0.604px;--w:42.0px;color:#e8e8e0">æ</div>
<div class="m" style="left:1243.04px;top:395px;letter-spacing:-1.796px;--w:39.6px;color:#e8e8e0"><i class="u">D</i>5</div>
<div class="m" style="left:2929.0px;top:395px;letter-spacing:0.604px;--w:42.0px;color:#e8e8e0"><i class="u">Õ</i></div>
<div class="m" style="left:1369.1px;top:395px;letter-spacing:-1.796px;--w:39.6px;color:#008000"><i class="z">0</i><i class="z">0</i></div>
<div class="a" style="left:2985.0px;top:438px;width:10px;height:10px;background:#008000"></div>
<div class="m" style="left:1495.16px;top:395px;letter-spacing:-1.796px;--w:39.6px;color:#008000"><i class="z">0</i><i class="z">0</i></div>
<div class="a" style="left:3027.0px;top:438px;width:10px;height:10px;background:#008000"></div>
<div class="m" style="left:1621.22px;top:395px;letter-spacing:-1.796px;--w:39.6px;color:#008000"><i class="z">0</i><i class="z">0</i></div>
<div class="a" style="left:3069.0px;top:438px;width:10px;height:10px;background:#008000"></div>
<div class="m" style="left:1747.28px;top:395px;letter-spacing:-1.796px;--w:39.6px;color:#008000"><i class="z">0</i><i class="z">0</i></div>
<div class="a" style="left:3111.0px;top:438px;width:10px;height:10px;background:#008000"></div>
<div class="m" style="left:1873.34px;top:395px;letter-spacing:-1.796px;--w:39.6px;color:#008000"><i class="z">0</i><i class="z">0</i></div>
<div class="a" style="left:3153.0px;top:438px;width:10px;height:10px;background:#008000"></div>
<div class="m" style="left:1999.4px;top:395px;letter-spacing:-1.796px;--w:39.6px;color:#008000"><i class="z">0</i><i class="z">0</i></div>
<div class="a" style="left:3195.0px;top:438px;width:10px;height:10px;background:#008000"></div>
<div class="m" style="left:2125.46px;top:395px;letter-spacing:-1.796px;--w:39.6px;color:#008000"><i class="z">0</i><i class="z">0</i></div>
<div class="a" style="left:3237.0px;top:438px;width:10px;height:10px;background:#008000"></div>
<div class="m" style="left:2251.52px;top:395px;letter-spacing:-1.796px;--w:39.6px;color:#008000"><i class="z">0</i><i class="z">0</i></div>
<div class="a" style="left:3279.0px;top:438px;width:10px;height:10px;background:#008000"></div>
<div class="m" style="left:2377.58px;top:395px;letter-spacing:-1.796px;--w:39.6px;color:#008000"><i class="z">0</i><i class="z">0</i></div>
<div class="a" style="left:3321.0px;top:438px;width:10px;height:10px;background:#008000"></div>
<div class="m" style="left:2503.64px;top:395px;letter-spacing:-1.796px;--w:39.6px;color:#008000"><i class="z">0</i><i class="z">0</i></div>
<div class="a" style="left:3363.0px;top:438px;width:10px;height:10px;background:#008000"></div>
<div class="m" style="left:2629.7px;top:395px;letter-spacing:-1.796px;--w:39.6px;color:#008000"><i class="z">0</i><i class="z">0</i></div>
<div class="a" style="left:3405.0px;top:438px;width:10px;height:10px;background:#008000"></div>
<div class="m" style="left:19.8px;top:461px;letter-spacing:-1.796px;--w:39.6px;color:#808080"><i class="z">0</i><i class="z">0</i><i class="z">0</i><i class="z">0</i><i class="z">0</i><i class="z">0</i><i class="u">D</i>5<i class="u">E</i>651<i class="u">D</i><i class="z">0</i>78</div>
<div class="m" style="left:738.8px;top:461px;letter-spacing:-1.796px;--w:39.6px;color:#008000"><i class="z">0</i><i class="z">0</i></div>
<div class="a" style="left:2775.0px;top:504px;width:10px;height:10px;background:#008000"></div>
<div class="m" style="left:864.86px;top:461px;letter-spacing:-1.796px;--w:39.6px;color:#008000"><i class="z">0</i><i class="z">0</i></div>
<div class="a" style="left:2817.0px;top:504px;width:10px;height:10px;background:#008000"></div>
<div class="m" style="left:990.92px;top:461px;letter-spacing:-1.796px;--w:39.6px;color:#008000"><i class="z">0</i><i class="z">0</i></div>
<div class="a" style="left:2859.0px;top:504px;width:10px;height:10px;background:#008000"></div>
<div class="m" style="left:1116.98px;top:461px;letter-spacing:-1.796px;--w:39.6px;color:#008000"><i class="z">0</i><i class="z">0</i></div>
<div class="a" style="left:2901.0px;top:504px;width:10px;height:10px;background:#008000"></div>
<div class="m" style="left:1243.04px;top:461px;letter-spacing:-1.796px;--w:39.6px;color:#008000"><i class="z">0</i><i class="z">0</i></div>
<div class="a" style="left:2943.0px;top:504px;width:10px;height:10px;background:#008000"></div>
<div class="m" style="left:1369.1px;top:461px;letter-spacing:-1.796px;--w:39.6px;color:#008000"><i class="z">0</i><i class="z">0</i></div>
<div class="a" style="left:2985.0px;top:504px;width:10px;height:10px;background:#008000"></div>
<div class="m" style="left:1495.16px;top:461px;letter-spacing:-1.796px;--w:39.6px;color:#008000"><i class="z">0</i><i class="z">0</i></div>
<div class="a" style="left:3027.0px;top:504px;width:10px;height:10px;background:#008000"></div>
<div class="m" style="left:1621.22px;top:461px;letter-spacing:-1.796px;--w:39.6px;color:#008000"><i class="z">0</i><i class="z">0</i></div>
<div class="a" style="left:3069.0px;top:504px;width:10px;height:10px;background:#008000"></div>
<div class="m" style="left:1747.28px;top:461px;letter-spacing:-1.796px;--w:39.6px;color:#008000"><i class="z">0</i><i class="z">0</i></div>
<div class="a" style="left:3111.0px;top:504px;width:10px;height:10px;background:#008000"></div>
<div class="m" style="left:1873.34px;top:461px;letter-spacing:-1.796px;--w:39.6px;color:#008000"><i class="z">0</i><i class="z">0</i></div>
<div class="a" style="left:3153.0px;top:504px;width:10px;height:10px;background:#008000"></div>
<div class="m" style="left:1999.4px;top:461px;letter-spacing:-1.796px;--w:39.6px;color:#008000"><i class="z">0</i><i class="z">0</i></div>
<div class="a" style="left:3195.0px;top:504px;width:10px;height:10px;background:#008000"></div>
<div class="m" style="left:2125.46px;top:461px;letter-spacing:-1.796px;--w:39.6px;color:#008000"><i class="z">0</i><i class="z">0</i></div>
<div class="a" style="left:3237.0px;top:504px;width:10px;height:10px;background:#008000"></div>
<div class="m" style="left:2251.52px;top:461px;letter-spacing:-1.796px;--w:39.6px;color:#008000"><i class="z">0</i><i class="z">0</i></div>
<div class="a" style="left:3279.0px;top:504px;width:10px;height:10px;background:#008000"></div>
<div class="m" style="left:2377.58px;top:461px;letter-spacing:-1.796px;--w:39.6px;color:#008000"><i class="z">0</i><i class="z">0</i></div>
<div class="a" style="left:3321.0px;top:504px;width:10px;height:10px;background:#008000"></div>
<div class="m" style="left:2503.64px;top:461px;letter-spacing:-1.796px;--w:39.6px;color:#008000"><i class="z">0</i><i class="z">0</i></div>
<div class="a" style="left:3363.0px;top:504px;width:10px;height:10px;background:#008000"></div>
<div class="m" style="left:2629.7px;top:461px;letter-spacing:-1.796px;--w:39.6px;color:#008000"><i class="z">0</i><i class="z">0</i></div>
<div class="a" style="left:3405.0px;top:504px;width:10px;height:10px;background:#008000"></div>
</div>
<div class="a" style="left:2763px;top:2859px;width:722px;height:204px;border:6px solid #ff0040"></div>
</body></html>
